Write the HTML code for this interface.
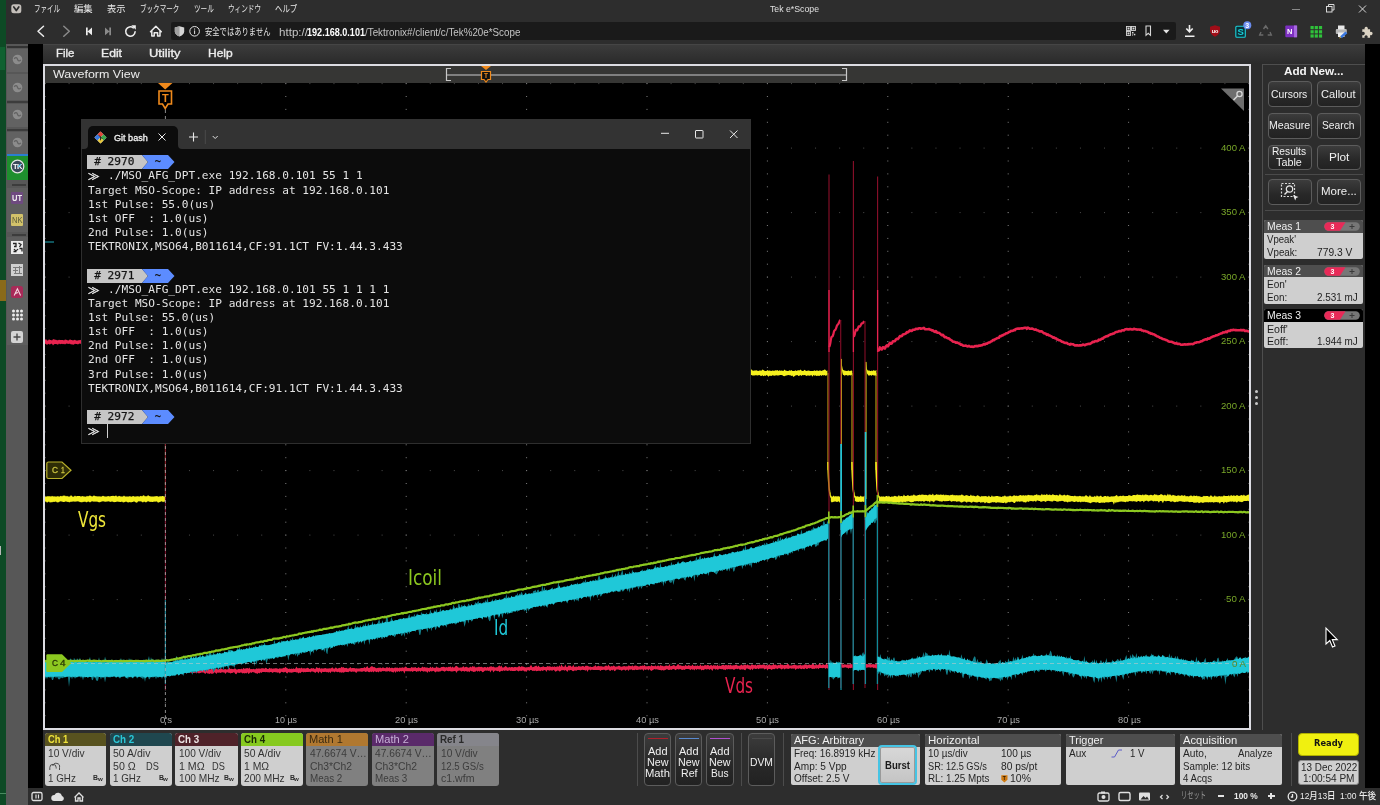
<!DOCTYPE html><html lang="ja"><head><meta charset="utf-8"><title>Tek e*Scope</title><style>
*{box-sizing:border-box;margin:0;padding:0}
html,body{width:1380px;height:805px;overflow:hidden;background:#000}
body{position:relative;font-family:"Liberation Sans","Noto Sans CJK JP",sans-serif;}
div{position:absolute}
svg{position:absolute;overflow:visible}
.btn{border:1px solid #5c5c5c;border-radius:4px;background:linear-gradient(#3c3c3c,#282828 60%,#222);}
</style></head><body><div id="all" style="left:0;top:0;width:1380px;height:805px;will-change:transform"><div style="left:0px;top:0px;width:1380px;height:44px;background:#2d2d2d"></div>
<div style="left:0px;top:0px;width:6px;height:805px;background:#0d4a25"></div>
<div style="left:0px;top:47px;width:5px;height:23px;background:#0f6130"></div>
<div style="left:0px;top:280px;width:6px;height:21px;background:#8a6a1a"></div>
<div style="left:0px;top:546px;width:1px;height:9px;background:#b8b8b8"></div>
<div style="left:0px;top:793px;width:6px;height:1px;background:#4a8a60"></div>
<svg style="left:11px;top:4px" width="11" height="10" viewBox="0 0 11 10"><rect x="0.300" y="0.300" width="10" height="9" rx="2.500" fill="#c4bfba"/><path d="M2.800 3 L5.300 6.600 L7.800 3" fill="none" stroke="#2d2d2d" stroke-width="1.700" stroke-linecap="round" stroke-linejoin="round"/></svg>
<div style="left:33.70px;top:2.16px;height:12px;line-height:12px;font-family:'Noto Sans CJK JP','Liberation Sans',sans-serif;font-size:9.5px;color:#e8e8e8;white-space:pre;transform:scaleX(0.6839);transform-origin:0 0;font-feature-settings:"palt";">ファイル</div>
<div style="left:74.00px;top:2.16px;height:12px;line-height:12px;font-family:'Noto Sans CJK JP','Liberation Sans',sans-serif;font-size:9.5px;color:#e8e8e8;white-space:pre;transform:scaleX(0.9834);transform-origin:0 0;font-feature-settings:"palt";">編集</div>
<div style="left:107.00px;top:2.16px;height:12px;line-height:12px;font-family:'Noto Sans CJK JP','Liberation Sans',sans-serif;font-size:9.5px;color:#e8e8e8;white-space:pre;transform:scaleX(0.9729);transform-origin:0 0;font-feature-settings:"palt";">表示</div>
<div style="left:139.50px;top:2.16px;height:12px;line-height:12px;font-family:'Noto Sans CJK JP','Liberation Sans',sans-serif;font-size:9.5px;color:#e8e8e8;white-space:pre;transform:scaleX(0.6893);transform-origin:0 0;font-feature-settings:"palt";">ブックマーク</div>
<div style="left:193.70px;top:2.16px;height:12px;line-height:12px;font-family:'Noto Sans CJK JP','Liberation Sans',sans-serif;font-size:9.5px;color:#e8e8e8;white-space:pre;transform:scaleX(0.6944);transform-origin:0 0;font-feature-settings:"palt";">ツール</div>
<div style="left:227.50px;top:2.16px;height:12px;line-height:12px;font-family:'Noto Sans CJK JP','Liberation Sans',sans-serif;font-size:9.5px;color:#e8e8e8;white-space:pre;transform:scaleX(0.6945);transform-origin:0 0;font-feature-settings:"palt";">ウィンドウ</div>
<div style="left:274.50px;top:2.16px;height:12px;line-height:12px;font-family:'Noto Sans CJK JP','Liberation Sans',sans-serif;font-size:9.5px;color:#e8e8e8;white-space:pre;transform:scaleX(0.7820);transform-origin:0 0;font-feature-settings:"palt";">ヘルプ</div>
<div style="left:769.50px;top:3.08px;height:12px;line-height:12px;font-family:'Liberation Sans','Noto Sans CJK JP',sans-serif;font-size:9.3px;color:#e0e0e0;white-space:pre;transform:scaleX(0.9386);transform-origin:0 0;">Tek e*Scope</div>
<svg style="left:1285px;top:0" width="95" height="18" viewBox="0 0 95 18"><g stroke="#d8d8d8" stroke-width="1" fill="none"><path d="M7 9.500h8" stroke="#8a8a8a"/><rect x="41.500" y="6.500" width="5.500" height="5.500"/><path d="M43.500 6.500v-2h5.500v5.500h-2"/><path d="M74 5.500l7 7M81 5.500l-7 7"/></g></svg>
<div style="left:171px;top:22px;width:1005px;height:17.8px;background:#1a1a1a;border-radius:2px"></div>
<svg style="left:30px;top:18px" width="140" height="25" viewBox="30 18 140 25">
<g fill="none" stroke="#ececec" stroke-width="1.500" stroke-linecap="round" stroke-linejoin="round">
<path d="M43.500 26.300 L38 31.300 L43.500 36.300"/>
<path d="M63.800 26.300 L69.300 31.300 L63.800 36.300" stroke="#8a8a8a"/>
<path d="M150.500 31.800 L155.900 26.200 L161.300 31.800 M151.800 30.800 V36 H154.200 V32.800 H157.600 V36 H160 V30.800"/>
<path d="M133.300 27.800 A4.700 4.700 0 1 0 135.100 31.800" stroke-width="1.600"/>
</g>
<path d="M131.300 25.300 L135.800 25.300 L135.800 29.800 Z" fill="#ececec"/>
<path d="M86 27.600h1.700v7.600h-1.700zM92 27.600v7.600l-4.500-3.800z" fill="#ececec"/>
<path d="M111 27.600h-1.700v7.600h1.700zM105 27.600v7.600l4.500-3.800z" fill="#8a8a8a"/>
</svg>
<svg style="left:172px;top:22px" width="32" height="20" viewBox="172 22 32 20">
<path d="M179.500 26.300 L184.200 27.600 V31.500 C184.200 34 182 35.600 179.500 36.500 C177 35.600 174.800 34 174.800 31.500 V27.600 Z" fill="#d4d4d4"/>
<path d="M179.500 26.300 V36.500 C177 35.600 174.800 34 174.800 31.500 V27.600 Z" fill="#a0a0a0"/>
<circle cx="194.600" cy="31.300" r="4.800" fill="none" stroke="#e4e4e4" stroke-width="1"/>
<rect x="194.100" y="30.400" width="1" height="3.600" fill="#e4e4e4"/><rect x="194.100" y="28.500" width="1" height="1.100" fill="#e4e4e4"/>
</svg>
<div style="left:205.00px;top:24.86px;height:12px;line-height:12px;font-family:'Noto Sans CJK JP','Liberation Sans',sans-serif;font-size:9.5px;color:#e4e4e4;white-space:pre;transform:scaleX(0.7686);transform-origin:0 0;font-feature-settings:"palt";">安全ではありません</div>
<div style="left:279.10px;top:24.66px;height:14px;line-height:14px;font-family:'Liberation Sans','Noto Sans CJK JP',sans-serif;font-size:10.5px;color:#c4c4c4;white-space:pre;transform:scaleX(1.1041);transform-origin:0 0;">http://</div>
<div style="left:307.40px;top:24.66px;height:14px;line-height:14px;font-family:'Liberation Sans','Noto Sans CJK JP',sans-serif;font-size:10.5px;font-weight:700;color:#ffffff;white-space:pre;transform:scaleX(0.8637);transform-origin:0 0;">192.168.0.101</div>
<div style="left:364.70px;top:24.66px;height:14px;line-height:14px;font-family:'Liberation Sans','Noto Sans CJK JP',sans-serif;font-size:10.5px;color:#c4c4c4;white-space:pre;transform:scaleX(0.9342);transform-origin:0 0;">/Tektronix#/client/c/Tek%20e*Scope</div>
<svg style="left:1120px;top:21px" width="260" height="20" viewBox="0 0 260 20">
<g fill="#d8d8d8">
<rect x="7.500" y="6.500" width="2" height="2"/><rect x="12.500" y="6.500" width="2" height="2"/><rect x="7.500" y="11.500" width="2" height="2"/><rect x="12" y="11" width="1.500" height="1.500"/><rect x="13.800" y="12.800" width="1.500" height="1.500"/><rect x="12" y="13.500" width="1" height="1"/>
</g>
<g fill="none" stroke="#d8d8d8" stroke-width="0.900">
<rect x="6.500" y="5.500" width="4" height="4"/><rect x="11.500" y="5.500" width="4" height="4"/><rect x="6.500" y="10.500" width="4" height="4"/>
<path d="M26 5 h4.500 v9.300 l-2.250 -2 l-2.250 2 z" stroke-width="1.100"/>
</g>
<path d="M43 8.800 l3.300 3.600 l3.300 -3.600 z" fill="#e4e4e4"/>
<path d="M69.500 4 v6.500 M66.300 7.500 l3.200 3.300 l3.200 -3.300 M65 15.300 h9.500" fill="none" stroke="#f0f0f0" stroke-width="1.600"/>
<path d="M95 4.300 l5 1.500 v3.700 c0 3 -2.500 5 -5 6.200 c-2.500 -1.200 -5 -3.200 -5 -6.200 v-3.700 z" fill="#a00d18"/>
<text x="95" y="12" font-size="5.500" fill="#fff" text-anchor="middle" font-family="Liberation Sans" font-weight="bold">uo</text>
<rect x="115.800" y="5.300" width="9.500" height="11" rx="1" fill="#0a3038" stroke="#1ad0d8" stroke-width="1.100"/>
<text x="120.600" y="14.300" font-size="9.500" fill="#1ad0d8" text-anchor="middle" font-family="Liberation Sans" font-weight="bold">S</text>
<circle cx="127.300" cy="4.300" r="4" fill="#6a8cf0"/>
<text x="127.300" y="6.800" font-size="7" fill="#fff" text-anchor="middle" font-family="Liberation Sans" font-weight="bold">3</text>
<g fill="none" stroke="#6a6a6a" stroke-width="1.400"><path d="M143.500 8 l2.200 -3.200 l2.200 3.200 M150 11 l1.300 3 h-3.600 M141 11 l-1.300 3 h3.600"/></g>
<rect x="165.300" y="4.500" width="11.800" height="11.800" rx="1" fill="#7d2fc2"/>
<rect x="174" y="4.500" width="3.100" height="11.800" fill="#a86ae0"/>
<text x="169.800" y="13.300" font-size="7.500" fill="#fff" text-anchor="middle" font-family="Liberation Sans" font-weight="bold">N</text>
<g fill="#2fc23a"><rect x="190.500" y="5" width="3.200" height="3.200"/><rect x="194.700" y="5" width="3.200" height="3.200"/><rect x="198.900" y="5" width="3.200" height="3.200"/><rect x="190.500" y="9.200" width="3.200" height="3.200"/><rect x="194.700" y="9.200" width="3.200" height="3.200"/><rect x="198.900" y="9.200" width="3.200" height="3.200"/><rect x="190.500" y="13.400" width="3.200" height="3.200"/><rect x="194.700" y="13.400" width="3.200" height="3.200"/><rect x="198.900" y="13.400" width="3.200" height="3.200"/></g>
<rect x="215.800" y="8" width="11" height="5" rx="1" fill="#b8b8b8"/><rect x="218" y="4.500" width="6.500" height="4" fill="#e8e8e8"/><rect x="218" y="11.500" width="6.500" height="4.500" fill="#f0f0f0"/>
<path d="M220 15.500 l5.500 -5 l1.800 1.800 l-5.500 5 z" fill="#3a78e0"/><path d="M219 17.500 l1.200 -2 l1 1 z" fill="#e8c040"/>
<path d="M242.300 8.300 h2.400 a1.700 1.700 0 1 1 3 0 h2.400 v2.700 a1.700 1.700 0 1 1 0 3 v2.700 h-2.600 a1.600 1.600 0 1 0 -2.800 0 h-2.400 v-2.700 a1.700 1.700 0 1 0 0 -3 z" fill="#dcd4c4"/>
</svg>
<div style="left:6px;top:44px;width:22px;height:761px;background:#575757"></div>
<div style="left:7px;top:46px;width:21px;height:2px;background:#333"></div>
<div style="left:7px;top:49px;width:21px;height:23px;background:#626262"></div>
<div style="left:7px;top:74px;width:21px;height:26px;background:#626262"></div>
<div style="left:7px;top:104px;width:21px;height:23px;background:#626262"></div>
<div style="left:7px;top:132px;width:21px;height:22px;background:#626262"></div>
<svg style="left:11.500px;top:54.0px" width="11" height="11" viewBox="0 0 11 11"><circle cx="5.500" cy="5.500" r="4.800" fill="#8c8c8c"/><path d="M2.200 4.800 q2.200 -2.500 3.300 0.500 t3.300 0.600" stroke="#626262" stroke-width="1.300" fill="none"/></svg>
<svg style="left:11.500px;top:81.5px" width="11" height="11" viewBox="0 0 11 11"><circle cx="5.500" cy="5.500" r="4.800" fill="#8c8c8c"/><path d="M2.200 4.800 q2.200 -2.500 3.300 0.500 t3.300 0.600" stroke="#626262" stroke-width="1.300" fill="none"/></svg>
<svg style="left:11.500px;top:109.1px" width="11" height="11" viewBox="0 0 11 11"><circle cx="5.500" cy="5.500" r="4.800" fill="#8c8c8c"/><path d="M2.200 4.800 q2.200 -2.500 3.300 0.500 t3.300 0.600" stroke="#626262" stroke-width="1.300" fill="none"/></svg>
<svg style="left:11.500px;top:136.5px" width="11" height="11" viewBox="0 0 11 11"><circle cx="5.500" cy="5.500" r="4.800" fill="#8c8c8c"/><path d="M2.200 4.800 q2.200 -2.500 3.300 0.500 t3.300 0.600" stroke="#626262" stroke-width="1.300" fill="none"/></svg>
<div style="left:7px;top:101px;width:21px;height:2px;background:#3c3c3c"></div>
<div style="left:7px;top:129px;width:21px;height:2px;background:#3c3c3c"></div>
<div style="left:7px;top:154px;width:21px;height:2px;background:#2a7fd0"></div>
<div style="left:7px;top:156px;width:21px;height:24px;background:#1e8f2e"></div>
<svg style="left:10px;top:158.500px" width="15" height="15" viewBox="0 0 15 15"><circle cx="7.500" cy="7.500" r="6.300" fill="#3a4a5a" stroke="#e4e4e4" stroke-width="1.200"/><text x="7.500" y="10.300" font-size="7.500" fill="#fff" text-anchor="middle" font-family="Liberation Sans" font-weight="bold" letter-spacing="-0.500">TK</text><path d="M10.800 5.100 L8.200 8" stroke="#30c0f0" stroke-width="1.100"/></svg>
<div style="left:12px;top:184px;width:14px;height:2px;background:#3c3c3c"></div>
<div style="left:7px;top:188px;width:21px;height:44px;background:#5e5e5e"></div>
<div style="left:10.7px;top:191.6px;width:12.8px;height:12px;background:#6e4a80;border-radius:1px"></div>
<div style="left:12.30px;top:192.55px;height:11px;line-height:11px;font-family:'Liberation Sans','Noto Sans CJK JP',sans-serif;font-size:8.5px;font-weight:700;color:#f0f0f0;white-space:pre;transform:scaleX(0.8815);transform-origin:0 0;">UT</div>
<div style="left:10.7px;top:214.2px;width:12.8px;height:11.6px;background:#d2c26a;border-radius:1px"></div>
<div style="left:11.80px;top:215.15px;height:11px;line-height:11px;font-family:'Liberation Sans','Noto Sans CJK JP',sans-serif;font-size:8.5px;color:#5a5a3a;white-space:pre;transform:scaleX(0.8889);transform-origin:0 0;">NK</div>
<div style="left:12px;top:233.5px;width:14px;height:2px;background:#3c3c3c"></div>
<div style="left:7px;top:237px;width:21px;height:108px;background:#5e5e5e"></div>
<div style="left:10.7px;top:240.8px;width:12.8px;height:13px;background:#ececec"></div>
<svg style="left:10.700px;top:240.800px" width="13" height="13" viewBox="0 0 13 13"><path d="M2 2.500 h3 v3 h-2 M7.500 2 l2.500 1.500 -1.500 2.500 M3 8 q2 3 4 0 M8.500 7.500 h2.500 v3 M2.500 10.500 h3" stroke="#222" stroke-width="1.300" fill="none"/></svg>
<div style="left:10.7px;top:263.9px;width:12.8px;height:12.2px;background:#cfcfcf"></div>
<svg style="left:10.700px;top:263.900px" width="13" height="12" viewBox="0 0 13 12"><path d="M2 3.500 h9 M2 6.500 h5 M3 9.500 h8 M8.500 2 v8 M4.500 4 v5" stroke="#7a7a7a" stroke-width="1" fill="none"/></svg>
<div style="left:10.7px;top:286.2px;width:12.8px;height:12.3px;background:#a82a58;border-radius:2.500px"></div>
<svg style="left:10.700px;top:286.200px" width="13" height="12" viewBox="0 0 13 12"><path d="M3.200 9.500 L6.400 2.800 L9.600 9.500 M4.300 7.500 L7 6.500" stroke="#f4d8e0" stroke-width="1.100" fill="none"/></svg>
<svg style="left:10.700px;top:308.600px" width="13" height="12" viewBox="0 0 13 12"><g fill="#ececec"><circle cx="2.500" cy="2" r="1.500"/><circle cx="6.500" cy="2" r="1.500"/><circle cx="10.500" cy="2" r="1.500"/><circle cx="2.500" cy="6" r="1.500"/><circle cx="6.500" cy="6" r="1.500"/><circle cx="10.500" cy="6" r="1.500"/><circle cx="2.500" cy="10" r="1.500"/><circle cx="6.500" cy="10" r="1.500"/><circle cx="10.500" cy="10" r="1.500"/></g></svg>
<div style="left:11px;top:331px;width:12px;height:12px;background:#d4d4d4;border-radius:2px"></div>
<svg style="left:11px;top:331px" width="12" height="12" viewBox="0 0 12 12"><path d="M6 2.500 v7 M2.500 6 h7" stroke="#4a4a4a" stroke-width="1.400"/></svg>
<div style="left:28px;top:44px;width:15px;height:744px;background:#000"></div>
<div style="left:43px;top:44px;width:1322px;height:744px;background:#2b2b2b"></div>
<div style="left:1365px;top:44px;width:15px;height:744px;background:#000"></div>
<div style="left:43px;top:43.5px;width:1322px;height:20.5px;background:linear-gradient(#4a4a4a 0,#3b3b3b 1.5px,#2a2a2a 100%)"></div>
<div style="left:55.80px;top:46.22px;height:15px;line-height:15px;font-family:'Liberation Sans','Noto Sans CJK JP',sans-serif;font-size:11.2px;color:#ececec;white-space:pre;transform:scaleX(1.0260);transform-origin:0 0;-webkit-text-stroke:0.35px #ececec;">File</div>
<div style="left:101.30px;top:46.22px;height:15px;line-height:15px;font-family:'Liberation Sans','Noto Sans CJK JP',sans-serif;font-size:11.2px;color:#ececec;white-space:pre;transform:scaleX(1.0891);transform-origin:0 0;-webkit-text-stroke:0.35px #ececec;">Edit</div>
<div style="left:149.00px;top:46.22px;height:15px;line-height:15px;font-family:'Liberation Sans','Noto Sans CJK JP',sans-serif;font-size:11.2px;color:#ececec;white-space:pre;transform:scaleX(1.1513);transform-origin:0 0;-webkit-text-stroke:0.35px #ececec;">Utility</div>
<div style="left:207.80px;top:46.22px;height:15px;line-height:15px;font-family:'Liberation Sans','Noto Sans CJK JP',sans-serif;font-size:11.2px;color:#ececec;white-space:pre;transform:scaleX(1.0732);transform-origin:0 0;-webkit-text-stroke:0.35px #ececec;">Help</div>
<div style="left:43px;top:64px;width:1208px;height:666px;background:#dcdce2"></div>
<div style="left:45px;top:66px;width:1204px;height:17.5px;background:#363634"></div>
<div style="left:53.30px;top:66.38px;height:15px;line-height:15px;font-family:'Liberation Sans','Noto Sans CJK JP',sans-serif;font-size:11.6px;color:#ececec;white-space:pre;transform:scaleX(1.0764);transform-origin:0 0;">Waveform View</div>
<div style="left:45px;top:83px;width:1204px;height:645px;background:#000"></div>
<svg style="left:440px;top:64px" width="420" height="22" viewBox="440 64 420 22">
<path d="M451 68.500 H446.500 V80.500 H451" fill="none" stroke="#c8c8c8" stroke-width="1.200"/>
<path d="M842 68.500 H846.500 V80.500 H842" fill="none" stroke="#c8c8c8" stroke-width="1.200"/>
<path d="M447 75 H846" stroke="#9a9a9a" stroke-width="1.600"/>
<path d="M481 66 H491 L486 70 Z" fill="#f08a1c"/>
<path d="M481.500 71.500 H490.500 V79.500 H488 L486 82 L484 79.500 H481.500 Z" fill="#111" stroke="#f08a1c" stroke-width="1.200"/>
<text x="486" y="78.300" font-size="6.500" fill="#f08a1c" text-anchor="middle" font-family="Liberation Sans" font-weight="bold">T</text>
</svg>
<svg style="left:45px;top:83px" width="1204" height="645" viewBox="45 83 1204 645"><defs><clipPath id="cp"><rect x="45" y="83" width="1204" height="645"/></clipPath></defs><g clip-path="url(#cp)">
<line x1="44.5" y1="83.6" x2="1249.5" y2="83.6" stroke="#4c4c4c" stroke-width="1" stroke-dasharray="1,23.080"/><line x1="44.5" y1="148.1" x2="1249.5" y2="148.1" stroke="#4c4c4c" stroke-width="1" stroke-dasharray="1,23.080"/><line x1="44.5" y1="212.6" x2="1249.5" y2="212.6" stroke="#4c4c4c" stroke-width="1" stroke-dasharray="1,23.080"/><line x1="44.5" y1="277.1" x2="1249.5" y2="277.1" stroke="#4c4c4c" stroke-width="1" stroke-dasharray="1,23.080"/><line x1="44.5" y1="341.6" x2="1249.5" y2="341.6" stroke="#4c4c4c" stroke-width="1" stroke-dasharray="1,23.080"/><line x1="44.5" y1="406.1" x2="1249.5" y2="406.1" stroke="#4c4c4c" stroke-width="1" stroke-dasharray="1,23.080"/><line x1="44.5" y1="470.6" x2="1249.5" y2="470.6" stroke="#4c4c4c" stroke-width="1" stroke-dasharray="1,23.080"/><line x1="44.5" y1="535.1" x2="1249.5" y2="535.1" stroke="#4c4c4c" stroke-width="1" stroke-dasharray="1,23.080"/><line x1="44.5" y1="599.6" x2="1249.5" y2="599.6" stroke="#4c4c4c" stroke-width="1" stroke-dasharray="1,23.080"/><line x1="44.5" y1="664.1" x2="1249.5" y2="664.1" stroke="#4c4c4c" stroke-width="1" stroke-dasharray="1,23.080"/><line x1="44.5" y1="728.6" x2="1249.5" y2="728.6" stroke="#4c4c4c" stroke-width="1" stroke-dasharray="1,23.080"/><line x1="45" y1="83.1" x2="45" y2="728.5" stroke="#808080" stroke-width="1" stroke-dasharray="1,11.900"/><line x1="165.4" y1="83.1" x2="165.4" y2="728.5" stroke="#808080" stroke-width="1" stroke-dasharray="1,11.900"/><line x1="285.8" y1="83.1" x2="285.8" y2="728.5" stroke="#808080" stroke-width="1" stroke-dasharray="1,11.900"/><line x1="406.2" y1="83.1" x2="406.2" y2="728.5" stroke="#808080" stroke-width="1" stroke-dasharray="1,11.900"/><line x1="526.6" y1="83.1" x2="526.6" y2="728.5" stroke="#808080" stroke-width="1" stroke-dasharray="1,11.900"/><line x1="647" y1="83.1" x2="647" y2="728.5" stroke="#808080" stroke-width="1" stroke-dasharray="1,11.900"/><line x1="767.4" y1="83.1" x2="767.4" y2="728.5" stroke="#808080" stroke-width="1" stroke-dasharray="1,11.900"/><line x1="887.8" y1="83.1" x2="887.8" y2="728.5" stroke="#808080" stroke-width="1" stroke-dasharray="1,11.900"/><line x1="1008.2" y1="83.1" x2="1008.2" y2="728.5" stroke="#808080" stroke-width="1" stroke-dasharray="1,11.900"/><line x1="1128.6" y1="83.1" x2="1128.6" y2="728.5" stroke="#808080" stroke-width="1" stroke-dasharray="1,11.900"/><line x1="1249" y1="83.1" x2="1249" y2="728.5" stroke="#808080" stroke-width="1" stroke-dasharray="1,11.900"/>
<polygon points="45,496.7 46,496.5 47,496.5 48,496.1 49,496.4 50,496 51,496.7 52,495.8 53,496.4 54,496.3 55,496.4 56,496.5 57,496.6 58,496 59,496.7 60,496.2 61,495.8 62,496.4 63,495.4 64,495.8 65,495.4 66,496.5 67,495.8 68,496.5 69,496.6 70,496.6 71,494.9 72,496.3 73,496.7 74,496.6 75,495.6 76,496.4 77,496 78,496.1 79,496 80,496.1 81,496.7 82,496.1 83,496.3 84,496.6 85,496.6 86,496.7 87,495.8 88,496.6 89,495.7 90,495.6 91,496.1 92,496.6 93,496.3 94,495.3 95,496.2 96,495.9 97,496.6 98,496.3 99,496.6 100,496.2 101,496.7 102,496.2 103,495.7 104,496.2 105,496.6 106,496.4 107,496.6 108,495.9 109,496.3 110,496.6 111,496.1 112,495.9 113,495.8 114,496.1 115,496.2 116,495.3 117,496.4 118,496.6 119,495.8 120,496.2 121,496.5 122,496.4 123,496.5 124,495.6 125,496.4 126,496.5 127,496.5 128,496.6 129,496.6 130,495.9 131,496.7 132,496.4 133,495.9 134,496.2 135,496.7 136,496.2 137,496.5 138,496 139,496.7 140,496.3 141,495.8 142,496.5 143,495.5 144,495.3 145,496.5 146,496.1 147,496.6 148,495.1 149,496.1 150,496.3 151,496.6 152,496.4 153,496.6 154,496.6 155,496.2 156,496.3 157,496 158,496.6 159,496.7 160,496 161,496.5 162,496.1 163,496 164,496.6 165,496.6 165,501.8 164,501.6 163,502.3 162,501.3 161,501.4 160,501.9 159,502.3 158,502.7 157,501.5 156,501.5 155,501.8 154,501.4 153,501.9 152,502 151,501.8 150,502 149,501.6 148,501.3 147,501.7 146,502.5 145,502 144,501.4 143,502.4 142,501.9 141,501.3 140,501.5 139,501.3 138,501.5 137,502.8 136,502.5 135,501.9 134,501.3 133,502 132,501.9 131,502.5 130,502.1 129,502.3 128,502.6 127,501.9 126,501.6 125,501.9 124,502.2 123,502.4 122,501.6 121,501.9 120,501.9 119,501.8 118,501.7 117,501.4 116,502 115,502 114,502.3 113,501.7 112,501.6 111,501.8 110,502.1 109,501.3 108,501.4 107,501.5 106,501.7 105,501.7 104,501.6 103,501.3 102,501.5 101,501.7 100,502.2 99,502.2 98,502.1 97,501.4 96,501.7 95,501.6 94,501.8 93,501.4 92,501.3 91,501.8 90,502.5 89,501.7 88,501.4 87,502.3 86,502.3 85,501.5 84,502 83,501.8 82,502.5 81,501.9 80,502.3 79,501.5 78,501.6 77,501.3 76,501.7 75,501.5 74,501.8 73,501.3 72,502 71,501.4 70,502.2 69,502.2 68,501.7 67,501.9 66,501.3 65,501.7 64,502.1 63,502 62,501.4 61,501.5 60,501.3 59,502.3 58,502.2 57,502.4 56,501.4 55,501.8 54,501.9 53,501.8 52,502.5 51,501.9 50,502.8 49,501.6 48,502.1 47,502.7 46,501.4 45,501.7" fill="#f5f01e"/>
<line x1="165.4" y1="373" x2="165.4" y2="499" stroke="#a88a10" stroke-width="1.0" opacity="0.6"/>
<polygon points="165.4,371 166.4,371 167.4,370.9 168.4,370.3 169.4,371.1 170.4,369.6 171.4,370.6 172.4,369.7 173.4,368.8 174.4,370.7 175.4,370.2 176.4,371.1 177.4,370.3 178.4,370.4 179.4,370.3 180.4,371 181.4,371.1 182.4,371.1 183.4,371.1 184.4,370.5 185.4,370.7 186.4,370.9 187.4,370.4 188.4,370.7 189.4,370.6 190.4,370.3 191.4,370.2 192.4,371 193.4,371.1 194.4,370.2 195.4,369.9 196.4,370.1 197.4,370.8 198.4,370.6 199.4,370.8 200.4,369.3 201.4,370.9 202.4,371.1 203.4,371 204.4,370.3 205.4,370.9 206.4,371 207.4,370.3 208.4,370.9 209.4,371.1 210.4,370 211.4,370.7 212.4,370.8 213.4,369.8 214.4,370 215.4,370.4 216.4,370.5 217.4,370.6 218.4,371 219.4,370.9 220.4,370.9 221.4,371 222.4,371.1 223.4,370 224.4,370.7 225.4,371.1 226.4,370.7 227.4,370.7 228.4,370 229.4,370.7 230.4,371.1 231.4,370.9 232.4,370.3 233.4,371.1 234.4,370.5 235.4,370.8 236.4,370.9 237.4,370.9 238.4,371 239.4,370 240.4,370.9 241.4,370.5 242.4,370.5 243.4,370.6 244.4,370.7 245.4,370 246.4,370.9 247.4,370.7 248.4,371 249.4,371.1 250.4,370.4 251.4,370.8 252.4,369.7 253.4,370.9 254.4,371 255.4,370.4 256.4,370.9 257.4,370.2 258.4,370.3 259.4,370.2 260.4,370.5 261.4,370.3 262.4,370 263.4,370.9 264.4,370.7 265.4,369.7 266.4,371 267.4,370.7 268.4,370.2 269.4,371.1 270.4,370.1 271.4,370.4 272.4,370.4 273.4,370.5 274.4,370.7 275.4,370.9 276.4,371 277.4,370.9 278.4,370.9 279.4,370.9 280.4,371.1 281.4,371 282.4,371 283.4,370.7 284.4,369.8 285.4,370.7 286.4,371.1 287.4,369.9 288.4,370.8 289.4,369.7 290.4,370.1 291.4,370.5 292.4,370.6 293.4,371 294.4,369.9 295.4,370.8 296.4,370.6 297.4,370.7 298.4,369.5 299.4,370.9 300.4,370.6 301.4,370.3 302.4,371.1 303.4,371 304.4,370.3 305.4,371 306.4,370.3 307.4,370.3 308.4,370.4 309.4,370.3 310.4,370.8 311.4,370.7 312.4,371 313.4,370.8 314.4,370.9 315.4,370.2 316.4,370.1 317.4,370.5 318.4,371 319.4,370.9 320.4,370.4 321.4,369.9 322.4,370.6 323.4,371 324.4,370.8 325.4,370.8 326.4,370.4 327.4,371 328.4,370.3 329.4,370.4 330.4,370.5 331.4,370.8 332.4,369.8 333.4,370.2 334.4,370.7 335.4,370.2 336.4,370.8 337.4,370.9 338.4,370.3 339.4,369.3 340.4,371 341.4,370 342.4,370.6 343.4,371 344.4,369.9 345.4,370.8 346.4,370.4 347.4,370.2 348.4,370.3 349.4,370.9 350.4,370.4 351.4,370.7 352.4,370.8 353.4,371.1 354.4,370.7 355.4,370.5 356.4,370.9 357.4,370.4 358.4,370.2 359.4,371.1 360.4,370.5 361.4,370 362.4,371.1 363.4,370.6 364.4,370.4 365.4,370.5 366.4,370.7 367.4,370.1 368.4,370.6 369.4,370.8 370.4,370.9 371.4,370.6 372.4,370.7 373.4,371 374.4,370.7 375.4,371.1 376.4,370.3 377.4,371 378.4,371.1 379.4,370.4 380.4,370.5 381.4,371.1 382.4,369.9 383.4,370.6 384.4,370.3 385.4,369.8 386.4,371.1 387.4,370.3 388.4,370 389.4,370.3 390.4,370.6 391.4,370.3 392.4,370.8 393.4,370.5 394.4,370.6 395.4,370.7 396.4,370.6 397.4,370.8 398.4,370.4 399.4,370.3 400.4,369.8 401.4,369.8 402.4,370.9 403.4,370.9 404.4,371.1 405.4,371 406.4,371.1 407.4,369.8 408.4,370.4 409.4,370 410.4,370.4 411.4,370.2 412.4,370.6 413.4,370.5 414.4,370.4 415.4,370.1 416.4,370.9 417.4,370.1 418.4,369.1 419.4,370.7 420.4,370.3 421.4,370.4 422.4,370.3 423.4,370.9 424.4,370 425.4,370.4 426.4,370.1 427.4,370.5 428.4,370.8 429.4,370.5 430.4,369.8 431.4,370.8 432.4,371.1 433.4,371 434.4,371 435.4,370.3 436.4,371.1 437.4,371.1 438.4,370.2 439.4,369.8 440.4,371 441.4,370.6 442.4,371.1 443.4,370.7 444.4,370.6 445.4,371.1 446.4,370.4 447.4,370.7 448.4,371 449.4,370.9 450.4,371 451.4,370.6 452.4,370.4 453.4,370.9 454.4,370.7 455.4,370.9 456.4,371.1 457.4,370.1 458.4,371.1 459.4,370.2 460.4,370.7 461.4,370.9 462.4,369.6 463.4,371 464.4,371 465.4,371 466.4,370.8 467.4,370.8 468.4,370.4 469.4,370.9 470.4,370.7 471.4,371 472.4,370.3 473.4,370.9 474.4,371 475.4,371 476.4,370.8 477.4,370.7 478.4,369.9 479.4,370.8 480.4,370.9 481.4,370.9 482.4,370.8 483.4,370.6 484.4,370.9 485.4,370.7 486.4,370.8 487.4,371 488.4,370 489.4,370.7 490.4,370.3 491.4,370.4 492.4,370.9 493.4,370 494.4,370.4 495.4,371 496.4,369.3 497.4,370.8 498.4,370.1 499.4,370.2 500.4,370.7 501.4,370.2 502.4,370.8 503.4,370.9 504.4,369.9 505.4,370 506.4,371 507.4,370.9 508.4,370.2 509.4,370.6 510.4,370.8 511.4,370.8 512.4,371 513.4,370.4 514.4,370.6 515.4,371.1 516.4,370.6 517.4,370.7 518.4,370.4 519.4,370.8 520.4,370.9 521.4,370.8 522.4,370.4 523.4,370 524.4,370.7 525.4,371.1 526.4,370.9 527.4,369.9 528.4,370.8 529.4,370.7 530.4,370.5 531.4,369.5 532.4,370.9 533.4,370.5 534.4,370.8 535.4,370.7 536.4,371.1 537.4,370.6 538.4,369.2 539.4,371 540.4,370.7 541.4,370.6 542.4,369.9 543.4,370.3 544.4,370.9 545.4,370.9 546.4,370.5 547.4,370.7 548.4,371.1 549.4,370.5 550.4,369.7 551.4,371 552.4,371.1 553.4,371 554.4,370.2 555.4,371.1 556.4,370.1 557.4,370.4 558.4,371 559.4,371 560.4,370.5 561.4,370.4 562.4,370 563.4,370.5 564.4,370.9 565.4,370.6 566.4,370 567.4,370.4 568.4,370.8 569.4,370.8 570.4,370.8 571.4,370.4 572.4,370.9 573.4,370.3 574.4,370.5 575.4,370.5 576.4,371 577.4,370.6 578.4,370.6 579.4,370.9 580.4,370.5 581.4,371 582.4,370.9 583.4,370.5 584.4,370.7 585.4,370.8 586.4,370.3 587.4,369.5 588.4,369.7 589.4,371.1 590.4,370.9 591.4,370 592.4,371 593.4,370.4 594.4,371 595.4,370.8 596.4,370.5 597.4,369.9 598.4,370.1 599.4,370.6 600.4,370.6 601.4,371 602.4,371 603.4,370.7 604.4,370.9 605.4,370.8 606.4,370.5 607.4,370.8 608.4,370.4 609.4,370.3 610.4,371.1 611.4,370.6 612.4,370.9 613.4,370.9 614.4,370.6 615.4,370 616.4,370.4 617.4,370.8 618.4,369.3 619.4,370.4 620.4,371 621.4,370.6 622.4,369.7 623.4,370.9 624.4,370.8 625.4,370.3 626.4,370.8 627.4,370.6 628.4,370.7 629.4,369.8 630.4,369.9 631.4,370.7 632.4,370.6 633.4,369.7 634.4,370.7 635.4,371 636.4,370.8 637.4,370.6 638.4,370.9 639.4,369.9 640.4,370.8 641.4,370.6 642.4,370.9 643.4,370.7 644.4,370.9 645.4,369.5 646.4,370.2 647.4,370.9 648.4,370.3 649.4,369.7 650.4,371.1 651.4,369.8 652.4,370.5 653.4,370.3 654.4,370.7 655.4,371 656.4,369.7 657.4,370.9 658.4,370 659.4,370.9 660.4,371 661.4,370.9 662.4,371 663.4,370.7 664.4,370.7 665.4,369.9 666.4,371.1 667.4,369.8 668.4,369.7 669.4,370.2 670.4,370.6 671.4,370.6 672.4,370.1 673.4,371.1 674.4,371.1 675.4,370.9 676.4,371 677.4,370.8 678.4,371 679.4,370.3 680.4,370.8 681.4,369.5 682.4,371.1 683.4,370.9 684.4,370.7 685.4,370.6 686.4,370.3 687.4,371 688.4,370.5 689.4,370.9 690.4,371 691.4,370 692.4,370.6 693.4,371 694.4,370.7 695.4,370.1 696.4,369.7 697.4,370.6 698.4,370.7 699.4,370.6 700.4,370.7 701.4,370.1 702.4,370 703.4,370.6 704.4,370.9 705.4,370.6 706.4,370.7 707.4,370.5 708.4,369.6 709.4,370.8 710.4,370.1 711.4,370.6 712.4,370.8 713.4,370.9 714.4,370 715.4,371 716.4,370 717.4,370.6 718.4,370.5 719.4,370.2 720.4,370.8 721.4,370.6 722.4,369.7 723.4,370.6 724.4,371 725.4,370.9 726.4,371 727.4,370.7 728.4,371.1 729.4,370.2 730.4,370.8 731.4,370.8 732.4,370.8 733.4,370.1 734.4,371 735.4,370.9 736.4,371 737.4,370.1 738.4,370 739.4,371 740.4,370.3 741.4,369.9 742.4,370.9 743.4,371 744.4,370.6 745.4,371 746.4,370.7 747.4,370.7 748.4,370.6 749.4,371.1 750.4,370.4 751.4,369.3 752.4,370.4 753.4,370.8 754.4,370.5 755.4,370.6 756.4,370.3 757.4,370.8 758.4,371.1 759.4,370.4 760.4,370.4 761.4,370.8 762.4,369.6 763.4,370.1 764.4,370.8 765.4,371 766.4,371 767.4,369.9 768.4,370.8 769.4,370.5 770.4,370.7 771.4,371 772.4,370.5 773.4,370.7 774.4,370.7 775.4,370.3 776.4,370.5 777.4,370.1 778.4,370.9 779.4,370.3 780.4,370.8 781.4,370.4 782.4,370.7 783.4,371 784.4,369.4 785.4,370.6 786.4,370.7 787.4,371 788.4,370.9 789.4,370.3 790.4,370.8 791.4,369.9 792.4,370.9 793.4,371.1 794.4,371 795.4,370.2 796.4,370.9 797.4,370.5 798.4,370.3 799.4,370.5 800.4,369.6 801.4,370.6 802.4,370.9 803.4,371 804.4,369.8 805.4,370.5 806.4,371 807.4,370.8 808.4,370.6 809.4,370.8 810.4,370.9 811.4,370.9 812.4,371 813.4,371 814.4,370.3 815.4,371.1 816.4,370.5 817.4,370.4 818.4,370.9 819.4,370.6 820.4,370.4 821.4,371 822.4,370.4 823.4,370.3 824.4,369.5 825.4,369.7 826.4,370.9 827.4,370.6 827.4,374.9 826.4,375.6 825.4,375.8 824.4,374.9 823.4,375.5 822.4,375.1 821.4,376 820.4,375 819.4,375.9 818.4,375.7 817.4,375.7 816.4,376 815.4,375.2 814.4,375.7 813.4,374.9 812.4,376.8 811.4,375 810.4,375.4 809.4,375.8 808.4,375.5 807.4,375.6 806.4,376 805.4,375.2 804.4,375 803.4,375.2 802.4,375 801.4,376 800.4,375 799.4,375.7 798.4,375.9 797.4,375 796.4,375.2 795.4,375.6 794.4,376.2 793.4,377 792.4,375.4 791.4,376.1 790.4,375.2 789.4,375.3 788.4,375 787.4,375.2 786.4,375.4 785.4,375.7 784.4,376.3 783.4,375.9 782.4,375.2 781.4,375 780.4,375 779.4,375.3 778.4,375.4 777.4,375.5 776.4,375.2 775.4,375.4 774.4,375.8 773.4,375.4 772.4,375.2 771.4,376.1 770.4,375.7 769.4,375.8 768.4,376.8 767.4,375.4 766.4,375.1 765.4,375.9 764.4,375.5 763.4,376.2 762.4,375.3 761.4,376.1 760.4,375.8 759.4,375 758.4,375.2 757.4,375.4 756.4,375.2 755.4,375.2 754.4,375.6 753.4,375.5 752.4,375.5 751.4,375 750.4,374.9 749.4,375.5 748.4,376.8 747.4,375.6 746.4,375 745.4,375.1 744.4,375.5 743.4,375.3 742.4,375.4 741.4,375.4 740.4,375.2 739.4,375.3 738.4,375.1 737.4,375.6 736.4,374.9 735.4,375.3 734.4,375.6 733.4,375.8 732.4,375.8 731.4,376.2 730.4,375.1 729.4,375.4 728.4,376.5 727.4,375 726.4,375.7 725.4,375.1 724.4,375.2 723.4,375.4 722.4,375.9 721.4,375 720.4,375.1 719.4,375 718.4,375.6 717.4,376 716.4,376.8 715.4,376.8 714.4,375.4 713.4,375.9 712.4,376 711.4,375.9 710.4,375.1 709.4,375.5 708.4,376.1 707.4,375.4 706.4,375.6 705.4,375.5 704.4,375.9 703.4,375.2 702.4,375 701.4,375.6 700.4,375 699.4,375.9 698.4,375.2 697.4,376.1 696.4,375.2 695.4,375.3 694.4,375.3 693.4,375.1 692.4,375.1 691.4,375.5 690.4,375.1 689.4,375.4 688.4,375.4 687.4,375.2 686.4,376.6 685.4,375.9 684.4,375.8 683.4,375.7 682.4,375.5 681.4,375.1 680.4,375.4 679.4,376 678.4,375 677.4,375.8 676.4,375.1 675.4,375.8 674.4,375.5 673.4,375.1 672.4,375.4 671.4,375.7 670.4,374.9 669.4,375.8 668.4,376.3 667.4,375 666.4,375 665.4,375.6 664.4,375 663.4,376.1 662.4,376.4 661.4,375 660.4,375.7 659.4,374.9 658.4,376 657.4,376 656.4,375.9 655.4,375.5 654.4,376.2 653.4,375.4 652.4,376.9 651.4,376.7 650.4,375.4 649.4,375.3 648.4,375.7 647.4,375 646.4,375.6 645.4,375.8 644.4,375.6 643.4,375.7 642.4,376.7 641.4,376.4 640.4,376 639.4,375.4 638.4,375.1 637.4,376.4 636.4,375.3 635.4,375.2 634.4,375.1 633.4,376.1 632.4,375.3 631.4,375.3 630.4,375.4 629.4,375.3 628.4,375.3 627.4,375.6 626.4,375.9 625.4,375.1 624.4,375.1 623.4,375.8 622.4,375.7 621.4,375.1 620.4,376.1 619.4,375.1 618.4,375.1 617.4,375.5 616.4,375.4 615.4,375.9 614.4,376.3 613.4,375.2 612.4,375 611.4,376 610.4,375.8 609.4,376.2 608.4,375.2 607.4,375.8 606.4,375.8 605.4,375.4 604.4,374.9 603.4,375.8 602.4,375.4 601.4,375.2 600.4,375.2 599.4,375.5 598.4,375.1 597.4,375 596.4,375.8 595.4,375.8 594.4,375.6 593.4,375.3 592.4,375.8 591.4,375.4 590.4,376.8 589.4,375.5 588.4,376 587.4,375.1 586.4,374.9 585.4,376.2 584.4,375.9 583.4,375.9 582.4,375.1 581.4,375.1 580.4,376 579.4,375.1 578.4,375.4 577.4,376.7 576.4,375 575.4,375.3 574.4,375.3 573.4,375.7 572.4,376 571.4,375.4 570.4,374.9 569.4,375.5 568.4,375 567.4,375.5 566.4,375.1 565.4,376.1 564.4,376 563.4,374.9 562.4,375.3 561.4,375 560.4,375 559.4,375 558.4,375 557.4,375.6 556.4,376.1 555.4,375.3 554.4,375.8 553.4,375.5 552.4,376 551.4,375.9 550.4,375.7 549.4,375.9 548.4,375 547.4,376 546.4,375.6 545.4,375.2 544.4,375.9 543.4,375.3 542.4,375.3 541.4,375.3 540.4,375.3 539.4,375.1 538.4,375.8 537.4,375.5 536.4,375.4 535.4,375 534.4,374.9 533.4,375.9 532.4,375.4 531.4,376.9 530.4,375 529.4,375.1 528.4,375.3 527.4,375.4 526.4,375 525.4,375.5 524.4,375.2 523.4,375.5 522.4,375.4 521.4,375.2 520.4,375.1 519.4,375.8 518.4,375.2 517.4,376.3 516.4,375.7 515.4,375.2 514.4,375.7 513.4,375 512.4,375.6 511.4,375.2 510.4,375.4 509.4,376.6 508.4,375.1 507.4,375.6 506.4,375.5 505.4,375.1 504.4,375.4 503.4,375.9 502.4,375.5 501.4,375.2 500.4,375.5 499.4,375.2 498.4,375.1 497.4,375 496.4,376 495.4,375.4 494.4,375.9 493.4,375.7 492.4,375.7 491.4,375.7 490.4,375.3 489.4,375.1 488.4,375.1 487.4,375.4 486.4,375.2 485.4,375.8 484.4,375.4 483.4,376 482.4,375.1 481.4,375.8 480.4,375.7 479.4,375.9 478.4,375.5 477.4,375.9 476.4,374.9 475.4,376.1 474.4,375.3 473.4,375.1 472.4,375.2 471.4,375.5 470.4,375 469.4,375 468.4,375.6 467.4,375.5 466.4,374.9 465.4,375.5 464.4,376.1 463.4,375.2 462.4,375.3 461.4,375 460.4,375.9 459.4,375.5 458.4,375 457.4,375 456.4,375.9 455.4,375.7 454.4,375.7 453.4,375.5 452.4,375.2 451.4,375.5 450.4,375.3 449.4,375.1 448.4,375.3 447.4,375.5 446.4,375 445.4,376.2 444.4,375 443.4,374.9 442.4,374.9 441.4,375.5 440.4,375.2 439.4,375.1 438.4,375.1 437.4,376.4 436.4,376 435.4,375.7 434.4,376.2 433.4,375.1 432.4,375.3 431.4,375.3 430.4,374.9 429.4,375.2 428.4,375.6 427.4,374.9 426.4,375.3 425.4,375.5 424.4,376 423.4,375.5 422.4,375.2 421.4,375.6 420.4,375.2 419.4,375 418.4,375 417.4,375.5 416.4,376.5 415.4,375 414.4,374.9 413.4,375.6 412.4,374.9 411.4,375.6 410.4,375.3 409.4,375.3 408.4,375.1 407.4,375 406.4,375.8 405.4,376.6 404.4,375.6 403.4,374.9 402.4,375.1 401.4,376.1 400.4,375.4 399.4,375.8 398.4,375.4 397.4,375.6 396.4,374.9 395.4,376.3 394.4,375.4 393.4,376.5 392.4,375.4 391.4,375.7 390.4,375.4 389.4,375 388.4,375.4 387.4,375.2 386.4,375.4 385.4,374.9 384.4,375.8 383.4,375.7 382.4,375.4 381.4,375.1 380.4,375 379.4,374.9 378.4,375.1 377.4,375.3 376.4,375.2 375.4,375.6 374.4,375 373.4,375.5 372.4,374.9 371.4,375.7 370.4,375.2 369.4,375.2 368.4,375.4 367.4,375.3 366.4,375 365.4,375.3 364.4,375 363.4,375.1 362.4,375.4 361.4,376.7 360.4,375.1 359.4,375.9 358.4,376.5 357.4,376.3 356.4,375.4 355.4,375.1 354.4,375.5 353.4,375.3 352.4,375.5 351.4,375.1 350.4,375 349.4,375.4 348.4,374.9 347.4,376.4 346.4,375.7 345.4,375 344.4,375.1 343.4,375 342.4,375.1 341.4,375.1 340.4,375.7 339.4,376.6 338.4,375.9 337.4,376 336.4,375 335.4,375.6 334.4,375.4 333.4,375.7 332.4,375.5 331.4,375.7 330.4,375.7 329.4,376.2 328.4,375.2 327.4,375.3 326.4,375.4 325.4,376.5 324.4,375.4 323.4,376 322.4,375.7 321.4,375.2 320.4,375.5 319.4,375.5 318.4,375.4 317.4,375.5 316.4,375.6 315.4,375.2 314.4,375.5 313.4,375.7 312.4,375.7 311.4,376.6 310.4,375 309.4,375.9 308.4,375.1 307.4,375.5 306.4,375.1 305.4,375.5 304.4,375.1 303.4,376.3 302.4,376.1 301.4,374.9 300.4,375.5 299.4,375.1 298.4,375.3 297.4,375.6 296.4,375 295.4,375 294.4,376.1 293.4,375.3 292.4,374.9 291.4,375.1 290.4,375.1 289.4,375.9 288.4,375.4 287.4,375.6 286.4,376 285.4,375.6 284.4,376.3 283.4,375.6 282.4,376.1 281.4,375.9 280.4,375.1 279.4,375.1 278.4,375.4 277.4,375.4 276.4,375.2 275.4,376.5 274.4,375.1 273.4,376.2 272.4,375.1 271.4,374.9 270.4,374.9 269.4,375.2 268.4,375.2 267.4,375.4 266.4,375.6 265.4,376.1 264.4,375.2 263.4,376.3 262.4,375.2 261.4,375.2 260.4,375.2 259.4,375.5 258.4,375.2 257.4,375.2 256.4,375.6 255.4,375.5 254.4,375 253.4,375 252.4,375.1 251.4,375.1 250.4,375.6 249.4,375.3 248.4,375 247.4,374.9 246.4,375.6 245.4,375 244.4,375.6 243.4,375.2 242.4,374.9 241.4,376 240.4,375.5 239.4,375.5 238.4,375.2 237.4,375.5 236.4,375.1 235.4,375.6 234.4,375.6 233.4,375.3 232.4,376.5 231.4,375.6 230.4,375 229.4,375.4 228.4,375.2 227.4,374.9 226.4,375.4 225.4,375.5 224.4,375.4 223.4,375.6 222.4,376.3 221.4,376.1 220.4,376.2 219.4,375.1 218.4,375.5 217.4,375.5 216.4,376.5 215.4,375.3 214.4,375.7 213.4,375.5 212.4,375 211.4,375.7 210.4,375.2 209.4,375.3 208.4,374.9 207.4,374.9 206.4,375.2 205.4,375.3 204.4,374.9 203.4,375.1 202.4,375.4 201.4,375.4 200.4,375.2 199.4,375.2 198.4,375.7 197.4,375.6 196.4,375.2 195.4,375.8 194.4,375 193.4,375.8 192.4,375.7 191.4,375.3 190.4,375.7 189.4,375.9 188.4,375.7 187.4,375 186.4,375.4 185.4,375.2 184.4,375.6 183.4,374.9 182.4,375 181.4,375.4 180.4,375.5 179.4,376.4 178.4,375.3 177.4,375.2 176.4,374.9 175.4,375.4 174.4,375.1 173.4,375.4 172.4,375 171.4,375.9 170.4,374.9 169.4,375.6 168.4,375.8 167.4,376 166.4,375 165.4,375" fill="#f5f01e"/>
<line x1="828" y1="373" x2="828" y2="470" stroke="#a88a10" stroke-width="1.3"/>
<path d="M828,462 L828.2,471 L828.5,477.7 L828.8,482.7 L829,486.5 L829.2,489.3 L829.5,491.4 L829.8,493 L830,494.2 L830.2,495.2 L830.5,495.9 L830.8,496.5 L831,496.9 L831.2,497.3 L831.5,497.6 L831.8,497.8 L832,498 L832.2,498.1 L832.5,498.3 L832.8,498.4 L833,498.4 L833.2,498.5 L833.5,498.6 L833.8,498.6 L834,498.7 L834.2,498.7 L834.5,498.8 L834.8,498.8 L835,498.8 L835.2,498.8 L835.5,498.9 L835.8,498.9 L836,498.9 L836.2,498.9 L836.5,498.9 L836.8,498.9 L837,498.9 L837.2,498.9 L837.5,498.9 L837.8,499" fill="none" stroke="#f5f01e" stroke-width="1.6" stroke-linejoin="round"/>
<line x1="852" y1="373" x2="852" y2="470" stroke="#a88a10" stroke-width="1.3"/>
<path d="M852,462 L852.2,471 L852.5,477.7 L852.8,482.7 L853,486.5 L853.2,489.3 L853.5,491.4 L853.8,493 L854,494.2 L854.2,495.2 L854.5,495.9 L854.8,496.5 L855,496.9 L855.2,497.3 L855.5,497.6 L855.8,497.8 L856,498 L856.2,498.1 L856.5,498.3 L856.8,498.4 L857,498.4 L857.2,498.5 L857.5,498.6 L857.8,498.6 L858,498.7 L858.2,498.7 L858.5,498.8 L858.8,498.8 L859,498.8 L859.2,498.8 L859.5,498.9 L859.8,498.9 L860,498.9 L860.2,498.9 L860.5,498.9 L860.8,498.9 L861,498.9 L861.2,498.9 L861.5,498.9 L861.8,499" fill="none" stroke="#f5f01e" stroke-width="1.6" stroke-linejoin="round"/>
<line x1="876" y1="373" x2="876" y2="470" stroke="#a88a10" stroke-width="1.3"/>
<path d="M876,462 L876.2,471 L876.5,477.7 L876.8,482.7 L877,486.5 L877.2,489.3 L877.5,491.4 L877.8,493 L878,494.2 L878.2,495.2 L878.5,495.9 L878.8,496.5 L879,496.9 L879.2,497.3 L879.5,497.6 L879.8,497.8 L880,498 L880.2,498.1 L880.5,498.3 L880.8,498.4 L881,498.4 L881.2,498.5 L881.5,498.6 L881.8,498.6 L882,498.7 L882.2,498.7 L882.5,498.8 L882.8,498.8 L883,498.8 L883.2,498.8 L883.5,498.9 L883.8,498.9 L884,498.9 L884.2,498.9 L884.5,498.9 L884.8,498.9 L885,498.9 L885.2,498.9 L885.5,498.9 L885.8,499" fill="none" stroke="#f5f01e" stroke-width="1.6" stroke-linejoin="round"/>
<polygon points="830.8,496.8 831.8,496.7 832.8,496.4 833.8,495.4 834.8,496.8 835.8,496 836.8,496.5 837.8,496.3 838.8,496.3 839.8,496.7 840.8,496.3 840.8,501.7 839.8,502.7 838.8,501.2 837.8,501.7 836.8,502.1 835.8,501.5 834.8,501.5 833.8,501.8 832.8,502.1 831.8,502.4 830.8,501.2" fill="#f5f01e"/>
<polygon points="854.8,496.5 855.8,496.3 856.8,496.5 857.8,496.2 858.8,496.7 859.8,496.7 860.8,495.4 861.8,496.7 862.8,496.6 863.8,496.5 864.8,495.6 865.8,496.5 865.8,501.4 864.8,501.5 863.8,502 862.8,501.6 861.8,501.7 860.8,502.1 859.8,501.4 858.8,502.1 857.8,501.7 856.8,502 855.8,501.3 854.8,501.2" fill="#f5f01e"/>
<line x1="841.3" y1="359" x2="841.3" y2="499" stroke="#d8c818" stroke-width="1.3"/>
<polygon points="841.3,357 841.8,364.4 842.3,367 842.8,369.5 843.3,370 843.8,370.2 844.3,370.5 844.8,370.6 845.3,371 845.8,370.6 846.3,371.1 846.8,370.9 847.3,370.7 847.8,371.1 848.3,370 848.8,371 849.3,370.7 849.8,371.2 850.3,370.5 850.8,371 851.3,370.6 851.8,370.6 852.3,371.1 852.3,376.3 851.8,375 851.3,374.8 850.8,374.9 850.3,375.8 849.8,375.2 849.3,375 848.8,375.8 848.3,374.9 847.8,376.2 847.3,374.9 846.8,375.3 846.3,374.9 845.8,375.2 845.3,375.2 844.8,375 844.3,376.2 843.8,374.9 843.3,374.9 842.8,374.4 842.3,372.3 841.8,369.1 841.3,361.6" fill="#f5f01e"/>
<line x1="865.9" y1="362" x2="865.9" y2="499" stroke="#d8c818" stroke-width="1.3"/>
<polygon points="865.9,359.6 866.4,366.1 866.9,368.8 867.4,370.1 867.9,370.6 868.4,370.7 868.9,370.2 869.4,370.5 869.9,371 870.4,371.1 870.9,370.9 871.4,370.8 871.9,370.6 872.4,371.2 872.9,370.4 873.4,370.5 873.9,370.1 874.4,370.6 874.9,370.9 875.4,370.7 875.9,370.2 876.4,370 876.4,375.7 875.9,376.2 875.4,375.1 874.9,375.4 874.4,375.4 873.9,375.5 873.4,375.2 872.9,375.2 872.4,374.8 871.9,375.5 871.4,375.8 870.9,375.6 870.4,375.1 869.9,375.2 869.4,375.8 868.9,375.1 868.4,376.1 867.9,374.5 867.4,374.3 866.9,373 866.4,370.3 865.9,364.7" fill="#f5f01e"/>
<polygon points="878.9,496.6 879.9,496.4 880.9,496.7 881.9,496.2 882.9,496.7 883.9,496.2 884.9,496.9 885.9,496 886.9,496 887.9,496.9 888.9,495.8 889.9,496.8 890.9,496.9 891.9,496.2 892.9,496.7 893.9,496.2 894.9,495.8 895.9,496.3 896.9,496.5 897.9,496.5 898.9,495 899.9,496.6 900.9,496.1 901.9,496 902.9,496.5 903.9,494.6 904.9,495.9 905.9,495.9 906.9,495.7 907.9,494.9 908.9,495.7 909.9,496.1 910.9,495.6 911.9,495.4 912.9,495.6 913.9,494.3 914.9,495.4 915.9,495.4 916.9,495.7 917.9,495.1 918.9,494.9 919.9,494.4 920.9,495.2 921.9,494.3 922.9,494.8 923.9,494.8 924.9,495 925.9,494.7 926.9,494.9 927.9,495.4 928.9,494.4 929.9,494.4 930.9,494.7 931.9,494.9 932.9,493.6 933.9,495.4 934.9,494.9 935.9,494.8 936.9,494 937.9,495 938.9,494.4 939.9,495.1 940.9,494.3 941.9,495 942.9,494.8 943.9,494.6 944.9,495.4 945.9,494.6 946.9,495.2 947.9,494.9 948.9,495.3 949.9,495.5 950.9,494.7 951.9,495.1 952.9,494.4 953.9,495.4 954.9,495 955.9,495.4 956.9,495 957.9,495.4 958.9,495.2 959.9,495.2 960.9,495.2 961.9,494.3 962.9,495.3 963.9,495.6 964.9,496 965.9,495.1 966.9,495.2 967.9,495.4 968.9,496.1 969.9,496.1 970.9,494.6 971.9,495.9 972.9,495.6 973.9,495.7 974.9,496.1 975.9,496.6 976.9,495.5 977.9,495.3 978.9,496.1 979.9,496.6 980.9,496.7 981.9,495.7 982.9,496.5 983.9,496.1 984.9,496.3 985.9,496.1 986.9,496.4 987.9,496.7 988.9,495.5 989.9,496.7 990.9,496.9 991.9,495.2 992.9,496.7 993.9,496.3 994.9,496.4 995.9,496 996.9,496.1 997.9,496 998.9,496.5 999.9,496.4 1000.9,496.8 1001.9,496.9 1002.9,496.1 1003.9,496.4 1004.9,495.2 1005.9,496.4 1006.9,496.4 1007.9,496.5 1008.9,496.4 1009.9,495.6 1010.9,496.1 1011.9,496.4 1012.9,496 1013.9,495.3 1014.9,495.4 1015.9,496.1 1016.9,495.5 1017.9,496.2 1018.9,495.4 1019.9,495.3 1020.9,494.9 1021.9,495.8 1022.9,495.2 1023.9,495.2 1024.9,495.7 1025.9,495 1026.9,495.8 1027.9,494.8 1028.9,495.1 1029.9,495.2 1030.9,495.3 1031.9,495.3 1032.9,495.4 1033.9,495.4 1034.9,494.8 1035.9,495.1 1036.9,494.1 1037.9,495.4 1038.9,494.7 1039.9,495.4 1040.9,495.2 1041.9,493.8 1042.9,495.2 1043.9,494.4 1044.9,494.8 1045.9,495.1 1046.9,493.7 1047.9,495.2 1048.9,494.7 1049.9,494.6 1050.9,495.2 1051.9,494.9 1052.9,494 1053.9,494.9 1054.9,495 1055.9,495.3 1056.9,494.7 1057.9,495.6 1058.9,495.4 1059.9,493.8 1060.9,495.2 1061.9,495.3 1062.9,495.4 1063.9,494.7 1064.9,494.7 1065.9,495.7 1066.9,495.1 1067.9,494.8 1068.9,495.6 1069.9,495.4 1070.9,495.9 1071.9,496.1 1072.9,496.1 1073.9,496.2 1074.9,495.4 1075.9,496.2 1076.9,496.3 1077.9,496.2 1078.9,496.2 1079.9,495.8 1080.9,496.2 1081.9,496.6 1082.9,496.2 1083.9,496.6 1084.9,496.2 1085.9,495.1 1086.9,495.7 1087.9,496.4 1088.9,496.8 1089.9,495.1 1090.9,496.6 1091.9,496.8 1092.9,496.7 1093.9,496.7 1094.9,495.8 1095.9,497 1096.9,495.3 1097.9,496.3 1098.9,496.4 1099.9,496.2 1100.9,495.5 1101.9,496.7 1102.9,496.9 1103.9,496.2 1104.9,496 1105.9,496.1 1106.9,496.7 1107.9,495.8 1108.9,496.8 1109.9,496.8 1110.9,496.6 1111.9,496.3 1112.9,496.5 1113.9,496.2 1114.9,496.3 1115.9,495.5 1116.9,495.1 1117.9,496.5 1118.9,496.2 1119.9,496.1 1120.9,495.7 1121.9,496.3 1122.9,495.6 1123.9,495.8 1124.9,496.2 1125.9,496.1 1126.9,495.9 1127.9,496 1128.9,494.9 1129.9,495.6 1130.9,495.8 1131.9,495.9 1132.9,495.1 1133.9,494.9 1134.9,495 1135.9,495.2 1136.9,494.5 1137.9,494.6 1138.9,495.1 1139.9,494.7 1140.9,495.1 1141.9,495.2 1142.9,494.3 1143.9,495.5 1144.9,494.5 1145.9,494.5 1146.9,494.7 1147.9,494.9 1148.9,495.4 1149.9,494.9 1150.9,494.8 1151.9,495.1 1152.9,495.4 1153.9,494.7 1154.9,494 1155.9,494.9 1156.9,494.5 1157.9,495.4 1158.9,494.9 1159.9,495.1 1160.9,494 1161.9,494.4 1162.9,495.1 1163.9,495.5 1164.9,494.5 1165.9,495.4 1166.9,495.5 1167.9,493.5 1168.9,495.6 1169.9,494 1170.9,495.2 1171.9,495.7 1172.9,494.8 1173.9,495.2 1174.9,495.6 1175.9,495.7 1176.9,495.9 1177.9,495.3 1178.9,495.5 1179.9,495.7 1180.9,495.8 1181.9,495.1 1182.9,495.7 1183.9,495.8 1184.9,495.1 1185.9,496.4 1186.9,495.9 1187.9,496.2 1188.9,496.4 1189.9,495.7 1190.9,495.6 1191.9,495.8 1192.9,496.5 1193.9,495.3 1194.9,495.9 1195.9,496 1196.9,495.5 1197.9,496.6 1198.9,495.9 1199.9,496.4 1200.9,496.8 1201.9,496.9 1202.9,496.6 1203.9,495.8 1204.9,496.2 1205.9,495.9 1206.9,496.1 1207.9,495.9 1208.9,496.7 1209.9,496.5 1210.9,495.1 1211.9,496.3 1212.9,496.8 1213.9,496.6 1214.9,495.2 1215.9,496.8 1216.9,496.3 1217.9,496.8 1218.9,496 1219.9,496.2 1220.9,496.5 1221.9,496.3 1222.9,496.4 1223.9,495.3 1224.9,496 1225.9,496 1226.9,496.1 1227.9,496.1 1228.9,495.3 1229.9,496.4 1230.9,494.9 1231.9,495.6 1232.9,496.1 1233.9,495.1 1234.9,495.9 1235.9,495.7 1236.9,495 1237.9,495.5 1238.9,496 1239.9,495.7 1240.9,495.3 1241.9,494.9 1242.9,495.8 1243.9,494.4 1244.9,495.7 1245.9,495.7 1246.9,495.2 1247.9,494.8 1248.9,494.5 1249.9,494.1 1249.9,502.3 1248.9,501.2 1247.9,500.8 1246.9,500.9 1245.9,500.9 1244.9,501 1243.9,500.9 1242.9,501.7 1241.9,502.2 1240.9,501.7 1239.9,501.9 1238.9,501.2 1237.9,501.6 1236.9,502.7 1235.9,501.8 1234.9,501.4 1233.9,502.3 1232.9,501.3 1231.9,501.8 1230.9,501.5 1229.9,501.6 1228.9,502.1 1227.9,501.7 1226.9,502.7 1225.9,502.2 1224.9,501.7 1223.9,503.7 1222.9,502 1221.9,502 1220.9,502 1219.9,503.8 1218.9,502.3 1217.9,502.5 1216.9,502.1 1215.9,502.2 1214.9,502.1 1213.9,502.8 1212.9,502.3 1211.9,502 1210.9,502.5 1209.9,502 1208.9,502.6 1207.9,502.2 1206.9,502.3 1205.9,502.3 1204.9,502.2 1203.9,502.6 1202.9,502.9 1201.9,502.6 1200.9,502.3 1199.9,502.7 1198.9,503.2 1197.9,502.2 1196.9,502.4 1195.9,502.7 1194.9,502.5 1193.9,502.9 1192.9,502 1191.9,501.9 1190.9,501.9 1189.9,502.2 1188.9,501.9 1187.9,501.6 1186.9,501.7 1185.9,501.6 1184.9,502.1 1183.9,501.7 1182.9,501.7 1181.9,501.4 1180.9,501.3 1179.9,501.3 1178.9,501.2 1177.9,502 1176.9,501.6 1175.9,502 1174.9,502.2 1173.9,502 1172.9,501.2 1171.9,501.6 1170.9,501.9 1169.9,501.2 1168.9,500.9 1167.9,501.1 1166.9,501.1 1165.9,501.4 1164.9,500.7 1163.9,501 1162.9,503.3 1161.9,501.2 1160.9,500.9 1159.9,501.1 1158.9,502.7 1157.9,501.3 1156.9,501.1 1155.9,501.6 1154.9,500.7 1153.9,501.6 1152.9,501.3 1151.9,500.6 1150.9,500.7 1149.9,500.7 1148.9,501.5 1147.9,501.6 1146.9,500.6 1145.9,500.9 1144.9,500.8 1143.9,502.4 1142.9,500.9 1141.9,501 1140.9,501.5 1139.9,501.8 1138.9,500.9 1137.9,501 1136.9,502.1 1135.9,501.4 1134.9,501.4 1133.9,501.1 1132.9,501.6 1131.9,501.3 1130.9,501.2 1129.9,501.1 1128.9,501.3 1127.9,501.9 1126.9,501.2 1125.9,502.2 1124.9,502 1123.9,501.8 1122.9,501.8 1121.9,501.5 1120.9,501.6 1119.9,501.8 1118.9,501.8 1117.9,502.5 1116.9,501.8 1115.9,503.2 1114.9,501.8 1113.9,504.7 1112.9,502.2 1111.9,501.8 1110.9,502 1109.9,502 1108.9,502.5 1107.9,502.2 1106.9,502.6 1105.9,502.1 1104.9,502.9 1103.9,502.6 1102.9,502.7 1101.9,502.5 1100.9,502.8 1099.9,503.1 1098.9,502.9 1097.9,502.1 1096.9,502.6 1095.9,502.4 1094.9,502.3 1093.9,502.1 1092.9,502.3 1091.9,502.2 1090.9,503.2 1089.9,502.9 1088.9,502.4 1087.9,502.4 1086.9,502.1 1085.9,502.3 1084.9,501.8 1083.9,501.8 1082.9,501.9 1081.9,501.6 1080.9,502.4 1079.9,501.7 1078.9,501.8 1077.9,502.3 1076.9,501.6 1075.9,501.4 1074.9,502.1 1073.9,502.1 1072.9,501.4 1071.9,501.2 1070.9,501.5 1069.9,502 1068.9,501.5 1067.9,502.5 1066.9,502.1 1065.9,501.6 1064.9,502.1 1063.9,501.6 1062.9,500.9 1061.9,500.8 1060.9,501.3 1059.9,500.9 1058.9,501.6 1057.9,501.4 1056.9,501.8 1055.9,501.1 1054.9,501 1053.9,500.5 1052.9,501.6 1051.9,501.6 1050.9,501.2 1049.9,501.3 1048.9,500.8 1047.9,501 1046.9,500.7 1045.9,502.1 1044.9,501.4 1043.9,501.1 1042.9,501.3 1041.9,501.4 1040.9,501.9 1039.9,501 1038.9,501 1037.9,500.6 1036.9,500.6 1035.9,502.1 1034.9,500.7 1033.9,501.2 1032.9,501.4 1031.9,501.1 1030.9,501.3 1029.9,500.8 1028.9,501.9 1027.9,501.6 1026.9,501.6 1025.9,502.7 1024.9,502.1 1023.9,502.6 1022.9,501.6 1021.9,501.4 1020.9,501.2 1019.9,501.9 1018.9,501.3 1017.9,501.7 1016.9,501.6 1015.9,501.6 1014.9,502.9 1013.9,503 1012.9,502 1011.9,501.7 1010.9,501.8 1009.9,502.5 1008.9,501.8 1007.9,502.4 1006.9,502.5 1005.9,503.8 1004.9,502.2 1003.9,502.9 1002.9,503 1001.9,502.8 1000.9,502.7 999.9,502.6 998.9,502.6 997.9,502.2 996.9,502.5 995.9,503.1 994.9,502.1 993.9,502.5 992.9,502 991.9,502.6 990.9,502.6 989.9,503.3 988.9,503.1 987.9,503.3 986.9,502.2 985.9,502.5 984.9,503.4 983.9,502 982.9,502.6 981.9,502.1 980.9,503 979.9,502 978.9,501.8 977.9,502.2 976.9,502.6 975.9,502.3 974.9,502.2 973.9,501.8 972.9,501.8 971.9,502.7 970.9,502.6 969.9,501.8 968.9,501.9 967.9,501.6 966.9,502.8 965.9,502 964.9,501.4 963.9,501.4 962.9,502.1 961.9,502.6 960.9,502.4 959.9,501.4 958.9,501.6 957.9,501.3 956.9,502.1 955.9,501.2 954.9,501.2 953.9,501.2 952.9,501.1 951.9,501.7 950.9,501.5 949.9,500.6 948.9,500.9 947.9,501.1 946.9,501.3 945.9,501.1 944.9,501.4 943.9,500.7 942.9,501.2 941.9,501.7 940.9,501.2 939.9,501.4 938.9,500.9 937.9,500.7 936.9,500.6 935.9,500.5 934.9,500.8 933.9,502.4 932.9,501.3 931.9,501.6 930.9,500.5 929.9,502.7 928.9,501.1 927.9,501.5 926.9,500.9 925.9,500.7 924.9,501.2 923.9,501.9 922.9,500.9 921.9,501.2 920.9,501.6 919.9,501 918.9,501.4 917.9,501.3 916.9,501.1 915.9,501.6 914.9,501.1 913.9,501.8 912.9,502 911.9,502.3 910.9,502.2 909.9,502 908.9,501.3 907.9,501.4 906.9,501.6 905.9,501.8 904.9,502.3 903.9,501.6 902.9,502.8 901.9,502.1 900.9,501.7 899.9,502 898.9,503.3 897.9,501.9 896.9,501.9 895.9,503.6 894.9,502.4 893.9,503.5 892.9,502.9 891.9,502.4 890.9,502.4 889.9,503.6 888.9,502.2 887.9,502.8 886.9,502.2 885.9,502.7 884.9,503.4 883.9,502.8 882.9,502.9 881.9,502.3 880.9,502.5 879.9,503.2 878.9,503" fill="#f5f01e"/>
<polygon points="45,340 46,339.1 47,340.5 48,340.5 49,339.3 50,340 51,339.9 52,340.4 53,339.3 54,339.2 55,339.7 56,339.8 57,340.2 58,340.2 59,339.8 60,340 61,340.1 62,339.9 63,340 64,340.4 65,339.5 66,339.8 67,340.1 68,340.5 69,340.2 70,339.2 71,340 72,340.1 73,340.5 74,340.1 75,339.8 76,340.5 77,340.5 78,340.5 79,340 80,340.2 81,339.7 82,340.2 83,340.4 84,340.5 85,340.1 86,339.8 87,339.8 88,340.2 89,339.9 90,340.4 91,339.6 92,340.5 93,339 94,339.6 95,340.4 96,339.7 97,340.4 98,339.9 99,339 100,340.2 101,339.4 102,340.1 103,340.2 104,339.2 105,339.8 106,338.9 107,340.5 108,340.3 109,340.2 110,339 111,340.2 112,339.3 113,339.2 114,339.7 115,340.1 116,338.9 117,340.2 118,340.4 119,339.7 120,340.1 121,340.1 122,340 123,340.1 124,339.2 125,339.1 126,340.3 127,340.1 128,340.3 129,339.4 130,339.6 131,340.2 132,340.1 133,340.4 134,339.7 135,340.2 136,340.2 137,340.1 138,339.7 139,340.3 140,339.8 141,339.8 142,340.2 143,340.5 144,339.6 145,340.4 146,340 147,340 148,340.4 149,339.9 150,339.9 151,340 152,340.1 153,339.7 154,340.3 155,340.3 156,340.4 157,340 158,340.2 159,340.4 160,339.4 161,339.5 162,340.3 163,339.4 164,340.5 165,340.2 165,343.5 164,343.8 163,344.5 162,344.5 161,344.2 160,343.6 159,344 158,344.3 157,343.9 156,344.2 155,344 154,344.1 153,344 152,344 151,345.7 150,344.1 149,343.7 148,343.9 147,344.1 146,344.3 145,343.9 144,344.6 143,343.9 142,344.2 141,344.1 140,343.6 139,343.9 138,345 137,343.9 136,344.3 135,344 134,343.9 133,344.2 132,343.8 131,343.9 130,344 129,344.6 128,344 127,343.6 126,343.7 125,343.9 124,344.5 123,344.5 122,344.5 121,344.2 120,344.4 119,343.7 118,344.8 117,343.9 116,344 115,343.7 114,345.3 113,344.5 112,344.1 111,344.1 110,344.1 109,343.9 108,345 107,343.8 106,343.7 105,344.6 104,344.3 103,344.3 102,343.7 101,343.8 100,343.5 99,344.5 98,343.8 97,343.8 96,343.5 95,343.7 94,344.3 93,343.6 92,343.6 91,344.4 90,344.1 89,343.6 88,343.8 87,343.9 86,343.8 85,344.3 84,344.2 83,344.3 82,344 81,344.1 80,343.6 79,343.7 78,344.4 77,343.9 76,343.9 75,343.7 74,344.6 73,344.7 72,344.3 71,344.6 70,343.8 69,343.8 68,344.1 67,343.6 66,343.8 65,344.4 64,343.8 63,344.2 62,343.7 61,344 60,344.2 59,343.5 58,344.7 57,344.2 56,344.1 55,344.1 54,344.2 53,345.6 52,343.7 51,343.8 50,344.4 49,344.3 48,343.7 47,345.2 46,343.7 45,344.1" fill="#e8234f"/>
<line x1="165.4" y1="342" x2="165.4" y2="690" stroke="#8a1230" stroke-width="1" opacity="0.9"/>
<polygon points="165.4,669.1 166.4,669.1 167.4,669.7 168.4,669.4 169.4,668.7 170.4,667.9 171.4,668.9 172.4,669.8 173.4,668.9 174.4,669.6 175.4,668.2 176.4,669.2 177.4,669.2 178.4,669.8 179.4,669.5 180.4,669 181.4,668.9 182.4,669.6 183.4,669.4 184.4,669.1 185.4,669.4 186.4,669 187.4,668.1 188.4,669.3 189.4,668 190.4,668.8 191.4,669.3 192.4,668.7 193.4,668.6 194.4,669.6 195.4,669.2 196.4,668.6 197.4,668.7 198.4,669 199.4,669.6 200.4,669.4 201.4,669.2 202.4,668.1 203.4,668.3 204.4,669.2 205.4,669.3 206.4,668.8 207.4,668.2 208.4,668.5 209.4,669.2 210.4,669.4 211.4,668.6 212.4,669.2 213.4,668.2 214.4,669.3 215.4,669.1 216.4,668.4 217.4,669.2 218.4,669.6 219.4,669.1 220.4,668.2 221.4,668.5 222.4,669.2 223.4,669.4 224.4,669.3 225.4,669.1 226.4,669.4 227.4,669.4 228.4,668.6 229.4,667.6 230.4,669.1 231.4,668.7 232.4,668.9 233.4,669.3 234.4,668.4 235.4,668.5 236.4,669.4 237.4,669.4 238.4,668.9 239.4,669 240.4,669.3 241.4,668.5 242.4,669.4 243.4,667.7 244.4,668.8 245.4,668.4 246.4,668.2 247.4,668.1 248.4,668.7 249.4,667.6 250.4,669.3 251.4,669.1 252.4,669.2 253.4,668.8 254.4,669.3 255.4,669.2 256.4,668.2 257.4,668.7 258.4,668.4 259.4,668.6 260.4,668.7 261.4,668.3 262.4,668.3 263.4,668.3 264.4,668.8 265.4,667.7 266.4,668.1 267.4,669.1 268.4,669 269.4,667.8 270.4,668.6 271.4,668.2 272.4,668.8 273.4,668.6 274.4,668.4 275.4,668.3 276.4,668.3 277.4,668.5 278.4,669.1 279.4,668.2 280.4,668.6 281.4,668.5 282.4,668.4 283.4,667.7 284.4,668.1 285.4,666.8 286.4,667.8 287.4,668.2 288.4,669 289.4,668.5 290.4,669 291.4,668.5 292.4,668.9 293.4,668.2 294.4,669 295.4,668.5 296.4,666.6 297.4,668.3 298.4,668.3 299.4,668.1 300.4,668.6 301.4,667.5 302.4,668.4 303.4,668.3 304.4,668.2 305.4,668.6 306.4,668.3 307.4,667.8 308.4,667.9 309.4,668.9 310.4,668.8 311.4,667.9 312.4,668.4 313.4,668 314.4,668.7 315.4,668.9 316.4,667.1 317.4,667.7 318.4,668.2 319.4,667.6 320.4,668.7 321.4,668.2 322.4,668.5 323.4,668.5 324.4,668.3 325.4,668 326.4,668.5 327.4,668.6 328.4,668.5 329.4,668.3 330.4,668.5 331.4,668.1 332.4,667.2 333.4,668.6 334.4,668.8 335.4,667.4 336.4,667.8 337.4,668.7 338.4,668.3 339.4,667.8 340.4,668.2 341.4,666.7 342.4,667.6 343.4,667 344.4,668.1 345.4,668 346.4,667.8 347.4,668.5 348.4,668.4 349.4,668.1 350.4,667.1 351.4,668.3 352.4,667.9 353.4,668.1 354.4,668 355.4,668.5 356.4,668.2 357.4,668.5 358.4,668.5 359.4,668.4 360.4,668.2 361.4,668.1 362.4,667.9 363.4,667.9 364.4,667 365.4,668 366.4,667.1 367.4,666.1 368.4,667.9 369.4,667.9 370.4,667 371.4,666.2 372.4,666.2 373.4,667.2 374.4,667.1 375.4,667.7 376.4,668.3 377.4,668.1 378.4,667.7 379.4,667.7 380.4,667.4 381.4,668.2 382.4,667.5 383.4,667.4 384.4,668.1 385.4,668.3 386.4,667.2 387.4,667.3 388.4,668.1 389.4,667 390.4,668.3 391.4,667.7 392.4,667.8 393.4,668.3 394.4,667.7 395.4,667.5 396.4,667.7 397.4,667.4 398.4,668.3 399.4,667.5 400.4,667.8 401.4,667.8 402.4,667.2 403.4,667.8 404.4,667.4 405.4,666.4 406.4,667.1 407.4,668 408.4,668.1 409.4,667.9 410.4,668.2 411.4,666.9 412.4,667.4 413.4,667.5 414.4,667.6 415.4,667 416.4,667.9 417.4,668 418.4,667.1 419.4,667.8 420.4,667.9 421.4,667.7 422.4,666.4 423.4,667.4 424.4,667 425.4,667.6 426.4,667.4 427.4,667.5 428.4,668 429.4,668.1 430.4,666.6 431.4,668 432.4,666.7 433.4,667.8 434.4,667.7 435.4,668 436.4,666.2 437.4,667.6 438.4,667.5 439.4,667.9 440.4,667.8 441.4,667.1 442.4,667 443.4,666.8 444.4,667 445.4,667.5 446.4,667.1 447.4,667.5 448.4,666.8 449.4,666.9 450.4,666.3 451.4,667.7 452.4,666.6 453.4,667.6 454.4,667.6 455.4,666.2 456.4,665.8 457.4,666.4 458.4,667.6 459.4,667.8 460.4,667.6 461.4,667.6 462.4,667.3 463.4,666 464.4,667.6 465.4,667.1 466.4,666.7 467.4,667.3 468.4,667.7 469.4,667.6 470.4,666.5 471.4,667.4 472.4,666 473.4,666.8 474.4,666.2 475.4,667.5 476.4,667.2 477.4,667.3 478.4,666.7 479.4,666.8 480.4,667 481.4,666.7 482.4,667.2 483.4,667.6 484.4,667 485.4,667.1 486.4,667.7 487.4,666.8 488.4,667.6 489.4,666.8 490.4,666.4 491.4,666.2 492.4,666.9 493.4,666.4 494.4,667.3 495.4,667.5 496.4,667.2 497.4,667.2 498.4,666.3 499.4,665.3 500.4,666.8 501.4,665.5 502.4,667.5 503.4,667.5 504.4,666.9 505.4,665.9 506.4,666.5 507.4,667.4 508.4,667.4 509.4,667 510.4,667.4 511.4,666.9 512.4,667.1 513.4,667.4 514.4,666.9 515.4,666.9 516.4,667.3 517.4,667.3 518.4,666.4 519.4,666 520.4,667.3 521.4,666.2 522.4,666.4 523.4,666.7 524.4,666.9 525.4,667.4 526.4,667.2 527.4,667.2 528.4,666.9 529.4,667.3 530.4,665.5 531.4,665.3 532.4,667.3 533.4,666.9 534.4,666.4 535.4,666.1 536.4,665.4 537.4,667 538.4,665.4 539.4,666.8 540.4,667.2 541.4,666.9 542.4,666.7 543.4,666.2 544.4,666.9 545.4,667.1 546.4,667.1 547.4,666 548.4,666.5 549.4,666.3 550.4,666.6 551.4,666.9 552.4,666.6 553.4,666.9 554.4,666.3 555.4,666.9 556.4,666.8 557.4,666.3 558.4,667.1 559.4,665.3 560.4,667.1 561.4,664.3 562.4,666.2 563.4,666.7 564.4,666.7 565.4,664.6 566.4,667 567.4,666.9 568.4,665.4 569.4,665.8 570.4,665.4 571.4,666.8 572.4,666.4 573.4,664.8 574.4,666.9 575.4,666.7 576.4,666.4 577.4,666.9 578.4,666 579.4,666.2 580.4,666.4 581.4,666.5 582.4,666.1 583.4,666 584.4,666.9 585.4,665.7 586.4,665.7 587.4,665.7 588.4,666.3 589.4,666.8 590.4,666.5 591.4,666.9 592.4,666.9 593.4,666.6 594.4,666.3 595.4,664.9 596.4,666.7 597.4,666.3 598.4,665.7 599.4,666.2 600.4,666.2 601.4,666.2 602.4,666.6 603.4,666.8 604.4,666.5 605.4,665.8 606.4,665.6 607.4,666.5 608.4,664.6 609.4,666.1 610.4,666.7 611.4,666 612.4,666.5 613.4,665.5 614.4,665.9 615.4,666.7 616.4,666.4 617.4,666.6 618.4,665.8 619.4,665.8 620.4,666.4 621.4,666.7 622.4,666.5 623.4,666.2 624.4,665.9 625.4,666.6 626.4,666.3 627.4,666.4 628.4,665.4 629.4,665.7 630.4,665.9 631.4,666.2 632.4,665.2 633.4,666.6 634.4,665.8 635.4,665.4 636.4,665.7 637.4,666 638.4,666.4 639.4,666.5 640.4,665.7 641.4,666.1 642.4,665.6 643.4,666.1 644.4,664.8 645.4,666.3 646.4,666.3 647.4,666.3 648.4,665.9 649.4,666.1 650.4,666.5 651.4,665 652.4,665.9 653.4,666 654.4,666.3 655.4,665.2 656.4,666.4 657.4,665.7 658.4,665.6 659.4,666.4 660.4,664.9 661.4,665.7 662.4,665.7 663.4,666.2 664.4,666.2 665.4,665.8 666.4,665.5 667.4,665.7 668.4,665.9 669.4,664 670.4,666.3 671.4,666.1 672.4,665.7 673.4,665 674.4,665.2 675.4,666.3 676.4,666 677.4,664.6 678.4,664 679.4,665.5 680.4,665.3 681.4,665.7 682.4,665.9 683.4,665.8 684.4,666.2 685.4,664.8 686.4,665.7 687.4,665.9 688.4,665.1 689.4,665.4 690.4,665.8 691.4,665.9 692.4,664.6 693.4,665.7 694.4,666.1 695.4,665.4 696.4,665.9 697.4,665.2 698.4,666 699.4,665.9 700.4,664.3 701.4,666.1 702.4,665.5 703.4,666 704.4,665.2 705.4,664.9 706.4,665.5 707.4,665 708.4,665.1 709.4,666.1 710.4,665.2 711.4,665 712.4,665.9 713.4,665 714.4,665.4 715.4,665.2 716.4,665.9 717.4,664.4 718.4,665.9 719.4,665.4 720.4,665.9 721.4,665.6 722.4,665.1 723.4,664.7 724.4,665.4 725.4,664.9 726.4,665 727.4,665.5 728.4,664.8 729.4,665.6 730.4,664.6 731.4,665.5 732.4,665.5 733.4,665.2 734.4,665.2 735.4,665 736.4,664.6 737.4,665.6 738.4,665.8 739.4,665.8 740.4,665.5 741.4,664.5 742.4,665.4 743.4,665.2 744.4,664.7 745.4,664.5 746.4,665.5 747.4,664.2 748.4,665.2 749.4,665.2 750.4,665.8 751.4,664.4 752.4,664.5 753.4,665.1 754.4,665.2 755.4,664.5 756.4,665.7 757.4,664.8 758.4,665.1 759.4,664.4 760.4,664.7 761.4,665.1 762.4,664.8 763.4,664.6 764.4,664.5 765.4,665.4 766.4,664.7 767.4,665.5 768.4,665 769.4,664.3 770.4,665.3 771.4,665.2 772.4,665.2 773.4,663.8 774.4,664.9 775.4,664.6 776.4,665.2 777.4,665.5 778.4,664.8 779.4,665.2 780.4,664.1 781.4,664.7 782.4,664.7 783.4,665.3 784.4,664.9 785.4,665.1 786.4,665 787.4,663.9 788.4,663.9 789.4,665.5 790.4,665.4 791.4,665.4 792.4,665.3 793.4,665.1 794.4,664.5 795.4,665 796.4,665.3 797.4,665.4 798.4,665.3 799.4,665.3 800.4,664.5 801.4,665.4 802.4,665.2 803.4,665.3 804.4,664.5 805.4,664.6 806.4,664.4 807.4,665.2 808.4,664.7 809.4,664.4 810.4,665.1 811.4,664.9 812.4,663.7 813.4,663.8 814.4,665.3 815.4,665.2 816.4,664.3 817.4,665.2 818.4,664.7 819.4,663.3 820.4,664.3 821.4,665.2 822.4,664.5 823.4,664.3 824.4,665.1 825.4,664.9 826.4,663.1 827.4,664.4 828.4,665.2 828.4,668.2 827.4,668.6 826.4,667.9 825.4,669.1 824.4,667.8 823.4,668.1 822.4,668.3 821.4,668 820.4,668.1 819.4,667.9 818.4,669.2 817.4,668 816.4,668.8 815.4,668.3 814.4,669 813.4,668.8 812.4,668.9 811.4,668.6 810.4,668.1 809.4,668.6 808.4,668.1 807.4,668.9 806.4,668.9 805.4,668 804.4,669.2 803.4,668.9 802.4,668.5 801.4,669.2 800.4,668.7 799.4,668.2 798.4,669 797.4,668.5 796.4,669.1 795.4,670.1 794.4,668.3 793.4,668.8 792.4,668.5 791.4,668.7 790.4,668.3 789.4,668.4 788.4,668.9 787.4,668.7 786.4,668.6 785.4,668.8 784.4,669.4 783.4,668.2 782.4,669.1 781.4,669.6 780.4,668.6 779.4,668.2 778.4,668.2 777.4,669.3 776.4,668.4 775.4,668.6 774.4,669.2 773.4,669 772.4,669.2 771.4,670 770.4,669 769.4,668.9 768.4,668.9 767.4,670.4 766.4,668.5 765.4,668.9 764.4,669.6 763.4,668.3 762.4,668.6 761.4,668.6 760.4,668.6 759.4,668.5 758.4,669.2 757.4,668.3 756.4,669.1 755.4,668.9 754.4,668.4 753.4,668.7 752.4,670.3 751.4,668.4 750.4,670.3 749.4,669.3 748.4,669 747.4,668.6 746.4,668.4 745.4,670.3 744.4,670 743.4,669.2 742.4,669.6 741.4,669.3 740.4,669.7 739.4,669.5 738.4,668.6 737.4,669.2 736.4,668.7 735.4,668.9 734.4,669.7 733.4,669.8 732.4,669.1 731.4,669.3 730.4,669.2 729.4,669.3 728.4,668.9 727.4,669.6 726.4,668.9 725.4,670.2 724.4,669.4 723.4,669.7 722.4,669 721.4,669.2 720.4,669.1 719.4,668.8 718.4,669.5 717.4,669.8 716.4,669 715.4,669.7 714.4,668.8 713.4,668.8 712.4,671 711.4,669.6 710.4,669 709.4,670.1 708.4,668.9 707.4,669.2 706.4,669.4 705.4,668.9 704.4,669.6 703.4,670.2 702.4,669.8 701.4,670.4 700.4,668.9 699.4,669.4 698.4,669.2 697.4,669.1 696.4,669.9 695.4,668.8 694.4,670.4 693.4,669.2 692.4,669.7 691.4,669 690.4,670.3 689.4,669.3 688.4,669.1 687.4,669.1 686.4,669.1 685.4,669.2 684.4,670 683.4,669.5 682.4,670.1 681.4,669.7 680.4,669 679.4,669.2 678.4,669.4 677.4,669 676.4,669.6 675.4,670.2 674.4,669.3 673.4,668.9 672.4,669.3 671.4,670.1 670.4,669.4 669.4,670.1 668.4,670 667.4,669.2 666.4,669.2 665.4,670 664.4,670.2 663.4,670.5 662.4,669.9 661.4,670.6 660.4,669.9 659.4,669.9 658.4,669.7 657.4,669.6 656.4,669.2 655.4,669.6 654.4,669.1 653.4,669.7 652.4,670.2 651.4,671 650.4,670.2 649.4,669.1 648.4,670.6 647.4,669.2 646.4,669.5 645.4,669.9 644.4,669.3 643.4,671.1 642.4,669.3 641.4,669.6 640.4,669.7 639.4,669.4 638.4,669.8 637.4,670.1 636.4,669.9 635.4,669.4 634.4,670.3 633.4,669.9 632.4,670.3 631.4,669.3 630.4,669.7 629.4,669.4 628.4,670.9 627.4,669.6 626.4,670.1 625.4,670.8 624.4,669.7 623.4,669.8 622.4,670.3 621.4,670.7 620.4,669.8 619.4,669.9 618.4,669.4 617.4,669.4 616.4,669.4 615.4,670.7 614.4,671.2 613.4,669.6 612.4,670.6 611.4,669.8 610.4,670.9 609.4,670.5 608.4,669.5 607.4,669.9 606.4,670.3 605.4,670.5 604.4,669.8 603.4,669.8 602.4,670.1 601.4,670 600.4,671 599.4,669.9 598.4,670 597.4,670.1 596.4,670 595.4,669.9 594.4,670.1 593.4,670.1 592.4,669.7 591.4,669.8 590.4,670.4 589.4,669.6 588.4,670.1 587.4,672 586.4,669.7 585.4,670.7 584.4,670 583.4,669.9 582.4,669.8 581.4,670 580.4,670.6 579.4,670 578.4,670.1 577.4,670 576.4,670.7 575.4,670.4 574.4,670.6 573.4,671.2 572.4,670.9 571.4,669.9 570.4,670 569.4,670.5 568.4,669.9 567.4,672.1 566.4,670.7 565.4,670 564.4,670.7 563.4,670.1 562.4,670.2 561.4,670.2 560.4,671.3 559.4,671.5 558.4,670.6 557.4,670.4 556.4,671.2 555.4,671.8 554.4,670.4 553.4,669.8 552.4,670.7 551.4,670.5 550.4,670.3 549.4,670.8 548.4,670.2 547.4,670.1 546.4,671.9 545.4,670.3 544.4,669.9 543.4,670.6 542.4,670.9 541.4,670.3 540.4,671.3 539.4,670.7 538.4,670.8 537.4,670.9 536.4,671.2 535.4,670.4 534.4,670.9 533.4,670.8 532.4,670.9 531.4,670 530.4,670 529.4,670.9 528.4,670.2 527.4,670.3 526.4,672.1 525.4,671.2 524.4,671.4 523.4,670.6 522.4,670.6 521.4,670.9 520.4,670.7 519.4,670.7 518.4,671.6 517.4,670.8 516.4,670.3 515.4,671 514.4,670.9 513.4,671.1 512.4,671.1 511.4,670.8 510.4,670.9 509.4,670.2 508.4,670.7 507.4,670.9 506.4,670.5 505.4,670.6 504.4,671 503.4,670.2 502.4,671.2 501.4,670.7 500.4,671.5 499.4,671.9 498.4,670.7 497.4,671.3 496.4,670.7 495.4,670.6 494.4,670.9 493.4,672.5 492.4,670.3 491.4,670.4 490.4,672.5 489.4,670.5 488.4,671 487.4,670.5 486.4,670.7 485.4,670.5 484.4,670.9 483.4,671.9 482.4,672.2 481.4,671.1 480.4,670.8 479.4,671.7 478.4,670.7 477.4,671.7 476.4,670.6 475.4,671.8 474.4,671.7 473.4,671.9 472.4,671.3 471.4,671.2 470.4,670.4 469.4,672.3 468.4,671.2 467.4,671.7 466.4,671.2 465.4,671 464.4,671.7 463.4,671 462.4,670.9 461.4,671.7 460.4,670.7 459.4,670.6 458.4,670.7 457.4,671.2 456.4,672.9 455.4,671.1 454.4,671 453.4,671.3 452.4,671.5 451.4,671.4 450.4,671.2 449.4,671 448.4,671.2 447.4,671 446.4,670.6 445.4,671.3 444.4,671.7 443.4,670.9 442.4,670.8 441.4,670.8 440.4,671.6 439.4,671.6 438.4,671.8 437.4,671.6 436.4,671.5 435.4,672.4 434.4,671.4 433.4,670.8 432.4,671.2 431.4,671.4 430.4,671.1 429.4,672.2 428.4,671 427.4,673 426.4,671.5 425.4,671.5 424.4,671.3 423.4,671.7 422.4,670.9 421.4,670.8 420.4,672.1 419.4,670.8 418.4,671.4 417.4,671.3 416.4,672.1 415.4,671 414.4,671.1 413.4,671.3 412.4,672.1 411.4,670.9 410.4,671.5 409.4,671.2 408.4,671.2 407.4,671.3 406.4,671.3 405.4,670.9 404.4,673.7 403.4,671.2 402.4,671 401.4,671.4 400.4,671 399.4,672.1 398.4,670.9 397.4,671.9 396.4,671.2 395.4,673.1 394.4,671.1 393.4,672.8 392.4,671.9 391.4,671.8 390.4,671.2 389.4,671.7 388.4,671.1 387.4,671.4 386.4,671.4 385.4,671.6 384.4,671.1 383.4,671.2 382.4,671 381.4,671.7 380.4,671.7 379.4,671.3 378.4,672.4 377.4,671.6 376.4,672.3 375.4,671.4 374.4,671.2 373.4,672.4 372.4,671.3 371.4,672.2 370.4,671.4 369.4,672.3 368.4,672 367.4,671.3 366.4,671.7 365.4,672 364.4,671.3 363.4,671.2 362.4,671.8 361.4,671.8 360.4,671.6 359.4,671.4 358.4,671.4 357.4,671.4 356.4,673.1 355.4,672.2 354.4,671.4 353.4,671.8 352.4,671.4 351.4,672 350.4,671.4 349.4,671.3 348.4,672.3 347.4,672.1 346.4,671.9 345.4,671.8 344.4,672.3 343.4,672.8 342.4,672.2 341.4,672.8 340.4,672.3 339.4,672.5 338.4,671.7 337.4,672.3 336.4,671.7 335.4,671.4 334.4,672.4 333.4,671.5 332.4,671.8 331.4,671.4 330.4,673.2 329.4,671.7 328.4,672.8 327.4,672.1 326.4,672.3 325.4,671.8 324.4,672.1 323.4,672 322.4,671.7 321.4,673.4 320.4,671.9 319.4,671.6 318.4,673.5 317.4,671.8 316.4,671.8 315.4,673.1 314.4,672.3 313.4,671.8 312.4,671.6 311.4,671.5 310.4,672.4 309.4,671.8 308.4,672.1 307.4,671.9 306.4,671.9 305.4,672.2 304.4,671.9 303.4,672.4 302.4,671.7 301.4,672 300.4,673.2 299.4,672.5 298.4,673.5 297.4,672.2 296.4,672.4 295.4,672 294.4,672 293.4,672.2 292.4,672.6 291.4,672.8 290.4,672.4 289.4,672.4 288.4,672 287.4,673.4 286.4,673.1 285.4,671.8 284.4,672.2 283.4,672.5 282.4,672.1 281.4,671.8 280.4,673 279.4,673.4 278.4,672.2 277.4,672.8 276.4,672.2 275.4,672.3 274.4,671.9 273.4,672.2 272.4,673 271.4,672 270.4,672.1 269.4,672.6 268.4,672.2 267.4,672.3 266.4,672.1 265.4,672.3 264.4,672 263.4,672 262.4,671.9 261.4,673.1 260.4,672.2 259.4,673.5 258.4,672.8 257.4,673.9 256.4,673.2 255.4,673.3 254.4,672.4 253.4,672.3 252.4,672 251.4,673 250.4,672.2 249.4,673.3 248.4,674 247.4,672.3 246.4,673.4 245.4,672.9 244.4,673.4 243.4,672.9 242.4,673.5 241.4,672.4 240.4,672.6 239.4,673.1 238.4,672.7 237.4,672.4 236.4,674.2 235.4,673.9 234.4,672.5 233.4,672.2 232.4,672.9 231.4,673.1 230.4,673.4 229.4,672.8 228.4,672.7 227.4,672.3 226.4,672.5 225.4,673.9 224.4,672.5 223.4,672.5 222.4,672.2 221.4,672.5 220.4,673 219.4,672.4 218.4,672.8 217.4,672.5 216.4,673.9 215.4,672.7 214.4,672.3 213.4,673.4 212.4,673.7 211.4,673.8 210.4,673.2 209.4,674.1 208.4,673.4 207.4,673.6 206.4,672.6 205.4,674.1 204.4,673.2 203.4,672.4 202.4,672.5 201.4,672.5 200.4,672.9 199.4,673.2 198.4,673.3 197.4,672.4 196.4,673.4 195.4,672.5 194.4,672.9 193.4,673 192.4,673 191.4,673.3 190.4,672.5 189.4,672.6 188.4,672.5 187.4,672.8 186.4,673.6 185.4,672.7 184.4,672.8 183.4,672.8 182.4,674.4 181.4,673.9 180.4,673.2 179.4,672.6 178.4,672.9 177.4,672.7 176.4,672.6 175.4,673.5 174.4,672.8 173.4,672.9 172.4,673.5 171.4,673.6 170.4,673 169.4,672.7 168.4,672.9 167.4,673.7 166.4,672.7 165.4,673.2" fill="#e8234f"/>
<line x1="829" y1="174.5" x2="829" y2="690" stroke="#8c0f2a" stroke-width="1.1"/>
<line x1="829" y1="290" x2="829" y2="352" stroke="#e8234f" stroke-width="1.3"/>
<line x1="853.4" y1="161" x2="853.4" y2="690" stroke="#8c0f2a" stroke-width="1.1"/>
<line x1="853.4" y1="290" x2="853.4" y2="352" stroke="#e8234f" stroke-width="1.3"/>
<line x1="877.6" y1="176.5" x2="877.6" y2="690" stroke="#8c0f2a" stroke-width="1.1"/>
<line x1="877.6" y1="290" x2="877.6" y2="352" stroke="#e8234f" stroke-width="1.3"/>
<path d="M829.3,347 L829.8,345.5 L830.3,343.3 L830.8,340.1 L831.3,337.5 L831.8,336.6 L832.3,336.6 L832.8,336 L833.3,334.4 L833.8,332.2 L834.3,330.7 L834.8,330.2 L835.3,329.8 L835.8,329 L836.3,327.6 L836.8,326.1 L837.3,325.1 L837.8,324.5 L838.3,324 L838.8,323.1 L839.3,321.9 L839.8,320.8 L840.3,319.9" fill="none" stroke="#e8234f" stroke-width="2.2" stroke-linejoin="round"/>
<line x1="840.7" y1="320" x2="840.7" y2="688" stroke="#7a0c24" stroke-width="1.2"/>
<path d="M853.7,336 L854.2,336.1 L854.7,334.7 L855.2,332 L855.7,330 L856.2,329.7 L856.7,330.3 L857.2,330.4 L857.7,329.2 L858.2,327.5 L858.7,326.4 L859.2,326.3 L859.7,326.6 L860.2,326.2 L860.7,325.2 L861.2,324.1 L861.7,323.4 L862.2,323.3 L862.7,323.2 L863.2,322.7 L863.7,321.9 L864.2,321.1" fill="none" stroke="#e8234f" stroke-width="2.2" stroke-linejoin="round"/>
<line x1="865" y1="321" x2="865" y2="688" stroke="#7a0c24" stroke-width="1.2"/>
<path d="M877.9,351.1 L878.9,350.1 L879.9,347.4 L880.9,349 L881.9,349.5 L882.9,347.2 L883.9,347.5 L884.9,348.5 L885.9,346.4 L886.9,345.3 L887.9,346.3 L888.9,344.5 L889.9,342.8 L890.9,343.7 L891.9,343.3 L892.9,341.2 L893.9,341.2 L894.9,341.2 L895.9,339.5 L896.9,338.7 L897.9,339.1 L898.9,337.7 L899.9,336.1 L900.9,336.3 L901.9,336 L902.9,334.4 L903.9,334.2 L904.9,334 L905.9,333.4 L906.9,332 L907.9,332.4 L908.9,331.5 L909.9,330.3 L910.9,330.9 L911.9,330.9 L912.9,329.7 L913.9,329.8 L914.9,329.7 L915.9,328.7 L916.9,328.9 L917.9,328.9 L918.9,328.2 L919.9,328.2 L920.9,328.8 L921.9,328.5 L922.9,328.3 L923.9,327.9 L924.9,329.1 L925.9,329.2 L926.9,329.2 L927.9,329.2 L928.9,329 L929.9,329.5 L930.9,329.8 L931.9,330.5 L932.9,330.3 L933.9,331.4 L934.9,331.9 L935.9,331.1 L936.9,332.4 L937.9,332.7 L938.9,332.8 L939.9,333.5 L940.9,334.4 L941.9,335.2 L942.9,334.8 L943.9,336.3 L944.9,337.2 L945.9,337.1 L946.9,337.8 L947.9,338.3 L948.9,338.3 L949.9,339.4 L950.9,340 L951.9,340.6 L952.9,341.6 L953.9,341.7 L954.9,342 L955.9,342.7 L956.9,342.4 L957.9,342.9 L958.9,343.5 L959.9,343.8 L960.9,344.7 L961.9,344.6 L962.9,345.5 L963.9,345.8 L964.9,345.8 L965.9,345.6 L966.9,346.2 L967.9,346.4 L968.9,345.9 L969.9,346.5 L970.9,346.7 L971.9,346.5 L972.9,346.9 L973.9,346.8 L974.9,346.1 L975.9,346.3 L976.9,345.9 L977.9,346.2 L978.9,345.5 L979.9,345.8 L980.9,345.4 L981.9,345.3 L982.9,344.7 L983.9,344 L984.9,344.5 L985.9,343.6 L986.9,343.7 L987.9,342.9 L988.9,342.5 L989.9,342.4 L990.9,341.5 L991.9,341.3 L992.9,340 L993.9,340.2 L994.9,339.3 L995.9,338.8 L996.9,338.3 L997.9,337.9 L998.9,337.7 L999.9,336.1 L1000.9,336.2 L1001.9,335.4 L1002.9,335.4 L1003.9,334.4 L1004.9,334.2 L1005.9,333.4 L1006.9,333.3 L1007.9,332.9 L1008.9,332 L1009.9,331.7 L1010.9,330.9 L1011.9,331 L1012.9,330.8 L1013.9,330 L1014.9,330.2 L1015.9,328.9 L1016.9,328.7 L1017.9,328.6 L1018.9,328.6 L1019.9,328.6 L1020.9,328.4 L1021.9,328.3 L1022.9,328.4 L1023.9,328 L1024.9,327.7 L1025.9,327.7 L1026.9,328.8 L1027.9,327.5 L1028.9,328.2 L1029.9,328.8 L1030.9,328.7 L1031.9,328.5 L1032.9,328.9 L1033.9,329.4 L1034.9,329.8 L1035.9,329.4 L1036.9,330.2 L1037.9,330.4 L1038.9,331 L1039.9,331.5 L1040.9,331.4 L1041.9,331.4 L1042.9,332.4 L1043.9,333.3 L1044.9,333.4 L1045.9,333.8 L1046.9,334.9 L1047.9,334.4 L1048.9,335.4 L1049.9,335.5 L1050.9,336.2 L1051.9,336.7 L1052.9,337.7 L1053.9,337.4 L1054.9,338.1 L1055.9,338.2 L1056.9,339.4 L1057.9,339.6 L1058.9,340.3 L1059.9,340.3 L1060.9,341 L1061.9,341.8 L1062.9,341.9 L1063.9,342.5 L1064.9,342.9 L1065.9,343 L1066.9,342.9 L1067.9,344 L1068.9,344 L1069.9,344.6 L1070.9,343.9 L1071.9,344.2 L1072.9,344.2 L1073.9,344.8 L1074.9,345.5 L1075.9,345.4 L1076.9,345.3 L1077.9,345.4 L1078.9,345.6 L1079.9,345.3 L1080.9,345.4 L1081.9,345.3 L1082.9,344.5 L1083.9,344.9 L1084.9,345.3 L1085.9,344.5 L1086.9,344.4 L1087.9,344 L1088.9,343.8 L1089.9,344 L1090.9,343.3 L1091.9,342.7 L1092.9,341.7 L1093.9,342.1 L1094.9,341.3 L1095.9,341 L1096.9,341.3 L1097.9,340.9 L1098.9,339.6 L1099.9,340 L1100.9,339.4 L1101.9,338.6 L1102.9,338.6 L1103.9,337.4 L1104.9,337 L1105.9,336.5 L1106.9,336.1 L1107.9,336.2 L1108.9,335.1 L1109.9,334.7 L1110.9,334.3 L1111.9,334.2 L1112.9,333.6 L1113.9,333.5 L1114.9,332.6 L1115.9,332 L1116.9,331.9 L1117.9,331.7 L1118.9,331.1 L1119.9,331.1 L1120.9,331.3 L1121.9,330.3 L1122.9,330.2 L1123.9,330.4 L1124.9,329.6 L1125.9,329.3 L1126.9,329.1 L1127.9,329.4 L1128.9,329.4 L1129.9,329.1 L1130.9,329.1 L1131.9,329.5 L1132.9,329.4 L1133.9,328.7 L1134.9,329.2 L1135.9,329.3 L1136.9,329.6 L1137.9,329.5 L1138.9,329.5 L1139.9,329.8 L1140.9,329.6 L1141.9,330.4 L1142.9,330.5 L1143.9,331.1 L1144.9,330.9 L1145.9,331.4 L1146.9,331.6 L1147.9,332 L1148.9,332.9 L1149.9,332.9 L1150.9,333.6 L1151.9,333.5 L1152.9,334.3 L1153.9,334.2 L1154.9,335 L1155.9,335.5 L1156.9,336.3 L1157.9,336.6 L1158.9,336.9 L1159.9,337.7 L1160.9,337.9 L1161.9,338.5 L1162.9,339 L1163.9,339.2 L1164.9,339.5 L1165.9,340.1 L1166.9,340.3 L1167.9,341 L1168.9,341.5 L1169.9,341.8 L1170.9,341.8 L1171.9,341.9 L1172.9,342.5 L1173.9,342.8 L1174.9,343.4 L1175.9,343.2 L1176.9,343.5 L1177.9,344 L1178.9,343.8 L1179.9,344 L1180.9,344.7 L1181.9,344.7 L1182.9,344.6 L1183.9,344.5 L1184.9,344.2 L1185.9,344.6 L1186.9,344.4 L1187.9,344.4 L1188.9,344.1 L1189.9,344.2 L1190.9,344 L1191.9,344 L1192.9,344.1 L1193.9,343.6 L1194.9,342.8 L1195.9,342.7 L1196.9,342.3 L1197.9,342.2 L1198.9,342.3 L1199.9,341.9 L1200.9,341.3 L1201.9,341.2 L1202.9,340.5 L1203.9,340 L1204.9,339.6 L1205.9,339.3 L1206.9,339.6 L1207.9,338.4 L1208.9,338.7 L1209.9,338.3 L1210.9,337.4 L1211.9,337.1 L1212.9,336.5 L1213.9,336.2 L1214.9,336 L1215.9,335.4 L1216.9,335.3 L1217.9,334.9 L1218.9,334.3 L1219.9,333.9 L1220.9,333.4 L1221.9,333.2 L1222.9,332.4 L1223.9,332.5 L1224.9,332.2 L1225.9,331.5 L1226.9,332.2 L1227.9,331 L1228.9,330.8 L1229.9,330.9 L1230.9,330.1 L1231.9,330.2 L1232.9,329.9 L1233.9,329.9 L1234.9,330.1 L1235.9,330.1 L1236.9,330.3 L1237.9,330.2 L1238.9,330.3 L1239.9,330.2 L1240.9,329.9 L1241.9,330.4 L1242.9,330.1 L1243.9,330.1 L1244.9,330.9 L1245.9,330.9 L1246.9,330.9 L1247.9,331.3 L1248.9,331.5 L1249.9,331.1" fill="none" stroke="#e8234f" stroke-width="2.6" stroke-linejoin="round"/>
<polygon points="45,662.1 46,659 47,662.1 48,662.1 49,662.1 50,662.1 51,659.9 52,661.9 53,662.1 54,662.1 55,660.8 56,661.6 57,662.1 58,661.1 59,662.1 60,662.1 61,662.1 62,662.1 63,662.1 64,660.3 65,661.7 66,662.1 67,662.1 68,662.1 69,662.1 70,659 71,658.4 72,662.1 73,662.1 74,657.8 75,659.8 76,662 77,658.3 78,659.6 79,660.2 80,657.4 81,661.7 82,661 83,661.2 84,661.2 85,661.4 86,662.1 87,662.1 88,661.7 89,659.5 90,657 91,662.1 92,659.2 93,662.1 94,662.1 95,662.1 96,662.1 97,660.9 98,661.4 99,657.3 100,662.1 101,662.1 102,659.4 103,661.3 104,662.1 105,656.5 106,659.9 107,660.7 108,662.1 109,659.3 110,662.1 111,659.6 112,659.9 113,660.6 114,661 115,662.1 116,659.2 117,661.8 118,662.1 119,662.1 120,660.3 121,658.1 122,662.1 123,658.9 124,660.3 125,661.4 126,662.1 127,661.7 128,662.1 129,658.1 130,660.8 131,658.4 132,662.1 133,662.1 134,660.1 135,662.1 136,659.7 137,662.1 138,661.7 139,662.1 140,660.1 141,662.1 142,661.3 143,662.1 144,658.8 145,662.1 146,662.1 147,662.1 148,659.4 149,656 150,662.1 151,657.3 152,660 153,658.6 154,662.1 155,662.1 156,659.1 157,660.4 158,659.8 159,660.1 160,661.3 161,661.6 162,657.5 163,662.1 164,658.1 165,662.1 165,678.9 164,676.5 163,676.5 162,679.1 161,676.5 160,676.5 159,676.9 158,678.1 157,676.5 156,679.2 155,676.5 154,676.5 153,678 152,676.5 151,676.5 150,678.6 149,679.6 148,676.5 147,676.5 146,676.5 145,682.1 144,677 143,679.6 142,677.8 141,678.1 140,676.5 139,676.5 138,677.5 137,678.5 136,676.5 135,676.5 134,676.5 133,678.6 132,677.8 131,676.5 130,676.5 129,676.5 128,678.9 127,678.1 126,678.2 125,676.5 124,676.5 123,676.5 122,676.5 121,677.2 120,678.4 119,677.7 118,676.5 117,676.5 116,676.5 115,676.5 114,676.5 113,676.5 112,676.5 111,676.5 110,678.1 109,676.5 108,676.5 107,676.5 106,677.5 105,682.5 104,676.5 103,676.5 102,676.5 101,679.5 100,677 99,676.5 98,680.4 97,681 96,679.9 95,676.5 94,676.5 93,679.8 92,680.2 91,676.6 90,676.5 89,676.5 88,678.1 87,677.1 86,676.5 85,678 84,676.5 83,680.2 82,676.5 81,678 80,676.5 79,676.5 78,676.5 77,676.5 76,677.3 75,678.7 74,676.5 73,676.5 72,679.2 71,676.6 70,678.2 69,686.9 68,676.5 67,676.8 66,676.5 65,677.2 64,677.3 63,678 62,678.3 61,677.6 60,679 59,679.6 58,678.8 57,676.5 56,678.5 55,676.5 54,677.2 53,680 52,680 51,676.5 50,678.3 49,676.5 48,676.5 47,679.2 46,676.5 45,679.4" fill="#12808c"/><polygon points="45,662.1 46,662.3 47,662 48,661.5 49,661.8 50,661.4 51,661.9 52,661.7 53,662.3 54,661.7 55,662.1 56,660 57,662.2 58,661.9 59,661.5 60,661.8 61,662.4 62,662.2 63,662 64,661.7 65,661.8 66,662.2 67,662 68,661.7 69,661.8 70,659.9 71,661.7 72,661.8 73,662.2 74,662.3 75,661.6 76,661.9 77,662.3 78,662.4 79,660.9 80,661.9 81,662.1 82,661.1 83,662.1 84,660.7 85,662.1 86,662.1 87,662.3 88,661.5 89,662 90,662.2 91,661.7 92,662 93,662.3 94,662.2 95,662.2 96,662.1 97,662 98,662.4 99,661.6 100,661.4 101,661.3 102,662.2 103,662.4 104,662.3 105,662.4 106,662.4 107,662.3 108,661.7 109,661.6 110,661.8 111,661.5 112,660.8 113,661.5 114,661.6 115,662.3 116,661.8 117,662.1 118,661.5 119,662.3 120,660.6 121,662 122,661.9 123,662 124,661.7 125,661.7 126,661.1 127,661.9 128,660.7 129,660.4 130,661.1 131,662.3 132,661.9 133,661.8 134,661.5 135,661.3 136,662.3 137,660.9 138,662.2 139,660.5 140,661.7 141,662.1 142,662.2 143,661.1 144,662.2 145,661.4 146,662.4 147,661.8 148,662 149,661.9 150,661.4 151,661.6 152,662.3 153,661.9 154,661.9 155,662.2 156,661.7 157,662.2 158,661.9 159,661.6 160,662.3 161,662.1 162,661.7 163,662.1 164,662 165,661.8 165,677.4 164,676.6 163,676.4 162,677.2 161,676.7 160,677.3 159,676.6 158,677.3 157,676.4 156,676.3 155,676.6 154,677.1 153,676.4 152,676.9 151,677.2 150,676.7 149,677.3 148,676.7 147,676.7 146,678.1 145,677.4 144,677.3 143,676.6 142,676.4 141,676.6 140,676.9 139,676.5 138,677 137,676.9 136,676.3 135,676.4 134,676.6 133,677.5 132,677.4 131,676.4 130,677.6 129,676.7 128,676.8 127,677.3 126,677.7 125,676.3 124,676.3 123,676.4 122,676.7 121,676.8 120,677 119,676.7 118,676.5 117,676.9 116,677.7 115,676.5 114,676.3 113,676.6 112,677.1 111,676.4 110,677 109,676.8 108,677.4 107,676.3 106,677 105,676.6 104,677.2 103,677.4 102,677.2 101,676.7 100,677.1 99,677 98,676.4 97,676.4 96,676.7 95,678.1 94,676.6 93,676.6 92,676.9 91,676.9 90,677 89,676.8 88,677.6 87,677 86,677.1 85,676.9 84,676.4 83,677.5 82,676.2 81,676.4 80,676.3 79,676.5 78,676.6 77,677.6 76,677.1 75,676.2 74,677.5 73,676.4 72,676.8 71,676.9 70,676.4 69,676.4 68,676.4 67,676.8 66,676.8 65,677.5 64,676.5 63,676.3 62,676.4 61,676.6 60,676.6 59,676.3 58,676.4 57,676.6 56,676.4 55,676.6 54,676.7 53,677.1 52,676.4 51,677.1 50,676.3 49,677.5 48,676.5 47,677.5 46,676.6 45,676.8" fill="#1fc8d8"/>
<line x1="165.4" y1="600" x2="165.4" y2="684" stroke="#128a98" stroke-width="1.2" opacity="0.9"/>
<polygon points="165.4,663 166.4,662.8 167.4,661.7 168.4,662.5 169.4,662.1 170.4,662.2 171.4,662.1 172.4,661.7 173.4,661.8 174.4,661.6 175.4,658.6 176.4,655.8 177.4,658.7 178.4,661 179.4,659.4 180.4,658.3 181.4,660.5 182.4,657.9 183.4,660.1 184.4,658.5 185.4,654.8 186.4,659.7 187.4,657.8 188.4,659.3 189.4,659.2 190.4,657.2 191.4,654.8 192.4,658.7 193.4,658.5 194.4,658.3 195.4,656.3 196.4,655.6 197.4,657.8 198.4,657.4 199.4,656.1 200.4,654 201.4,657.2 202.4,657 203.4,656.8 204.4,656.6 205.4,656.5 206.4,654.1 207.4,654.4 208.4,655.5 209.4,650.7 210.4,651.1 211.4,654.4 212.4,655 213.4,652 214.4,654.9 215.4,654.7 216.4,654.6 217.4,652.6 218.4,654.2 219.4,654 220.4,653.9 221.4,653.7 222.4,653.5 223.4,653.3 224.4,653.2 225.4,652.2 226.4,652.8 227.4,652.6 228.4,649.8 229.4,649.9 230.4,649.8 231.4,650.8 232.4,650.4 233.4,651.6 234.4,651.4 235.4,651.2 236.4,651 237.4,647.4 238.4,650.7 239.4,646.7 240.4,649.4 241.4,649 242.4,649.9 243.4,649.8 244.4,649.6 245.4,649.4 246.4,648.3 247.4,649 248.4,648.9 249.4,645.7 250.4,648.5 251.4,648.3 252.4,648.1 253.4,647.9 254.4,647.4 255.4,645.5 256.4,646.8 257.4,647.2 258.4,647 259.4,646.8 260.4,645.6 261.4,644.6 262.4,644.4 263.4,646.1 264.4,642.4 265.4,644.9 266.4,645.4 267.4,645.4 268.4,645.2 269.4,645 270.4,644.7 271.4,644.4 272.4,644.4 273.4,644.2 274.4,639.8 275.4,643.9 276.4,643.7 277.4,643.5 278.4,643.3 279.4,641 280.4,642.9 281.4,640.4 282.4,641.3 283.4,642.3 284.4,640.7 285.4,642 286.4,641.8 287.4,640.8 288.4,641.4 289.4,641.2 290.4,638.8 291.4,640.9 292.4,637.2 293.4,640.5 294.4,640.3 295.4,640.1 296.4,639.9 297.4,639.7 298.4,639.5 299.4,638 300.4,637.3 301.4,639 302.4,638.8 303.4,638.6 304.4,638.4 305.4,638.2 306.4,638 307.4,637.8 308.4,637.6 309.4,637.4 310.4,637.2 311.4,637 312.4,636.9 313.4,635.7 314.4,636.5 315.4,635 316.4,636.1 317.4,635.9 318.4,635.7 319.4,635.5 320.4,635.3 321.4,635.1 322.4,634.9 323.4,634.7 324.4,634.1 325.4,633.9 326.4,634.2 327.4,634 328.4,633.8 329.4,633.6 330.4,633.4 331.4,633.2 332.4,633 333.4,632.8 334.4,632 335.4,632.4 336.4,632.2 337.4,632 338.4,631.4 339.4,629.7 340.4,631.5 341.4,630.7 342.4,631.1 343.4,630.7 344.4,630.7 345.4,630.4 346.4,630.3 347.4,628.2 348.4,625.6 349.4,629.7 350.4,629.5 351.4,626.9 352.4,629.1 353.4,628.9 354.4,628.6 355.4,623.8 356.4,628.3 357.4,626 358.4,627.2 359.4,627.7 360.4,625.3 361.4,627.4 362.4,627.2 363.4,624.3 364.4,626.8 365.4,623.1 366.4,626.4 367.4,625.4 368.4,623 369.4,625.8 370.4,625.4 371.4,625.4 372.4,621 373.4,625 374.4,623.5 375.4,624.6 376.4,624.4 377.4,624.2 378.4,620.7 379.4,619.7 380.4,623.6 381.4,623.4 382.4,620.2 383.4,623 384.4,622.8 385.4,622.6 386.4,616 387.4,616.6 388.4,622.1 389.4,621.9 390.4,621.3 391.4,617.1 392.4,620 393.4,621.1 394.4,620.9 395.4,619.8 396.4,620.5 397.4,620.3 398.4,620.1 399.4,618.5 400.4,619.6 401.4,618.5 402.4,619.3 403.4,618.4 404.4,618.1 405.4,618.1 406.4,618.5 407.4,618.3 408.4,615.9 409.4,613.9 410.4,617.7 411.4,616 412.4,617.3 413.4,617.1 414.4,613.8 415.4,616.7 416.4,614.7 417.4,613.4 418.4,616.1 419.4,614.8 420.4,615.7 421.4,611.8 422.4,615.3 423.4,615.1 424.4,614.9 425.4,614.4 426.4,612.6 427.4,614.3 428.4,614.2 429.4,614 430.4,609.3 431.4,612.9 432.4,613.4 433.4,613.2 434.4,609.9 435.4,612.8 436.4,608.7 437.4,612.4 438.4,612.2 439.4,612 440.4,607.9 441.4,611.6 442.4,611.4 443.4,611.2 444.4,611 445.4,610.6 446.4,610.6 447.4,610.4 448.4,610.2 449.4,610 450.4,608.3 451.4,609.6 452.4,609.4 453.4,604.4 454.4,607.1 455.4,608.4 456.4,607.6 457.4,608.4 458.4,603.7 459.4,604.1 460.4,607.8 461.4,604.7 462.4,605.7 463.4,607.2 464.4,603.9 465.4,606.8 466.4,606.6 467.4,606.4 468.4,603.5 469.4,604.8 470.4,605.8 471.4,605.6 472.4,605.4 473.4,605.2 474.4,605 475.4,601.7 476.4,604.6 477.4,602.2 478.4,600.9 479.4,604 480.4,602.4 481.4,603.6 482.4,603.4 483.4,601.8 484.4,603 485.4,600 486.4,602.6 487.4,597.7 488.4,602.2 489.4,602 490.4,601.8 491.4,601.6 492.4,599.1 493.4,601.2 494.4,601 495.4,598.8 496.4,599.6 497.4,600.4 498.4,600.2 499.4,598.6 500.4,599.8 501.4,599.6 502.4,599.4 503.4,599.2 504.4,597.5 505.4,598 506.4,593.7 507.4,598.4 508.4,596.3 509.4,597.6 510.4,597.8 511.4,597.6 512.4,597.4 513.4,597.2 514.4,597 515.4,595 516.4,596.6 517.4,592.7 518.4,596.2 519.4,593.4 520.4,594.6 521.4,591.8 522.4,593.5 523.4,595.2 524.4,594.8 525.4,592.5 526.4,593.5 527.4,594 528.4,594 529.4,593 530.4,593.8 531.4,593.6 532.4,593.4 533.4,590.9 534.4,590.9 535.4,589.7 536.4,592.6 537.4,590 538.4,589.5 539.4,592 540.4,591.8 541.4,591 542.4,583.8 543.4,591.2 544.4,586.5 545.4,590.8 546.4,589.2 547.4,590.4 548.4,590.2 549.4,590 550.4,589.8 551.4,589.5 552.4,587.2 553.4,589.2 554.4,588.9 555.4,588.8 556.4,588.6 557.4,588.4 558.4,581.5 559.4,587.7 560.4,587.8 561.4,587.6 562.4,587.4 563.4,587.2 564.4,587 565.4,586.8 566.4,586.6 567.4,585.6 568.4,586.2 569.4,585.8 570.4,585.8 571.4,585 572.4,585.4 573.4,585.2 574.4,583.8 575.4,584.8 576.4,584.6 577.4,582.4 578.4,584.2 579.4,584 580.4,583.8 581.4,583.6 582.4,583.3 583.4,580.9 584.4,583 585.4,579.1 586.4,582.6 587.4,581.8 588.4,582.2 589.4,581.9 590.4,581.8 591.4,581.6 592.4,580.2 593.4,581.2 594.4,581 595.4,578.7 596.4,580.6 597.4,580.4 598.4,576.5 599.4,575.5 600.4,579.2 601.4,579.6 602.4,579.4 603.4,578.3 604.4,579 605.4,575 606.4,578.6 607.4,578.4 608.4,577.1 609.4,578 610.4,577.8 611.4,577.6 612.4,573.6 613.4,577.2 614.4,577 615.4,573.4 616.4,576.6 617.4,574.7 618.4,570.6 619.4,576 620.4,575 621.4,572.6 622.4,569.6 623.4,575.2 624.4,575 625.4,574.7 626.4,574.6 627.4,573.5 628.4,574.2 629.4,571.5 630.4,573.8 631.4,573.6 632.4,569.4 633.4,573.2 634.4,573 635.4,572.8 636.4,572.6 637.4,572.4 638.4,572.2 639.4,572 640.4,571.8 641.4,571.6 642.4,569.3 643.4,571.2 644.4,571 645.4,570.8 646.4,570.6 647.4,567.9 648.4,569.5 649.4,569.1 650.4,569.8 651.4,569.6 652.4,569.4 653.4,569.2 654.4,567.4 655.4,565.1 656.4,567.8 657.4,566.9 658.4,566.9 659.4,567.9 660.4,562.5 661.4,567.6 662.4,567.4 663.4,567.2 664.4,567 665.4,565.7 666.4,566.6 667.4,566.4 668.4,566.2 669.4,566 670.4,565.8 671.4,561.7 672.4,565.1 673.4,564.3 674.4,565 675.4,564.8 676.4,564.6 677.4,562.2 678.4,561.2 679.4,563.9 680.4,563.7 681.4,562.4 682.4,561.4 683.4,560.9 684.4,562.9 685.4,562.7 686.4,562.2 687.4,562.3 688.4,562.1 689.4,561.3 690.4,560.8 691.4,561.5 692.4,561.3 693.4,561.1 694.4,560.9 695.4,560 696.4,556.4 697.4,559.7 698.4,560.1 699.4,557 700.4,555.5 701.4,559.5 702.4,559.3 703.4,559.1 704.4,556.9 705.4,558.7 706.4,558.5 707.4,558.3 708.4,558.1 709.4,557.9 710.4,557.7 711.4,557.3 712.4,557.3 713.4,555.9 714.4,552.4 715.4,556.7 716.4,556.5 717.4,555.9 718.4,556.1 719.4,555.9 720.4,555.7 721.4,555.5 722.4,555.3 723.4,555.1 724.4,554.8 725.4,554.6 726.4,554.4 727.4,554.2 728.4,554 729.4,553.7 730.4,553.5 731.4,552.1 732.4,553.1 733.4,552.9 734.4,552.7 735.4,552.4 736.4,552.2 737.4,550.7 738.4,551.7 739.4,551.5 740.4,551.3 741.4,550.7 742.4,550.8 743.4,547.9 744.4,550.4 745.4,544.4 746.4,549.9 747.4,549.3 748.4,549.4 749.4,548.9 750.4,546.9 751.4,548.7 752.4,548 753.4,548.2 754.4,547.9 755.4,547.7 756.4,546.5 757.4,547.2 758.4,546.5 759.4,545 760.4,545.8 761.4,546.1 762.4,545.9 763.4,545.6 764.4,542.8 765.4,545.1 766.4,542.4 767.4,543.6 768.4,544.2 769.4,544 770.4,543.7 771.4,543.4 772.4,543.1 773.4,540.4 774.4,542.6 775.4,542.3 776.4,542 777.4,539.7 778.4,537.3 779.4,541.1 780.4,536.4 781.4,540.5 782.4,538.2 783.4,539.9 784.4,539.6 785.4,539.3 786.4,536.1 787.4,538.6 788.4,537.3 789.4,538 790.4,537.7 791.4,537.4 792.4,537.1 793.4,535.5 794.4,536.4 795.4,536.1 796.4,535.7 797.4,535.4 798.4,533.5 799.4,534.7 800.4,534.4 801.4,529.2 802.4,533.7 803.4,533.3 804.4,533 805.4,532.6 806.4,531.3 807.4,531.9 808.4,531.6 809.4,531.2 810.4,530.8 811.4,529.2 812.4,529.4 813.4,526.6 814.4,529.4 815.4,529 816.4,528.6 817.4,527.4 818.4,527.8 819.4,527.5 820.4,526.8 821.4,526.7 822.4,526.3 823.4,520.9 824.4,521.6 825.4,525.1 826.4,524.7 827.4,520.5 828.4,523.9 828.4,538.3 827.4,538.7 826.4,540.7 825.4,539.5 824.4,540.6 823.4,540.8 822.4,540.7 821.4,541.1 820.4,541.5 819.4,541.8 818.4,545.5 817.4,545.3 816.4,546.5 815.4,547 814.4,543.7 813.4,544.1 812.4,545.1 811.4,544.9 810.4,545.2 809.4,545.6 808.4,545.9 807.4,546.3 806.4,546.7 805.4,547 804.4,550.9 803.4,547.7 802.4,549.9 801.4,548.5 800.4,548.7 799.4,549.1 798.4,551.7 797.4,549.7 796.4,550.1 795.4,550.4 794.4,550.7 793.4,551.1 792.4,553.4 791.4,551.7 790.4,553.7 789.4,552.8 788.4,555.3 787.4,555.3 786.4,553.3 785.4,554.7 784.4,553.9 783.4,555.2 782.4,554.5 781.4,554.8 780.4,555.1 779.4,558.1 778.4,555.7 777.4,557.3 776.4,559.3 775.4,559.9 774.4,556.8 773.4,557.1 772.4,557.4 771.4,557.7 770.4,558 769.4,558.2 768.4,558.5 767.4,560.1 766.4,559.1 765.4,559.3 764.4,560.8 763.4,559.9 762.4,560.1 761.4,560.4 760.4,560.7 759.4,560.9 758.4,563 757.4,561.4 756.4,561.8 755.4,561.9 754.4,562.2 753.4,562.4 752.4,562.8 751.4,568.1 750.4,564.6 749.4,565.7 748.4,563.7 747.4,565.5 746.4,564.5 745.4,566.8 744.4,564.9 743.4,564.8 742.4,569.3 741.4,565.3 740.4,565.5 739.4,565.8 738.4,566 737.4,566.2 736.4,566.4 735.4,567.6 734.4,570.9 733.4,571.8 732.4,567.3 731.4,569 730.4,567.7 729.4,571.4 728.4,568.2 727.4,571 726.4,570.4 725.4,568.8 724.4,569 723.4,569.2 722.4,571.4 721.4,569.7 720.4,569.9 719.4,570.1 718.4,571.6 717.4,573.3 716.4,574.5 715.4,573.7 714.4,571.1 713.4,571.3 712.4,571.6 711.4,571.7 710.4,572.2 709.4,572.1 708.4,575.9 707.4,572.5 706.4,572.7 705.4,574.5 704.4,573.1 703.4,573.3 702.4,573.5 701.4,573.7 700.4,573.9 699.4,574.1 698.4,575.7 697.4,577.6 696.4,574.7 695.4,574.9 694.4,581.8 693.4,575.3 692.4,575.5 691.4,575.7 690.4,577 689.4,576.1 688.4,578.3 687.4,576.5 686.4,576.7 685.4,580.7 684.4,579.7 683.4,578.1 682.4,578.3 681.4,578.5 680.4,577.8 679.4,578 678.4,578.2 677.4,578.9 676.4,578.6 675.4,578.8 674.4,580.6 673.4,585.1 672.4,580.3 671.4,582.8 670.4,582.7 669.4,582 668.4,580.2 667.4,580.9 666.4,580.6 665.4,583.9 664.4,581.2 663.4,586.6 662.4,581.4 661.4,582.8 660.4,581.8 659.4,582 658.4,582.2 657.4,582.9 656.4,582.6 655.4,582.8 654.4,584.7 653.4,584.5 652.4,583.4 651.4,583.6 650.4,583.8 649.4,584 648.4,584.2 647.4,584.4 646.4,584.9 645.4,586.3 644.4,585.8 643.4,586.1 642.4,586.7 641.4,588.9 640.4,586.2 639.4,587.3 638.4,589.7 637.4,586.4 636.4,586.6 635.4,587.8 634.4,587 633.4,587.2 632.4,590.5 631.4,587.6 630.4,588.8 629.4,592.7 628.4,588.2 627.4,591.4 626.4,588.6 625.4,588.8 624.4,589.9 623.4,591.2 622.4,591.6 621.4,589.6 620.4,592 619.4,590 618.4,592.3 617.4,590.3 616.4,590.5 615.4,591.7 614.4,591 613.4,592.6 612.4,591.3 611.4,591.5 610.4,591.7 609.4,592.5 608.4,592.1 607.4,592.8 606.4,593.2 605.4,592.7 604.4,592.9 603.4,593.7 602.4,593.3 601.4,595.9 600.4,596.4 599.4,593.9 598.4,594.4 597.4,598.3 596.4,594.5 595.4,595.2 594.4,594.9 593.4,597.8 592.4,595.3 591.4,595.5 590.4,601.5 589.4,595.9 588.4,597.6 587.4,596.3 586.4,598.1 585.4,596.7 584.4,596.9 583.4,597.1 582.4,597.3 581.4,597.5 580.4,597.7 579.4,597.9 578.4,601.4 577.4,600 576.4,600.6 575.4,598.7 574.4,602 573.4,599.1 572.4,599.3 571.4,600.4 570.4,599.7 569.4,599.9 568.4,600.1 567.4,603.6 566.4,602.1 565.4,600.7 564.4,600.9 563.4,601.1 562.4,601.3 561.4,603.1 560.4,601.7 559.4,601.8 558.4,602 557.4,602.2 556.4,602.4 555.4,602.6 554.4,603.9 553.4,604.1 552.4,603.2 551.4,603.4 550.4,603.6 549.4,603.8 548.4,604 547.4,607.9 546.4,605.7 545.4,605.5 544.4,606.8 543.4,606.1 542.4,605.3 541.4,605.4 540.4,605.6 539.4,605.8 538.4,607.1 537.4,606.2 536.4,606.4 535.4,606.6 534.4,606.8 533.4,607 532.4,608.8 531.4,607.6 530.4,608.1 529.4,607.8 528.4,611.5 527.4,608.2 526.4,613.2 525.4,608.6 524.4,611.5 523.4,609.3 522.4,609.2 521.4,609.4 520.4,609.6 519.4,609.8 518.4,610 517.4,611.9 516.4,610.4 515.4,611.9 514.4,610.8 513.4,611.4 512.4,612.8 511.4,612.9 510.4,613.1 509.4,611.7 508.4,613.4 507.4,614.6 506.4,612.3 505.4,614.3 504.4,612.7 503.4,613.7 502.4,618.5 501.4,614.1 500.4,613.5 499.4,617.4 498.4,617.2 497.4,614.1 496.4,614.3 495.4,614.5 494.4,620.4 493.4,615.2 492.4,615.1 491.4,615.3 490.4,620.6 489.4,621.3 488.4,618.9 487.4,616.1 486.4,616.3 485.4,617.7 484.4,616.7 483.4,616.9 482.4,617.1 481.4,617.3 480.4,617.9 479.4,617.7 478.4,617.9 477.4,618.1 476.4,618.5 475.4,618.5 474.4,618.7 473.4,618.9 472.4,621.1 471.4,621.4 470.4,619.4 469.4,619.6 468.4,623.4 467.4,620 466.4,620.2 465.4,623.7 464.4,626.9 463.4,620.8 462.4,621 461.4,621.9 460.4,621.4 459.4,621.6 458.4,621.8 457.4,622 456.4,624 455.4,624.6 454.4,622.6 453.4,622.8 452.4,623 451.4,623.2 450.4,623.4 449.4,623.6 448.4,624.6 447.4,624 446.4,627.8 445.4,624.4 444.4,624.8 443.4,626.5 442.4,625.4 441.4,625.2 440.4,625.4 439.4,627.9 438.4,627.1 437.4,625.9 436.4,628.2 435.4,630.2 434.4,626.5 433.4,626.7 432.4,627.3 431.4,631.3 430.4,627.3 429.4,628.7 428.4,627.7 427.4,632.4 426.4,628.9 425.4,628.3 424.4,629.1 423.4,628.7 422.4,628.9 421.4,629.1 420.4,634.8 419.4,635 418.4,629.8 417.4,630 416.4,630.1 415.4,631.8 414.4,630.5 413.4,630.6 412.4,630.8 411.4,631 410.4,631.3 409.4,634.1 408.4,631.6 407.4,634.8 406.4,632 405.4,632.2 404.4,636.9 403.4,632.6 402.4,635.2 401.4,636.1 400.4,633.2 399.4,633.4 398.4,633.6 397.4,633.8 396.4,634 395.4,636.2 394.4,637.2 393.4,634.8 392.4,634.8 391.4,634.9 390.4,635.1 389.4,635.3 388.4,635.7 387.4,637.2 386.4,637.3 385.4,636.3 384.4,636.3 383.4,636.5 382.4,639 381.4,638.5 380.4,637.1 379.4,637.3 378.4,637.5 377.4,639.7 376.4,637.9 375.4,638.1 374.4,638.9 373.4,638.4 372.4,640.3 371.4,638.8 370.4,639 369.4,645 368.4,639.4 367.4,639.6 366.4,640.4 365.4,640 364.4,645 363.4,640.4 362.4,640.6 361.4,643.4 360.4,641 359.4,641.2 358.4,644.2 357.4,641.5 356.4,641.7 355.4,643.5 354.4,645.2 353.4,642.3 352.4,644 351.4,643.3 350.4,642.9 349.4,643.1 348.4,643.3 347.4,647.1 346.4,644.1 345.4,643.9 344.4,646 343.4,644.2 342.4,645.7 341.4,644.6 340.4,644.8 339.4,645 338.4,645.2 337.4,645.4 336.4,646.2 335.4,645.8 334.4,646 333.4,646.2 332.4,647.7 331.4,646.9 330.4,649.2 329.4,646.9 328.4,647.1 327.4,654.2 326.4,653.1 325.4,647.7 324.4,652.3 323.4,649.2 322.4,648.3 321.4,650.8 320.4,648.6 319.4,648.8 318.4,649 317.4,649.2 316.4,651.4 315.4,649.6 314.4,649.8 313.4,653.4 312.4,650.2 311.4,650.4 310.4,655.9 309.4,650.8 308.4,650.9 307.4,651.1 306.4,651.3 305.4,653.1 304.4,651.7 303.4,651.9 302.4,652.3 301.4,654.3 300.4,652.4 299.4,654.9 298.4,654.7 297.4,657 296.4,653.2 295.4,656.1 294.4,653.6 293.4,655 292.4,653.9 291.4,654.1 290.4,654.3 289.4,654.9 288.4,660.7 287.4,655.4 286.4,655.1 285.4,656.8 284.4,655.4 283.4,655.6 282.4,657.3 281.4,656 280.4,657.2 279.4,656.4 278.4,657.8 277.4,658.3 276.4,657.6 275.4,657.1 274.4,658.6 273.4,657.5 272.4,658.3 271.4,658.9 270.4,658 269.4,659.7 268.4,658.4 267.4,660.4 266.4,664 265.4,659.5 264.4,659.1 263.4,660.7 262.4,659.5 261.4,659.7 260.4,659.9 259.4,660 258.4,660.2 257.4,660.8 256.4,664.8 255.4,660.8 254.4,666.4 253.4,661.1 252.4,661.3 251.4,661.5 250.4,661.7 249.4,661.9 248.4,662 247.4,662.2 246.4,663.7 245.4,664.6 244.4,662.8 243.4,662.9 242.4,663.1 241.4,665.3 240.4,663.5 239.4,663.6 238.4,663.8 237.4,664 236.4,664.2 235.4,664.4 234.4,668.1 233.4,666.1 232.4,666.2 231.4,665.1 230.4,665.2 229.4,665.4 228.4,670.1 227.4,666.5 226.4,665.9 225.4,666.4 224.4,666.3 223.4,670.1 222.4,667.1 221.4,667.6 220.4,669.6 219.4,667.2 218.4,670.2 217.4,668.1 216.4,667.7 215.4,669.3 214.4,670.8 213.4,672.6 212.4,668.4 211.4,668.5 210.4,668.9 209.4,668.9 208.4,669.1 207.4,671.5 206.4,669.4 205.4,672.3 204.4,669.7 203.4,669.9 202.4,670.1 201.4,670.2 200.4,670.8 199.4,670.6 198.4,670.7 197.4,671.4 196.4,673.3 195.4,671.2 194.4,672.8 193.4,671.6 192.4,675 191.4,671.9 190.4,672.1 189.4,673.1 188.4,672.4 187.4,672.5 186.4,672.7 185.4,672.9 184.4,673 183.4,676.1 182.4,673.3 181.4,674.5 180.4,673.7 179.4,673.8 178.4,674 177.4,674.1 176.4,674.3 175.4,676.1 174.4,674.6 173.4,674.8 172.4,675.1 171.4,675.1 170.4,675.2 169.4,677.1 168.4,675.5 167.4,675.7 166.4,677.7 165.4,678.8" fill="#12808c"/><polygon points="165.4,662.9 166.4,662.6 167.4,662.5 168.4,662.3 169.4,662.4 170.4,661.9 171.4,662.2 172.4,662.2 173.4,661.2 174.4,661.2 175.4,661 176.4,661.2 177.4,660.6 178.4,660.4 179.4,660.4 180.4,659.9 181.4,659.2 182.4,659.7 183.4,659.7 184.4,660 185.4,659.5 186.4,659.5 187.4,659.7 188.4,658.6 189.4,659.1 190.4,658.2 191.4,656.9 192.4,658.8 193.4,656.8 194.4,658.3 195.4,657.6 196.4,658.2 197.4,658.1 198.4,657 199.4,656.9 200.4,657.4 201.4,657.3 202.4,655.2 203.4,656.3 204.4,656.9 205.4,656.8 206.4,656.4 207.4,655.6 208.4,656.2 209.4,655.3 210.4,655.1 211.4,655.4 212.4,655.3 213.4,654.7 214.4,654.2 215.4,654.6 216.4,654.5 217.4,653 218.4,653.8 219.4,652.8 220.4,653.2 221.4,653.8 222.4,653.2 223.4,653.4 224.4,651.4 225.4,652.3 226.4,652 227.4,652.8 228.4,651.8 229.4,651.2 230.4,652.3 231.4,650.3 232.4,650.8 233.4,651.8 234.4,651.4 235.4,651.3 236.4,650.5 237.4,650 238.4,649.5 239.4,649.3 240.4,650.4 241.4,649.1 242.4,650.1 243.4,648.9 244.4,649.4 245.4,649.3 246.4,648.3 247.4,648.5 248.4,648.8 249.4,648.3 250.4,648.3 251.4,647.5 252.4,648 253.4,647.1 254.4,647.4 255.4,646.9 256.4,647 257.4,647 258.4,647 259.4,645.1 260.4,646.1 261.4,646 262.4,646.2 263.4,645 264.4,645 265.4,645.2 266.4,645.2 267.4,645.3 268.4,645.3 269.4,645 270.4,644.7 271.4,644.7 272.4,644 273.4,644.3 274.4,644 275.4,643.4 276.4,643.4 277.4,643.1 278.4,642.1 279.4,642.5 280.4,642.9 281.4,642.2 282.4,641.8 283.4,640.9 284.4,641.7 285.4,641.3 286.4,640.9 287.4,640.1 288.4,641.2 289.4,641.5 290.4,641 291.4,640.1 292.4,640.4 293.4,639.8 294.4,640.1 295.4,639.2 296.4,639.4 297.4,639.6 298.4,639.7 299.4,638.8 300.4,639.3 301.4,638.5 302.4,637.8 303.4,636.4 304.4,638.4 305.4,638.1 306.4,638 307.4,637.3 308.4,637.6 309.4,636.1 310.4,637.5 311.4,636.7 312.4,636.5 313.4,635.3 314.4,636.7 315.4,636.1 316.4,635.4 317.4,635.3 318.4,635.2 319.4,635 320.4,634.9 321.4,635 322.4,634.4 323.4,634.6 324.4,634.8 325.4,634.2 326.4,633.8 327.4,633.7 328.4,633.8 329.4,633 330.4,633.6 331.4,633.2 332.4,633.2 333.4,633 334.4,632.8 335.4,632.5 336.4,630.8 337.4,631.4 338.4,631.6 339.4,631.7 340.4,631.1 341.4,630.7 342.4,630.6 343.4,630.8 344.4,630 345.4,629.4 346.4,629.6 347.4,629.9 348.4,629.2 349.4,628.9 350.4,628.8 351.4,628.9 352.4,628.8 353.4,629.2 354.4,628.6 355.4,627.9 356.4,627.6 357.4,627.6 358.4,627.5 359.4,627.8 360.4,627.1 361.4,627.4 362.4,626.5 363.4,626.4 364.4,626.3 365.4,625.7 366.4,626 367.4,626.4 368.4,625.4 369.4,625.5 370.4,624.8 371.4,625 372.4,624.1 373.4,624.9 374.4,624.3 375.4,624.5 376.4,624.2 377.4,623.4 378.4,623.8 379.4,624 380.4,623.3 381.4,623.7 382.4,622.6 383.4,623.1 384.4,622.6 385.4,621.8 386.4,622.6 387.4,621.7 388.4,622.2 389.4,621.7 390.4,621.6 391.4,621.1 392.4,620.5 393.4,621.3 394.4,620.5 395.4,620.6 396.4,619.9 397.4,620.3 398.4,619.3 399.4,619.8 400.4,618.6 401.4,619.6 402.4,619.1 403.4,617.8 404.4,619.2 405.4,619 406.4,618.3 407.4,618.4 408.4,618 409.4,617.5 410.4,618 411.4,617.2 412.4,616.5 413.4,616.5 414.4,617.2 415.4,616.5 416.4,615.7 417.4,615.3 418.4,614.8 419.4,615 420.4,614.9 421.4,615.7 422.4,613.8 423.4,613.7 424.4,614.2 425.4,614 426.4,614.7 427.4,614.2 428.4,614.4 429.4,613.5 430.4,613.9 431.4,612.6 432.4,613.4 433.4,613.3 434.4,612.3 435.4,611.4 436.4,612.4 437.4,612.4 438.4,612 439.4,611.8 440.4,611.8 441.4,611.4 442.4,610.3 443.4,609.9 444.4,610.7 445.4,610.9 446.4,609.9 447.4,610.3 448.4,610.4 449.4,609.7 450.4,609.5 451.4,609.8 452.4,609.7 453.4,607.9 454.4,609 455.4,608.7 456.4,607.6 457.4,608.3 458.4,608.3 459.4,606.7 460.4,607.8 461.4,607.2 462.4,606.9 463.4,606.1 464.4,606.3 465.4,605.8 466.4,606.9 467.4,606.6 468.4,606.3 469.4,606 470.4,605.9 471.4,604 472.4,605.3 473.4,605.4 474.4,604.6 475.4,605.1 476.4,603 477.4,604.4 478.4,604.2 479.4,602.9 480.4,603.5 481.4,603.8 482.4,603.3 483.4,603.3 484.4,602.7 485.4,602.6 486.4,602.3 487.4,602.6 488.4,602.4 489.4,602 490.4,602.1 491.4,601.4 492.4,601.1 493.4,601.4 494.4,600.5 495.4,600.7 496.4,600.8 497.4,600 498.4,600 499.4,600 500.4,600 501.4,599.8 502.4,599.6 503.4,598.8 504.4,598.1 505.4,598.4 506.4,598.8 507.4,597.9 508.4,598.2 509.4,598.1 510.4,598 511.4,595.8 512.4,596.9 513.4,596.7 514.4,597 515.4,596.6 516.4,595.1 517.4,596.4 518.4,595.6 519.4,595.3 520.4,595.6 521.4,594.6 522.4,595.5 523.4,595.1 524.4,594.8 525.4,593 526.4,594.6 527.4,594.6 528.4,593.4 529.4,594 530.4,594.1 531.4,593.3 532.4,593.7 533.4,593.2 534.4,592.9 535.4,593 536.4,592.5 537.4,592.5 538.4,592.4 539.4,591.9 540.4,591.3 541.4,591.4 542.4,591.6 543.4,590.6 544.4,590.9 545.4,590.1 546.4,590.7 547.4,590.7 548.4,590.1 549.4,589.7 550.4,589.6 551.4,588.3 552.4,589.5 553.4,589.4 554.4,588.5 555.4,588.8 556.4,588 557.4,587.8 558.4,587.7 559.4,585.6 560.4,588.1 561.4,587.7 562.4,587.6 563.4,586.7 564.4,586.4 565.4,586.9 566.4,586.9 567.4,586.2 568.4,586.4 569.4,585.9 570.4,585.4 571.4,584 572.4,584.9 573.4,584.4 574.4,585 575.4,583.8 576.4,584.6 577.4,584.2 578.4,584.4 579.4,583.7 580.4,584.1 581.4,583.5 582.4,582.6 583.4,583.3 584.4,582.3 585.4,582.9 586.4,582.5 587.4,581.8 588.4,581.9 589.4,581.7 590.4,580.4 591.4,581.4 592.4,581.2 593.4,580.2 594.4,581 595.4,581 596.4,580.6 597.4,580.7 598.4,580.4 599.4,579.8 600.4,579.8 601.4,579.6 602.4,579.2 603.4,579 604.4,578.5 605.4,578.1 606.4,577.5 607.4,578.3 608.4,578.4 609.4,577.8 610.4,577.2 611.4,577.3 612.4,577.6 613.4,577.4 614.4,576.3 615.4,576.8 616.4,576.7 617.4,576 618.4,576.1 619.4,575.1 620.4,575.8 621.4,575.3 622.4,575.3 623.4,574.8 624.4,575.3 625.4,573 626.4,574.5 627.4,573.9 628.4,574.4 629.4,574.1 630.4,573.2 631.4,573.9 632.4,572.9 633.4,571.7 634.4,572.7 635.4,572.3 636.4,572.5 637.4,572.5 638.4,572.2 639.4,572.2 640.4,571.2 641.4,570.6 642.4,571.5 643.4,570.9 644.4,570.6 645.4,571 646.4,570.3 647.4,570.3 648.4,569.8 649.4,569.1 650.4,569.7 651.4,569.3 652.4,569.4 653.4,569 654.4,568.1 655.4,567.4 656.4,568.6 657.4,567.2 658.4,567.9 659.4,567.9 660.4,567.6 661.4,567.1 662.4,567.3 663.4,567 664.4,567 665.4,566.1 666.4,566.8 667.4,566.6 668.4,565.5 669.4,565.3 670.4,565.7 671.4,565.3 672.4,565.3 673.4,564.8 674.4,565.1 675.4,564 676.4,564.2 677.4,563.5 678.4,563.3 679.4,563.6 680.4,563.6 681.4,562.6 682.4,561.8 683.4,562.4 684.4,562.1 685.4,562.7 686.4,562.6 687.4,561.9 688.4,562.1 689.4,561.6 690.4,560.3 691.4,561.8 692.4,561.5 693.4,560.9 694.4,560.5 695.4,560.9 696.4,560.7 697.4,560.1 698.4,559.2 699.4,559.9 700.4,559.2 701.4,559.3 702.4,558 703.4,559.3 704.4,557.8 705.4,558.4 706.4,558 707.4,557.7 708.4,557.2 709.4,558.1 710.4,557.4 711.4,557 712.4,557.4 713.4,556.8 714.4,556.3 715.4,556 716.4,556.7 717.4,556.3 718.4,555.9 719.4,554.1 720.4,554.6 721.4,555 722.4,555.5 723.4,554.5 724.4,554.8 725.4,553.8 726.4,554.6 727.4,554.4 728.4,553.5 729.4,553.2 730.4,553.4 731.4,553.5 732.4,551.7 733.4,552 734.4,552.7 735.4,552.2 736.4,552.3 737.4,551.8 738.4,551.9 739.4,551.6 740.4,551.4 741.4,550.9 742.4,551 743.4,549.6 744.4,550.4 745.4,549.8 746.4,550 747.4,549.4 748.4,549.4 749.4,549.1 750.4,548.3 751.4,547.1 752.4,548.4 753.4,548.5 754.4,548.2 755.4,547 756.4,547.3 757.4,546.6 758.4,546.4 759.4,546.9 760.4,546.2 761.4,545.7 762.4,544.7 763.4,544.9 764.4,545.5 765.4,545.3 766.4,545 767.4,544.6 768.4,544.2 769.4,543.7 770.4,543.4 771.4,543.1 772.4,543.1 773.4,542.7 774.4,542.7 775.4,540.9 776.4,541.6 777.4,542 778.4,541.6 779.4,541 780.4,540.9 781.4,540.2 782.4,538.9 783.4,539.8 784.4,539.1 785.4,538.1 786.4,538.8 787.4,538.9 788.4,538 789.4,537.5 790.4,537.7 791.4,536.8 792.4,536.3 793.4,536.3 794.4,536 795.4,535.4 796.4,535.9 797.4,533.6 798.4,534 799.4,534.6 800.4,534.5 801.4,533.7 802.4,533.9 803.4,533.6 804.4,532.7 805.4,532.9 806.4,531.4 807.4,531.6 808.4,530.8 809.4,530.6 810.4,531 811.4,530.7 812.4,530.3 813.4,530 814.4,528.3 815.4,528.6 816.4,528.4 817.4,528.4 818.4,526.2 819.4,527.6 820.4,526.3 821.4,525.2 822.4,525.4 823.4,525.8 824.4,525.2 825.4,524.1 826.4,524.1 827.4,524.4 828.4,523.7 828.4,538.6 827.4,538.8 826.4,540.6 825.4,540.4 824.4,540 823.4,540.3 822.4,541.2 821.4,541.2 820.4,541.7 819.4,542.6 818.4,542.6 817.4,542.5 816.4,544.4 815.4,544 814.4,544.2 813.4,544.6 812.4,545 811.4,547 810.4,545.6 809.4,545.4 808.4,546.9 807.4,546.2 806.4,546.9 805.4,547.6 804.4,548.3 803.4,548.2 802.4,547.9 801.4,548.2 800.4,548.6 799.4,548.9 798.4,549.5 797.4,549.6 796.4,550.6 795.4,550.4 794.4,551.2 793.4,550.8 792.4,551.1 791.4,552 790.4,552.3 789.4,552.6 788.4,552.9 787.4,554 786.4,553.7 785.4,553.6 784.4,553.6 783.4,555.3 782.4,554.9 781.4,555.3 780.4,555.2 779.4,555.3 778.4,555.6 777.4,555.8 776.4,556.2 775.4,557.5 774.4,557.2 773.4,558.3 772.4,557.8 771.4,557.6 770.4,558 769.4,558.4 768.4,559.6 767.4,559.2 766.4,559.3 765.4,559.7 764.4,560.6 763.4,559.7 762.4,559.9 761.4,561 760.4,560.5 759.4,561.7 758.4,561.8 757.4,561.8 756.4,563.6 755.4,562.5 754.4,563.2 753.4,562.5 752.4,562.7 751.4,562.7 750.4,563.1 749.4,563.3 748.4,563.5 747.4,564.1 746.4,564.1 745.4,564.6 744.4,564.3 743.4,565.9 742.4,565 741.4,565.2 740.4,565.5 739.4,565.5 738.4,565.9 737.4,566.5 736.4,566.3 735.4,566.9 734.4,567 733.4,567 732.4,567.2 731.4,567.4 730.4,567.6 729.4,568.8 728.4,568.3 727.4,569.4 726.4,568.7 725.4,568.7 724.4,569.9 723.4,569.7 722.4,569.2 721.4,570.5 720.4,570.7 719.4,570 718.4,571.1 717.4,570.7 716.4,570.8 715.4,571.7 714.4,573 713.4,571.7 712.4,572.1 711.4,571.5 710.4,571.6 709.4,571.9 708.4,573.1 707.4,572.6 706.4,574.3 705.4,573.7 704.4,573.8 703.4,573.1 702.4,574.5 701.4,574.1 700.4,573.6 699.4,575.2 698.4,574.7 697.4,574.8 696.4,574.7 695.4,574.6 694.4,574.9 693.4,575.2 692.4,576.5 691.4,578.2 690.4,576.5 689.4,576.4 688.4,577.3 687.4,576.3 686.4,577.5 685.4,577.6 684.4,577 683.4,577.4 682.4,577.2 681.4,577.6 680.4,578.5 679.4,579.3 678.4,579.6 677.4,578.5 676.4,578.5 675.4,578.8 674.4,579 673.4,579.3 672.4,579.9 671.4,579.9 670.4,580.4 669.4,580.2 668.4,580.1 667.4,580.3 666.4,581.2 665.4,580.8 664.4,581.3 663.4,582.3 662.4,581.1 661.4,581.3 660.4,582.1 659.4,582.8 658.4,582.4 657.4,583.2 656.4,583.2 655.4,582.9 654.4,583.4 653.4,584.1 652.4,584.2 651.4,583.7 650.4,583.7 649.4,586 648.4,584.4 647.4,584.2 646.4,584.5 645.4,585.2 644.4,585.7 643.4,586.1 642.4,585.4 641.4,585.9 640.4,585.8 639.4,586.1 638.4,586 637.4,586.3 636.4,586.3 635.4,587 634.4,587.6 633.4,587.6 632.4,587.7 631.4,587.6 630.4,587.7 629.4,588.2 628.4,588.6 627.4,589.3 626.4,588.6 625.4,588.7 624.4,588.9 623.4,590.1 622.4,589.6 621.4,589.5 620.4,589.6 619.4,592 618.4,591.3 617.4,591.5 616.4,590.6 615.4,590.6 614.4,591.5 613.4,591.7 612.4,591.2 611.4,591.3 610.4,592.2 609.4,592.8 608.4,592.5 607.4,593.6 606.4,593.2 605.4,593 604.4,593.4 603.4,593 602.4,594.3 601.4,594.4 600.4,593.8 599.4,593.9 598.4,595.1 597.4,594.1 596.4,595.2 595.4,594.7 594.4,595.4 593.4,595.8 592.4,595 591.4,596.4 590.4,596.4 589.4,596.5 588.4,595.9 587.4,596.1 586.4,597.3 585.4,596.8 584.4,596.7 583.4,597.3 582.4,598.1 581.4,598.9 580.4,597.5 579.4,597.8 578.4,598.9 577.4,598.2 576.4,598.6 575.4,599.3 574.4,599.2 573.4,599.5 572.4,599.5 571.4,600 570.4,599.7 569.4,599.7 568.4,600.4 567.4,601.4 566.4,601 565.4,600.5 564.4,601.6 563.4,601 562.4,601.6 561.4,602 560.4,601.4 559.4,601.9 558.4,601.9 557.4,602.1 556.4,602.2 555.4,602.5 554.4,603.1 553.4,604.9 552.4,603.5 551.4,603.5 550.4,604.4 549.4,603.8 548.4,604.4 547.4,604.4 546.4,606.9 545.4,604.4 544.4,604.9 543.4,605.2 542.4,605.3 541.4,606.6 540.4,606.5 539.4,605.5 538.4,606 537.4,606.8 536.4,606.5 535.4,607.3 534.4,606.8 533.4,607.1 532.4,607 531.4,608.3 530.4,608.2 529.4,609.4 528.4,608.5 527.4,608 526.4,608.5 525.4,610.3 524.4,609.1 523.4,609.3 522.4,609.4 521.4,609.9 520.4,609.7 519.4,610.4 518.4,610.7 517.4,609.9 516.4,610.3 515.4,611.2 514.4,611.4 513.4,610.9 512.4,611.3 511.4,611.5 510.4,612.6 509.4,613.5 508.4,611.9 507.4,612.6 506.4,612.2 505.4,613.5 504.4,612.6 503.4,613.3 502.4,612.9 501.4,613.5 500.4,613.5 499.4,616.3 498.4,614.2 497.4,614.5 496.4,614.6 495.4,614.4 494.4,616 493.4,614.8 492.4,615.2 491.4,615.8 490.4,615.8 489.4,617.4 488.4,616.8 487.4,616 486.4,618.1 485.4,617 484.4,617.4 483.4,616.7 482.4,619.4 481.4,618 480.4,617.8 479.4,617.5 478.4,617.8 477.4,618.9 476.4,618.3 475.4,618.8 474.4,618.9 473.4,618.9 472.4,619.7 471.4,619.2 470.4,620 469.4,619.7 468.4,620 467.4,619.9 466.4,620 465.4,620.2 464.4,621.4 463.4,621.4 462.4,621.5 461.4,621.2 460.4,622.3 459.4,621.3 458.4,622.9 457.4,622.5 456.4,623.3 455.4,622.5 454.4,623.4 453.4,623.1 452.4,623.7 451.4,623.1 450.4,623.8 449.4,623.6 448.4,624.1 447.4,624.6 446.4,624 445.4,625.8 444.4,625 443.4,625.2 442.4,625.2 441.4,624.9 440.4,625.6 439.4,627.6 438.4,627.2 437.4,625.9 436.4,626.3 435.4,627 434.4,626.5 433.4,627.2 432.4,627.9 431.4,627.3 430.4,628 429.4,628.7 428.4,627.4 427.4,627.9 426.4,628.2 425.4,628.7 424.4,628.7 423.4,629.1 422.4,629.9 421.4,629.2 420.4,629 419.4,629.4 418.4,629.4 417.4,629.6 416.4,629.9 415.4,630.5 414.4,630.9 413.4,631 412.4,631.1 411.4,631.5 410.4,632.1 409.4,631.6 408.4,631.8 407.4,631.8 406.4,633.3 405.4,632.6 404.4,632.3 403.4,633.4 402.4,633 401.4,633.1 400.4,633.2 399.4,634.3 398.4,633.6 397.4,634.5 396.4,633.9 395.4,634.8 394.4,634.1 393.4,635.9 392.4,635.6 391.4,634.7 390.4,635.8 389.4,635.1 388.4,635.3 387.4,636.1 386.4,637.3 385.4,636.4 384.4,638.1 383.4,637.1 382.4,636.7 381.4,637 380.4,637 379.4,638.1 378.4,637.6 377.4,637.5 376.4,637.6 375.4,639.1 374.4,639.4 373.4,638.4 372.4,639.6 371.4,639.3 370.4,639.1 369.4,639.9 368.4,639.4 367.4,639.4 366.4,639.6 365.4,640.8 364.4,640.6 363.4,640.6 362.4,641.4 361.4,642 360.4,641 359.4,642.5 358.4,641.3 357.4,641.3 356.4,642.6 355.4,642 354.4,642 353.4,644.4 352.4,642.6 351.4,644 350.4,642.7 349.4,643.7 348.4,643.3 347.4,643.5 346.4,643.9 345.4,644.6 344.4,644.3 343.4,645.1 342.4,644.5 341.4,645.3 340.4,644.6 339.4,645.4 338.4,645 337.4,645.4 336.4,645.4 335.4,646 334.4,647.1 333.4,646.1 332.4,647.8 331.4,648 330.4,646.5 329.4,647 328.4,648.4 327.4,647.4 326.4,648 325.4,648 324.4,648.2 323.4,649.6 322.4,650.5 321.4,648.3 320.4,649.2 319.4,649.1 318.4,649.3 317.4,649.8 316.4,649.4 315.4,649.6 314.4,649.6 313.4,650.1 312.4,651.2 311.4,652 310.4,650.3 309.4,651.6 308.4,650.8 307.4,652.1 306.4,652.3 305.4,651.3 304.4,653.1 303.4,652.5 302.4,651.9 301.4,652.8 300.4,652.5 299.4,653.1 298.4,653.6 297.4,652.8 296.4,653.8 295.4,653.1 294.4,653.7 293.4,653.9 292.4,653.7 291.4,654.3 290.4,654.2 289.4,655.5 288.4,654.7 287.4,655 286.4,654.9 285.4,655.6 284.4,656.6 283.4,656.6 282.4,656.3 281.4,657.2 280.4,656.7 279.4,656.6 278.4,656.7 277.4,656.7 276.4,657 275.4,657.2 274.4,658.4 273.4,658.9 272.4,657.7 271.4,657.9 270.4,658.6 269.4,658.3 268.4,658.4 267.4,658.4 266.4,658.5 265.4,659.1 264.4,660.8 263.4,659.1 262.4,659.4 261.4,661.3 260.4,659.7 259.4,659.9 258.4,660.6 257.4,660.3 256.4,660.6 255.4,660.9 254.4,661.4 253.4,661.8 252.4,661.2 251.4,663.2 250.4,662.5 249.4,662.1 248.4,661.9 247.4,662 246.4,662.4 245.4,662.6 244.4,662.9 243.4,663.6 242.4,664 241.4,663.1 240.4,663.2 239.4,663.4 238.4,663.7 237.4,663.9 236.4,664.3 235.4,664.4 234.4,664.9 233.4,664.8 232.4,664.8 231.4,665.4 230.4,665.3 229.4,665.3 228.4,665.4 227.4,666.3 226.4,665.8 225.4,666.5 224.4,666.2 223.4,666.7 222.4,666.5 221.4,667.6 220.4,667.3 219.4,667.4 218.4,668.6 217.4,667.3 216.4,667.5 215.4,668.6 214.4,668 213.4,669.3 212.4,668.6 211.4,669.4 210.4,668.6 209.4,669.2 208.4,669.4 207.4,669.8 206.4,669.7 205.4,670.1 204.4,670.5 203.4,669.8 202.4,671.4 201.4,670.2 200.4,670.5 199.4,670.6 198.4,671.2 197.4,671.1 196.4,672.1 195.4,671.1 194.4,671.6 193.4,671.5 192.4,671.6 191.4,671.8 190.4,672.1 189.4,672.8 188.4,672.7 187.4,673 186.4,673.5 185.4,672.7 184.4,673 183.4,673.6 182.4,674.5 181.4,673.7 180.4,673.9 179.4,675 178.4,675.4 177.4,674 176.4,674.5 175.4,675.1 174.4,675.7 173.4,675.5 172.4,675.8 171.4,675.5 170.4,676.2 169.4,675.8 168.4,676 167.4,676.1 166.4,676.2 165.4,675.9" fill="#1fc8d8"/>
<line x1="828.8" y1="520" x2="828.8" y2="688" stroke="#128a98" stroke-width="1.3"/>
<polygon points="828.8,661 829.8,662.9 830.8,659.7 831.8,662.4 832.8,662.3 833.8,663.2 834.8,663.2 835.8,662.6 836.8,662.8 837.8,663.2 838.8,661.3 839.8,663.2 840.8,663.2 840.8,678.7 839.8,677.2 838.8,676.8 837.8,678.8 836.8,676.8 835.8,676.8 834.8,676.8 833.8,679.4 832.8,679.1 831.8,676.8 830.8,676.8 829.8,676.8 828.8,676.8" fill="#12808c"/><polygon points="828.8,662.7 829.8,663.4 830.8,662.7 831.8,662.9 832.8,663.3 833.8,662.5 834.8,663.2 835.8,663 836.8,661.4 837.8,662.7 838.8,663.1 839.8,662.3 840.8,662.6 840.8,676.7 839.8,677.3 838.8,678.2 837.8,676.8 836.8,677 835.8,676.7 834.8,677.8 833.8,677.6 832.8,676.7 831.8,677.4 830.8,677.1 829.8,677 828.8,677.4" fill="#1fc8d8"/>
<line x1="841" y1="444" x2="841" y2="690" stroke="#128a98" stroke-width="1.3"/>
<line x1="841.2" y1="444" x2="841.2" y2="530" stroke="#1fc8d8" stroke-width="1.5"/>
<polygon points="841,521.3 842,522.7 843,518.7 844,520.4 845,519.5 846,518.7 847,516.6 848,517.4 849,516.8 850,514.1 851,515.8 852,512.7 853,511.1 853,527.4 852,527.9 851,534.4 850,528.9 849,529.4 848,531 847,535.5 846,532.2 845,532.5 844,533 843,534 842,535.3 841,536.9" fill="#12808c"/><polygon points="841,524.5 842,522.4 843,521.1 844,519.9 845,519.5 846,517.9 847,518 848,517.5 849,516.1 850,515.8 851,514.2 852,514.3 853,514.3 853,528.2 852,529 851,529.2 850,528.8 849,530 848,529.8 847,531 846,531.2 845,532.5 844,533.7 843,534.1 842,535.5 841,537.5" fill="#1fc8d8"/>
<line x1="853.2" y1="515" x2="853.2" y2="684" stroke="#128a98" stroke-width="1.3"/>
<polygon points="853.2,654.4 854.2,656.2 855.2,654.9 856.2,656.2 857.2,656.2 858.2,656.2 859.2,656.2 860.2,654.3 861.2,656.2 862.2,653.7 863.2,652.1 864.2,654.8 865.2,652.9 865.2,671.4 864.2,669.8 863.2,669.8 862.2,669.8 861.2,669.8 860.2,670.9 859.2,669.8 858.2,669.8 857.2,670.7 856.2,669.8 855.2,669.8 854.2,669.8 853.2,671.5" fill="#12808c"/><polygon points="853.2,656.4 854.2,656 855.2,656.2 856.2,656.2 857.2,656.5 858.2,656.1 859.2,655.8 860.2,655.2 861.2,655.8 862.2,656.5 863.2,656.2 864.2,654.5 865.2,655 865.2,670 864.2,669.9 863.2,669.7 862.2,669.7 861.2,670.1 860.2,669.7 859.2,669.8 858.2,671.4 857.2,669.8 856.2,670 855.2,670.1 854.2,670.2 853.2,671" fill="#1fc8d8"/>
<line x1="865.4" y1="432" x2="865.4" y2="684" stroke="#128a98" stroke-width="1.3"/>
<line x1="865.6" y1="432" x2="865.6" y2="520" stroke="#1fc8d8" stroke-width="1.5"/>
<polygon points="865.4,516.3 866.4,510.4 867.4,512.3 868.4,513.3 869.4,512 870.4,510.9 871.4,508 872.4,508.8 873.4,507.8 874.4,506.3 875.4,504.9 876.4,505.1 877.4,504.1 877.4,523 876.4,519.6 875.4,522.9 874.4,523.2 873.4,520.4 872.4,522.2 871.4,522.4 870.4,523.5 869.4,524.6 868.4,526.3 867.4,527.3 866.4,529 865.4,534.2" fill="#12808c"/><polygon points="865.4,518.2 866.4,516.5 867.4,513.2 868.4,513.3 869.4,511.1 870.4,510.4 871.4,509.4 872.4,508.7 873.4,507.2 874.4,505.3 875.4,505.2 876.4,505.2 877.4,501.9 877.4,517 876.4,518.1 875.4,518.7 874.4,519.3 873.4,522 872.4,523.1 871.4,522.4 870.4,525 869.4,525.2 868.4,526.6 867.4,527.7 866.4,529.5 865.4,531" fill="#1fc8d8"/>
<line x1="877.4" y1="500" x2="877.4" y2="684" stroke="#128a98" stroke-width="1.3"/>
<polygon points="877.4,656.8 878.4,657.3 879.4,657.3 880.4,653.9 881.4,658.6 882.4,659 883.4,659.3 884.4,658.2 885.4,660 886.4,660.2 887.4,655.7 888.4,658.5 889.4,656.7 890.4,661 891.4,658.5 892.4,661.3 893.4,657.8 894.4,657.5 895.4,661.5 896.4,661.2 897.4,661.5 898.4,661.5 899.4,661.4 900.4,661.2 901.4,660.9 902.4,659.6 903.4,661 904.4,660.9 905.4,660.8 906.4,660.6 907.4,660.4 908.4,660.2 909.4,660 910.4,659.7 911.4,658.8 912.4,657.6 913.4,658.4 914.4,658.9 915.4,658.7 916.4,658.5 917.4,655.4 918.4,657.8 919.4,657.8 920.4,657.6 921.4,657.3 922.4,657.1 923.4,652 924.4,656.5 925.4,652 926.4,653.3 927.4,653.5 928.4,656.1 929.4,655.9 930.4,655.8 931.4,655.7 932.4,655.6 933.4,655.5 934.4,655.4 935.4,655.3 936.4,655.3 937.4,655.3 938.4,653.7 939.4,655.3 940.4,655.3 941.4,653.3 942.4,655.4 943.4,655.5 944.4,655.3 945.4,655.6 946.4,655.8 947.4,655.9 948.4,656 949.4,649.6 950.4,655.5 951.4,656.5 952.4,655.9 953.4,656.9 954.4,657.1 955.4,657.4 956.4,657.1 957.4,657.8 958.4,658.1 959.4,658.3 960.4,658.6 961.4,654.3 962.4,658 963.4,659.4 964.4,657.3 965.4,659.9 966.4,660.2 967.4,660.4 968.4,660.7 969.4,659.3 970.4,661.2 971.4,661.4 972.4,661.2 973.4,658.3 974.4,656.3 975.4,657 976.4,662.6 977.4,658.8 978.4,662 979.4,663.1 980.4,661.2 981.4,661.3 982.4,663.6 983.4,663.7 984.4,663.8 985.4,663.9 986.4,659.2 987.4,661.1 988.4,664.1 989.4,664.2 990.4,664.2 991.4,664.2 992.4,664.2 993.4,664.2 994.4,664.1 995.4,663.8 996.4,662.9 997.4,664 998.4,662.1 999.4,660.9 1000.4,659.4 1001.4,663.5 1002.4,662 1003.4,663.2 1004.4,663 1005.4,660.8 1006.4,661.9 1007.4,662.5 1008.4,658.3 1009.4,661.3 1010.4,661.8 1011.4,661.6 1012.4,661.4 1013.4,656.6 1014.4,660.6 1015.4,657.4 1016.4,660.4 1017.4,656.8 1018.4,656.9 1019.4,659.7 1020.4,659.5 1021.4,658.7 1022.4,654.4 1023.4,658.7 1024.4,657.8 1025.4,658.3 1026.4,657.6 1027.4,657.9 1028.4,656.1 1029.4,657.5 1030.4,657.3 1031.4,656.2 1032.4,656.9 1033.4,653.2 1034.4,655.2 1035.4,656.5 1036.4,656.4 1037.4,655.9 1038.4,656.1 1039.4,656.1 1040.4,656 1041.4,655.9 1042.4,655.9 1043.4,655.8 1044.4,655.8 1045.4,655.8 1046.4,653.2 1047.4,655.8 1048.4,655.3 1049.4,653.8 1050.4,650.5 1051.4,652.2 1052.4,656.1 1053.4,656.2 1054.4,656.3 1055.4,656 1056.4,656.6 1057.4,654.5 1058.4,656.6 1059.4,655.3 1060.4,657.2 1061.4,657.4 1062.4,657.6 1063.4,656.2 1064.4,658 1065.4,658.2 1066.4,656.2 1067.4,658.6 1068.4,657.3 1069.4,659 1070.4,655.3 1071.4,659.4 1072.4,659.7 1073.4,659.9 1074.4,660.1 1075.4,660.3 1076.4,660.3 1077.4,660.5 1078.4,661 1079.4,660.3 1080.4,661.4 1081.4,661.5 1082.4,661.7 1083.4,661.9 1084.4,655.7 1085.4,662.2 1086.4,660.2 1087.4,662.5 1088.4,662.7 1089.4,662.8 1090.4,662.9 1091.4,663 1092.4,660 1093.4,663.2 1094.4,658.8 1095.4,663.3 1096.4,659.7 1097.4,663.4 1098.4,663.4 1099.4,663.4 1100.4,660.4 1101.4,660.5 1102.4,663.3 1103.4,661.3 1104.4,663.2 1105.4,662 1106.4,658 1107.4,662.8 1108.4,662.9 1109.4,661.9 1110.4,662.7 1111.4,662.6 1112.4,659.4 1113.4,662.3 1114.4,662.1 1115.4,662 1116.4,660.6 1117.4,658.9 1118.4,659.5 1119.4,661.3 1120.4,658.1 1121.4,660.9 1122.4,660.7 1123.4,660.3 1124.4,660.3 1125.4,657.3 1126.4,654.9 1127.4,659.7 1128.4,659.5 1129.4,659.3 1130.4,654.5 1131.4,658.3 1132.4,653.9 1133.4,655.6 1134.4,656.4 1135.4,657.3 1136.4,653 1137.4,657.9 1138.4,657.6 1139.4,656.8 1140.4,656.7 1141.4,655.6 1142.4,657.2 1143.4,655.7 1144.4,656.2 1145.4,655.5 1146.4,654.6 1147.4,656.8 1148.4,656.7 1149.4,656.7 1150.4,656.6 1151.4,653.2 1152.4,656.6 1153.4,654.5 1154.4,656.4 1155.4,656.6 1156.4,656.6 1157.4,656.7 1158.4,654.6 1159.4,656.8 1160.4,656.8 1161.4,656.9 1162.4,657 1163.4,657.1 1164.4,656 1165.4,657.1 1166.4,657.4 1167.4,657.6 1168.4,657.7 1169.4,653.2 1170.4,658 1171.4,655.3 1172.4,658.3 1173.4,658.5 1174.4,658.6 1175.4,655.8 1176.4,659 1177.4,655.8 1178.4,658.3 1179.4,659.5 1180.4,659.7 1181.4,658.2 1182.4,660 1183.4,658.4 1184.4,660.4 1185.4,659.6 1186.4,660 1187.4,660.9 1188.4,661.1 1189.4,661.2 1190.4,661.4 1191.4,659.5 1192.4,660.9 1193.4,661.8 1194.4,661.9 1195.4,661.7 1196.4,656.5 1197.4,661.3 1198.4,662.3 1199.4,662.4 1200.4,662.5 1201.4,662.5 1202.4,662.6 1203.4,662.6 1204.4,660.1 1205.4,657.8 1206.4,662.7 1207.4,662.7 1208.4,662.7 1209.4,662.7 1210.4,662.6 1211.4,662.6 1212.4,662.6 1213.4,662.3 1214.4,660.3 1215.4,661.1 1216.4,662.3 1217.4,658.2 1218.4,657.6 1219.4,661.3 1220.4,661.9 1221.4,661.8 1222.4,660.3 1223.4,661.6 1224.4,661.4 1225.4,661.3 1226.4,661.1 1227.4,658.1 1228.4,660.8 1229.4,660.7 1230.4,660.5 1231.4,660 1232.4,660.2 1233.4,660.1 1234.4,659.1 1235.4,657.5 1236.4,656.3 1237.4,656.9 1238.4,659.3 1239.4,659.1 1240.4,659 1241.4,658.8 1242.4,658.7 1243.4,658.5 1244.4,658 1245.4,656.8 1246.4,658.2 1247.4,658 1248.4,656.4 1249.4,657.3 1249.4,671.4 1248.4,671.5 1247.4,673.7 1246.4,671.8 1245.4,671.9 1244.4,672 1243.4,672.1 1242.4,673.1 1241.4,672.4 1240.4,672.6 1239.4,672.7 1238.4,672.9 1237.4,677.1 1236.4,673.2 1235.4,674.5 1234.4,677.5 1233.4,675.5 1232.4,673.8 1231.4,675.8 1230.4,674.1 1229.4,674.3 1228.4,674.4 1227.4,677 1226.4,676.9 1225.4,684.8 1224.4,676.7 1223.4,675.7 1222.4,675.3 1221.4,678.9 1220.4,675.5 1219.4,675.6 1218.4,675.7 1217.4,676.8 1216.4,678 1215.4,676 1214.4,677.7 1213.4,676.1 1212.4,676.2 1211.4,680.2 1210.4,676.9 1209.4,676.3 1208.4,676.3 1207.4,680.1 1206.4,677.4 1205.4,676.3 1204.4,680 1203.4,678.7 1202.4,679.9 1201.4,676.1 1200.4,676.1 1199.4,676.6 1198.4,675.9 1197.4,675.8 1196.4,675.7 1195.4,675.6 1194.4,675.5 1193.4,678.5 1192.4,675.8 1191.4,675.1 1190.4,675 1189.4,677.4 1188.4,675.7 1187.4,674.5 1186.4,674.3 1185.4,675 1184.4,676.7 1183.4,673.8 1182.4,673.6 1181.4,673.6 1180.4,673.3 1179.4,675.3 1178.4,674 1177.4,672.8 1176.4,673.1 1175.4,675.4 1174.4,672.2 1173.4,672.1 1172.4,671.9 1171.4,671.8 1170.4,675.4 1169.4,672.8 1168.4,671.3 1167.4,671.2 1166.4,676.1 1165.4,670.9 1164.4,671.9 1163.4,670.7 1162.4,670.6 1161.4,671.2 1160.4,670.5 1159.4,675.2 1158.4,670.3 1157.4,671.8 1156.4,670.2 1155.4,670.2 1154.4,670.2 1153.4,671.6 1152.4,674.5 1151.4,671.1 1150.4,673.9 1149.4,672.4 1148.4,670.3 1147.4,670.4 1146.4,674.2 1145.4,671.2 1144.4,671.4 1143.4,671.1 1142.4,672.7 1141.4,673.2 1140.4,671.1 1139.4,671.2 1138.4,671.4 1137.4,672.9 1136.4,671.7 1135.4,676.6 1134.4,672.4 1133.4,672.2 1132.4,673.2 1131.4,672.5 1130.4,673.6 1129.4,672.9 1128.4,673.1 1127.4,676.1 1126.4,673.5 1125.4,673.7 1124.4,673.9 1123.4,680 1122.4,677 1121.4,674.5 1120.4,674.7 1119.4,676.8 1118.4,675.1 1117.4,675.2 1116.4,682.5 1115.4,677 1114.4,675.7 1113.4,675.9 1112.4,676 1111.4,676.5 1110.4,679.4 1109.4,676.4 1108.4,676.5 1107.4,679.8 1106.4,676.7 1105.4,676.8 1104.4,680 1103.4,678.3 1102.4,676.9 1101.4,682.8 1100.4,677 1099.4,679.2 1098.4,682.6 1097.4,677 1096.4,676.9 1095.4,676.9 1094.4,682.9 1093.4,680.7 1092.4,676.7 1091.4,676.6 1090.4,676.5 1089.4,676.4 1088.4,676.3 1087.4,676.1 1086.4,679.3 1085.4,675.8 1084.4,678.3 1083.4,675.8 1082.4,675.3 1081.4,680.1 1080.4,675 1079.4,676.4 1078.4,674.6 1077.4,674.4 1076.4,674.1 1075.4,673.9 1074.4,675.9 1073.4,677.7 1072.4,675.9 1071.4,673 1070.4,672.8 1069.4,675.9 1068.4,673.7 1067.4,672.2 1066.4,672 1065.4,671.8 1064.4,671.6 1063.4,676.5 1062.4,673 1061.4,671 1060.4,670.8 1059.4,672.3 1058.4,670.5 1057.4,672.2 1056.4,670.2 1055.4,671.9 1054.4,669.9 1053.4,669.8 1052.4,669.7 1051.4,671.7 1050.4,670.2 1049.4,669.5 1048.4,669.5 1047.4,669.4 1046.4,670.4 1045.4,671.7 1044.4,669.4 1043.4,669.9 1042.4,669.5 1041.4,669.5 1040.4,669.6 1039.4,671.4 1038.4,671.7 1037.4,671 1036.4,670 1035.4,670.1 1034.4,673.5 1033.4,670.4 1032.4,670.5 1031.4,671 1030.4,670.9 1029.4,671.1 1028.4,671.4 1027.4,671.5 1026.4,673.5 1025.4,671.9 1024.4,672.1 1023.4,672.7 1022.4,675.7 1021.4,672.8 1020.4,673.1 1019.4,673.8 1018.4,674 1017.4,673.8 1016.4,674 1015.4,678.6 1014.4,674.5 1013.4,674.8 1012.4,675 1011.4,680.2 1010.4,675.4 1009.4,675.8 1008.4,675.9 1007.4,680.5 1006.4,676.3 1005.4,677.7 1004.4,676.6 1003.4,676.8 1002.4,680.4 1001.4,678.9 1000.4,681.6 999.4,679.1 998.4,679.2 997.4,677.6 996.4,677.6 995.4,677.7 994.4,678.1 993.4,677.8 992.4,677.8 991.4,680.8 990.4,680.5 989.4,681.4 988.4,677.7 987.4,677.7 986.4,679.4 985.4,679 984.4,677.4 983.4,677.3 982.4,678.2 981.4,678.1 980.4,677.2 979.4,676.7 978.4,676.9 977.4,681.3 976.4,676.2 975.4,676.5 974.4,675.7 973.4,675.5 972.4,675.3 971.4,677 970.4,676.3 969.4,679.2 968.4,674.4 967.4,674 966.4,673.8 965.4,673.5 964.4,673.9 963.4,678.2 962.4,677.2 961.4,672.4 960.4,672.2 959.4,671.9 958.4,671.7 957.4,671.4 956.4,671.2 955.4,671 954.4,673.5 953.4,670.5 952.4,670.5 951.4,670.1 950.4,673.3 949.4,671.3 948.4,669.6 947.4,674.7 946.4,674.5 945.4,669.6 944.4,669.1 943.4,669.1 942.4,669 941.4,668.9 940.4,671.9 939.4,668.9 938.4,668.9 937.4,668.9 936.4,668.9 935.4,671.8 934.4,669 933.4,669.1 932.4,669.2 931.4,670.6 930.4,669.4 929.4,672.7 928.4,669.7 927.4,669.8 926.4,670.5 925.4,670.1 924.4,671.8 923.4,670.5 922.4,670.7 921.4,672.5 920.4,674.4 919.4,675 918.4,678.3 917.4,672.9 916.4,672.1 915.4,675.3 914.4,673.7 913.4,674.9 912.4,673 911.4,677.2 910.4,677 909.4,674.8 908.4,677.9 907.4,674 906.4,677.1 905.4,674.4 904.4,674.5 903.4,674.6 902.4,674.8 901.4,674.9 900.4,675 899.4,675 898.4,676.8 897.4,675.1 896.4,676.8 895.4,675.1 894.4,675.5 893.4,675 892.4,678.4 891.4,674.8 890.4,678.4 889.4,674.5 888.4,677.5 887.4,674.1 886.4,675.7 885.4,675 884.4,676.5 883.4,672.9 882.4,672.6 881.4,672.2 880.4,675.9 879.4,671.4 878.4,674.2 877.4,672.2" fill="#12808c"/><polygon points="877.4,656.7 878.4,656.4 879.4,657.4 880.4,657.1 881.4,658.6 882.4,658.7 883.4,659.5 884.4,659.7 885.4,658.7 886.4,659.2 887.4,660.2 888.4,660.4 889.4,660.3 890.4,661.3 891.4,659.9 892.4,660.2 893.4,661.1 894.4,661.5 895.4,661.1 896.4,660.7 897.4,661.6 898.4,661.6 899.4,661.4 900.4,661.4 901.4,660.4 902.4,660.7 903.4,660.3 904.4,660.2 905.4,660.9 906.4,659.6 907.4,660.4 908.4,659.7 909.4,659.5 910.4,659.4 911.4,658.4 912.4,658.8 913.4,659.4 914.4,658.6 915.4,658.8 916.4,658.5 917.4,658.5 918.4,657.8 919.4,656.3 920.4,657.8 921.4,657.5 922.4,656.5 923.4,657.2 924.4,656.9 925.4,656.1 926.4,655.8 927.4,655.9 928.4,655.5 929.4,655.6 930.4,655.9 931.4,656 932.4,654.5 933.4,655.7 934.4,655.4 935.4,654.9 936.4,655.5 937.4,655.3 938.4,654.9 939.4,655.6 940.4,655.5 941.4,654.6 942.4,655.7 943.4,655.4 944.4,655.8 945.4,655.6 946.4,655.9 947.4,654.4 948.4,655 949.4,655.5 950.4,656.3 951.4,656.8 952.4,656.9 953.4,656.3 954.4,656.6 955.4,656.7 956.4,657.6 957.4,657.6 958.4,657.2 959.4,657.5 960.4,658 961.4,659 962.4,659.1 963.4,659.5 964.4,658.2 965.4,660 966.4,660.4 967.4,658.6 968.4,659.9 969.4,661.1 970.4,660.6 971.4,661.5 972.4,661.1 973.4,662 974.4,662.1 975.4,662.4 976.4,662.7 977.4,662.8 978.4,662.8 979.4,662.2 980.4,663.1 981.4,663.5 982.4,663.3 983.4,663.9 984.4,663.7 985.4,663.5 986.4,663.1 987.4,664 988.4,663.5 989.4,662.8 990.4,663.5 991.4,663.8 992.4,663.4 993.4,663.3 994.4,664.2 995.4,664 996.4,663.4 997.4,663.3 998.4,663.9 999.4,662.8 1000.4,663.4 1001.4,663.5 1002.4,662.1 1003.4,662.4 1004.4,663 1005.4,663 1006.4,662.6 1007.4,662.6 1008.4,661.9 1009.4,662.2 1010.4,661.1 1011.4,661.5 1012.4,661.4 1013.4,660.7 1014.4,660.9 1015.4,660.4 1016.4,660.4 1017.4,659.5 1018.4,658.6 1019.4,659.9 1020.4,659.2 1021.4,658.4 1022.4,658.6 1023.4,658.5 1024.4,658.2 1025.4,658.1 1026.4,657 1027.4,657.4 1028.4,657.3 1029.4,655.9 1030.4,656.7 1031.4,656.4 1032.4,655.8 1033.4,656.1 1034.4,655.9 1035.4,655.2 1036.4,656 1037.4,656.4 1038.4,655.8 1039.4,656 1040.4,655.7 1041.4,654.8 1042.4,655.4 1043.4,656.1 1044.4,655.8 1045.4,655.5 1046.4,655.3 1047.4,655.3 1048.4,655.4 1049.4,655.8 1050.4,656.2 1051.4,655.4 1052.4,656.4 1053.4,655.9 1054.4,655.2 1055.4,656.7 1056.4,656.8 1057.4,656.3 1058.4,656.9 1059.4,656.5 1060.4,657 1061.4,655.7 1062.4,657 1063.4,657 1064.4,657 1065.4,657.8 1066.4,658.4 1067.4,658.4 1068.4,658.7 1069.4,657.9 1070.4,658.8 1071.4,658.8 1072.4,659 1073.4,660 1074.4,660.2 1075.4,660.3 1076.4,660.4 1077.4,660.3 1078.4,659.7 1079.4,661.3 1080.4,661.3 1081.4,661.7 1082.4,660.6 1083.4,661.7 1084.4,661.8 1085.4,662.1 1086.4,661.5 1087.4,662 1088.4,662.7 1089.4,662.9 1090.4,662.7 1091.4,662.1 1092.4,663 1093.4,662.7 1094.4,661.8 1095.4,663.6 1096.4,662.4 1097.4,663.1 1098.4,663.4 1099.4,663.2 1100.4,663.2 1101.4,663.4 1102.4,663.1 1103.4,662.3 1104.4,663.3 1105.4,661.8 1106.4,663.2 1107.4,662.6 1108.4,662.2 1109.4,662.6 1110.4,662.6 1111.4,662.8 1112.4,662.1 1113.4,661.1 1114.4,662 1115.4,661.6 1116.4,661 1117.4,661.4 1118.4,661.4 1119.4,661.2 1120.4,661.1 1121.4,660.6 1122.4,660.7 1123.4,660 1124.4,660.2 1125.4,659.3 1126.4,659.7 1127.4,659 1128.4,658.1 1129.4,658.9 1130.4,658.6 1131.4,657.8 1132.4,658.6 1133.4,658.2 1134.4,657 1135.4,658.4 1136.4,657.9 1137.4,658.2 1138.4,655.8 1139.4,657.8 1140.4,657.1 1141.4,656.6 1142.4,657.2 1143.4,656 1144.4,657.1 1145.4,656.5 1146.4,656.5 1147.4,656.6 1148.4,656.6 1149.4,656.9 1150.4,656.3 1151.4,656.3 1152.4,654.5 1153.4,656.8 1154.4,656.6 1155.4,656.3 1156.4,656.9 1157.4,656.7 1158.4,655.8 1159.4,655.8 1160.4,656.9 1161.4,657.1 1162.4,655.1 1163.4,655.6 1164.4,657.3 1165.4,657.6 1166.4,657.2 1167.4,656.8 1168.4,657.5 1169.4,657.9 1170.4,657.9 1171.4,658.3 1172.4,657.8 1173.4,658.3 1174.4,658.2 1175.4,658.5 1176.4,659.1 1177.4,658.5 1178.4,659.2 1179.4,659.5 1180.4,659.6 1181.4,659.6 1182.4,660 1183.4,659.9 1184.4,660.6 1185.4,660 1186.4,660.9 1187.4,660.4 1188.4,660.9 1189.4,660.9 1190.4,661.6 1191.4,660.8 1192.4,660.7 1193.4,660.5 1194.4,661.9 1195.4,661.9 1196.4,662.3 1197.4,662.1 1198.4,660.2 1199.4,661.8 1200.4,662.7 1201.4,662.8 1202.4,661.9 1203.4,661.9 1204.4,662.4 1205.4,662.7 1206.4,662.6 1207.4,662.3 1208.4,662 1209.4,662.6 1210.4,661.7 1211.4,662.2 1212.4,661.9 1213.4,660.4 1214.4,662.1 1215.4,662.3 1216.4,662.1 1217.4,661.5 1218.4,662.1 1219.4,662.2 1220.4,661.4 1221.4,661.8 1222.4,661.6 1223.4,661.4 1224.4,660.8 1225.4,661.4 1226.4,660.2 1227.4,660.7 1228.4,660.4 1229.4,660.3 1230.4,660.5 1231.4,660.6 1232.4,660.3 1233.4,660.3 1234.4,659.7 1235.4,659.6 1236.4,658.2 1237.4,659.1 1238.4,659.1 1239.4,657.8 1240.4,657.3 1241.4,659.1 1242.4,658.8 1243.4,658 1244.4,657.8 1245.4,658.4 1246.4,657.8 1247.4,658 1248.4,657.1 1249.4,657.6 1249.4,672.6 1248.4,672.4 1247.4,671.6 1246.4,671.5 1245.4,672.9 1244.4,673.1 1243.4,673 1242.4,672.1 1241.4,673 1240.4,673.4 1239.4,673.9 1238.4,673.5 1237.4,673.5 1236.4,674 1235.4,673.4 1234.4,673.6 1233.4,673.7 1232.4,673.9 1231.4,674.1 1230.4,673.9 1229.4,674.6 1228.4,676.3 1227.4,675.8 1226.4,674.5 1225.4,675.1 1224.4,674.7 1223.4,675 1222.4,675.6 1221.4,675.3 1220.4,675.5 1219.4,675.5 1218.4,675.9 1217.4,676.2 1216.4,675.6 1215.4,676.6 1214.4,675.9 1213.4,676.1 1212.4,676.5 1211.4,677 1210.4,676.1 1209.4,677.5 1208.4,676.3 1207.4,677.6 1206.4,676.5 1205.4,676.2 1204.4,676.1 1203.4,676.3 1202.4,677.4 1201.4,677.6 1200.4,676.2 1199.4,677.3 1198.4,676.8 1197.4,675.7 1196.4,676.2 1195.4,676.3 1194.4,675.9 1193.4,676.7 1192.4,675.2 1191.4,676.3 1190.4,675.2 1189.4,675.3 1188.4,675.8 1187.4,675.6 1186.4,674.2 1185.4,674.1 1184.4,674.5 1183.4,674.6 1182.4,674.3 1181.4,673.6 1180.4,674.5 1179.4,673 1178.4,673.3 1177.4,672.6 1176.4,673.1 1175.4,672.9 1174.4,672.2 1173.4,671.9 1172.4,672.5 1171.4,671.8 1170.4,671.6 1169.4,673.3 1168.4,672.3 1167.4,673.2 1166.4,670.9 1165.4,671.4 1164.4,671.1 1163.4,671.6 1162.4,671.5 1161.4,670.3 1160.4,670.3 1159.4,671 1158.4,670.4 1157.4,670.8 1156.4,670 1155.4,670.4 1154.4,670.4 1153.4,670.2 1152.4,670 1151.4,670.7 1150.4,670.2 1149.4,670.7 1148.4,670.9 1147.4,671.1 1146.4,671.1 1145.4,670.3 1144.4,671.9 1143.4,671.3 1142.4,671.2 1141.4,671.8 1140.4,670.8 1139.4,671.4 1138.4,671.1 1137.4,671.3 1136.4,671.7 1135.4,672 1134.4,672.1 1133.4,672.2 1132.4,672.2 1131.4,672.4 1130.4,673.3 1129.4,673 1128.4,673.7 1127.4,673.5 1126.4,673.8 1125.4,673.8 1124.4,674.7 1123.4,674.6 1122.4,674.4 1121.4,674.9 1120.4,675.1 1119.4,674.9 1118.4,675.9 1117.4,675.3 1116.4,675.3 1115.4,676 1114.4,675.5 1113.4,675.9 1112.4,675.9 1111.4,676.5 1110.4,676.3 1109.4,676.4 1108.4,677.1 1107.4,676.4 1106.4,677.1 1105.4,676.7 1104.4,676.6 1103.4,677 1102.4,676.8 1101.4,678.1 1100.4,677.6 1099.4,677.9 1098.4,678.4 1097.4,678.2 1096.4,678 1095.4,676.8 1094.4,677 1093.4,678 1092.4,676.8 1091.4,677.2 1090.4,676.7 1089.4,676.8 1088.4,676 1087.4,676 1086.4,676.2 1085.4,676.2 1084.4,675.4 1083.4,676.4 1082.4,675.5 1081.4,675.7 1080.4,676.5 1079.4,675.6 1078.4,674.3 1077.4,674.5 1076.4,674.2 1075.4,673.7 1074.4,673.9 1073.4,674 1072.4,673.1 1071.4,673.2 1070.4,673.8 1069.4,672.8 1068.4,672.1 1067.4,672.1 1066.4,672.4 1065.4,671.7 1064.4,671.7 1063.4,671.2 1062.4,671.1 1061.4,671 1060.4,671.7 1059.4,671 1058.4,670.9 1057.4,670.8 1056.4,671.1 1055.4,670.1 1054.4,670.2 1053.4,670.3 1052.4,669.9 1051.4,669.9 1050.4,670.1 1049.4,669.4 1048.4,670 1047.4,670.1 1046.4,669.3 1045.4,670.2 1044.4,669.2 1043.4,670.3 1042.4,669.5 1041.4,669.7 1040.4,669.7 1039.4,669.6 1038.4,670.2 1037.4,670.5 1036.4,669.7 1035.4,670.8 1034.4,670.3 1033.4,670.3 1032.4,671 1031.4,670.6 1030.4,670.7 1029.4,671.4 1028.4,671.1 1027.4,671.4 1026.4,672.2 1025.4,671.8 1024.4,673.2 1023.4,672.1 1022.4,672.9 1021.4,673.4 1020.4,673 1019.4,673.9 1018.4,674.7 1017.4,674.8 1016.4,673.9 1015.4,674 1014.4,674.6 1013.4,674.7 1012.4,674.8 1011.4,675.4 1010.4,677.1 1009.4,676.2 1008.4,676.7 1007.4,676.5 1006.4,677 1005.4,677.7 1004.4,676.6 1003.4,677.2 1002.4,677.3 1001.4,677.5 1000.4,677.7 999.4,677.4 998.4,678 997.4,678.4 996.4,678.3 995.4,678.3 994.4,677.8 993.4,677.7 992.4,678.3 991.4,677.8 990.4,677.7 989.4,678.9 988.4,678.3 987.4,677.5 986.4,677.5 985.4,677.8 984.4,678.2 983.4,677.5 982.4,677.3 981.4,677.1 980.4,677 979.4,676.6 978.4,676.6 977.4,676.9 976.4,676.5 975.4,676.4 974.4,676.4 973.4,675.4 972.4,675.2 971.4,675.8 970.4,674.8 969.4,674.9 968.4,674.5 967.4,674.9 966.4,673.7 965.4,673.5 964.4,673.8 963.4,674.6 962.4,672.8 961.4,672.2 960.4,673.4 959.4,672 958.4,672.8 957.4,673 956.4,671.7 955.4,670.9 954.4,671 953.4,671.6 952.4,671.4 951.4,670.4 950.4,669.9 949.4,669.5 948.4,669.6 947.4,669.8 946.4,670 945.4,669 944.4,668.9 943.4,669.7 942.4,668.9 941.4,669.3 940.4,669.8 939.4,670.1 938.4,669.1 937.4,669.9 936.4,669.7 935.4,669.2 934.4,668.9 933.4,668.8 932.4,670.7 931.4,669.4 930.4,669.3 929.4,669.3 928.4,669.6 927.4,670 926.4,669.8 925.4,671.6 924.4,670.4 923.4,671.5 922.4,670.5 921.4,671.3 920.4,671.1 919.4,672.1 918.4,672 917.4,673 916.4,672.3 915.4,673.2 914.4,672.5 913.4,673.5 912.4,672.9 911.4,673.5 910.4,673.5 909.4,673.5 908.4,674 907.4,673.9 906.4,674.7 905.4,675.2 904.4,674.5 903.4,674.6 902.4,674.8 901.4,674.7 900.4,675.6 899.4,674.8 898.4,674.9 897.4,676 896.4,675 895.4,676.2 894.4,675 893.4,674.9 892.4,675 891.4,675 890.4,675.8 889.4,675.2 888.4,674.1 887.4,674.8 886.4,674.2 885.4,673.4 884.4,673.8 883.4,673.3 882.4,673.3 881.4,672.4 880.4,671.5 879.4,671.4 878.4,671.5 877.4,671.9" fill="#1fc8d8"/>
<polygon points="841.5,664.1 842.5,664.3 843.5,664.7 844.5,664.3 845.5,664.6 846.5,664.7 847.5,664.3 848.5,664.6 849.5,664.6 850.5,664.1 851.5,664.3 852.5,664.4 852.5,667.9 851.5,667.8 850.5,668.2 849.5,667.8 848.5,668.8 847.5,667.8 846.5,667.8 845.5,667.3 844.5,667.6 843.5,667.7 842.5,667.8 841.5,667.5" fill="#e8234f"/>
<polygon points="865.9,663.9 866.9,664 867.9,664.2 868.9,664.2 869.9,663.8 870.9,664.3 871.9,664.4 872.9,664.1 873.9,664.3 874.9,664.5 875.9,664 876.9,664 876.9,668.4 875.9,668.4 874.9,667.5 873.9,668.2 872.9,667.5 871.9,667.3 870.9,667.8 869.9,667.4 868.9,667.3 867.9,667.5 866.9,667.6 865.9,667.9" fill="#e8234f"/>
<path d="M45,661.3 L46,661.1 L47,661.2 L48,661.4 L49,661.2 L50,660.7 L51,661 L52,660.5 L53,660.8 L54,660.7 L55,661 L56,661.1 L57,660.8 L58,660.9 L59,661 L60,661 L61,661 L62,660.5 L63,660.9 L64,661.2 L65,661 L66,660.7 L67,660.9 L68,661 L69,660.8 L70,661.1 L71,660.8 L72,660.9 L73,661 L74,661.4 L75,660.9 L76,660.9 L77,661.1 L78,660.9 L79,661 L80,660.5 L81,661.1 L82,661 L83,660.7 L84,661.3 L85,660.9 L86,661 L87,660.7 L88,660.7 L89,660.9 L90,660.7 L91,661.1 L92,661.2 L93,660.9 L94,660.7 L95,660.9 L96,660.8 L97,661 L98,661 L99,660.9 L100,661 L101,661.2 L102,661.3 L103,660.9 L104,661.1 L105,660.9 L106,660.8 L107,661.2 L108,661.1 L109,661 L110,661.1 L111,661 L112,660.8 L113,661.3 L114,661.2 L115,661 L116,661.2 L117,661.2 L118,661 L119,661.1 L120,660.9 L121,661.1 L122,660.9 L123,661.5 L124,660.9 L125,661.1 L126,661.1 L127,660.9 L128,661.2 L129,661 L130,660.9 L131,661 L132,660.8 L133,661.2 L134,661.1 L135,661.2 L136,660.7 L137,661 L138,660.8 L139,661 L140,661.2 L141,661 L142,661 L143,661.2 L144,661.2 L145,661.4 L146,660.6 L147,661.1 L148,660.9 L149,660.8 L150,661 L151,660.8 L152,660.5 L153,660.8 L154,660.9 L155,661.4 L156,660.8 L157,660.8 L158,660.6 L159,660.9 L160,660.9 L161,661 L162,660.7 L163,660.8 L164,660.5 L165,661 L166,660.6 L167,660.1 L168,660.7 L169,660.4 L170,660.1 L171,659.9 L172,659.5 L173,659.7 L174,659.1 L175,659.4 L176,658.9 L177,658.3 L178,658.6 L179,658.7 L180,658 L181,658.1 L182,657.6 L183,657.3 L184,656.7 L185,657.3 L186,656.8 L187,656.7 L188,656.2 L189,656.1 L190,656.3 L191,655.8 L192,655.6 L193,655.2 L194,655.3 L195,655.2 L196,654.7 L197,654.6 L198,654.2 L199,654.5 L200,653.9 L201,653.8 L202,654 L203,653.4 L204,652.9 L205,652.8 L206,652.8 L207,653 L208,652.5 L209,652.2 L210,652.2 L211,652.1 L212,651.5 L213,651.7 L214,651.4 L215,651.1 L216,650.3 L217,650.7 L218,650.7 L219,650.2 L220,650.5 L221,649.8 L222,649.4 L223,649.5 L224,649.3 L225,649.2 L226,648.8 L227,648.9 L228,648.3 L229,648.2 L230,647.8 L231,647.6 L232,647.6 L233,647.3 L234,647.1 L235,647 L236,646.9 L237,646.8 L238,646.6 L239,646.4 L240,646 L241,645.7 L242,645.3 L243,645.3 L244,645 L245,644.6 L246,645.1 L247,644.2 L248,644.5 L249,644.3 L250,643.9 L251,644.3 L252,643.6 L253,643.2 L254,643.5 L255,642.8 L256,642.5 L257,642.4 L258,642.3 L259,642.2 L260,642 L261,641.5 L262,641.6 L263,641.8 L264,641 L265,640.9 L266,640.9 L267,640.8 L268,640.2 L269,640 L270,639.8 L271,640 L272,639.8 L273,638.9 L274,638.7 L275,638.7 L276,638.5 L277,638.6 L278,638.4 L279,638.6 L280,638.1 L281,637.8 L282,637.8 L283,637.2 L284,636.9 L285,637 L286,636.9 L287,636.2 L288,636.5 L289,636.3 L290,635.8 L291,635.8 L292,635.5 L293,635.4 L294,635.3 L295,634.8 L296,635 L297,634.7 L298,634.5 L299,633.7 L300,633.6 L301,633.9 L302,633.4 L303,633.2 L304,633 L305,632.7 L306,632.7 L307,632.4 L308,632.2 L309,632.2 L310,631.7 L311,632 L312,631.1 L313,631.8 L314,630.9 L315,631 L316,630.9 L317,630.5 L318,630.5 L319,630.1 L320,629.6 L321,629.8 L322,629.8 L323,629.2 L324,628.8 L325,628.8 L326,628.8 L327,628.6 L328,628.5 L329,628.2 L330,628 L331,627.3 L332,628 L333,627.3 L334,627.3 L335,626.8 L336,626.7 L337,626.5 L338,626.6 L339,626.4 L340,626 L341,626.1 L342,625.4 L343,625.4 L344,625 L345,625.2 L346,624.7 L347,624.7 L348,624.6 L349,623.7 L350,624.3 L351,623.8 L352,623.4 L353,622.9 L354,623 L355,622.4 L356,622.7 L357,622.5 L358,622.7 L359,622 L360,622.1 L361,621.9 L362,621.9 L363,621.2 L364,621.2 L365,620.6 L366,620.5 L367,620.4 L368,620.3 L369,619.8 L370,619.8 L371,619.8 L372,619.4 L373,619.2 L374,618.9 L375,619.2 L376,619 L377,618.5 L378,618.2 L379,618.4 L380,618 L381,617.5 L382,617.2 L383,617.1 L384,617.5 L385,616.7 L386,617.3 L387,616.5 L388,616.2 L389,616.3 L390,615.8 L391,615.7 L392,615.2 L393,615 L394,614.9 L395,614.9 L396,614.5 L397,614 L398,614.3 L399,614 L400,613.8 L401,613.5 L402,613 L403,613.6 L404,612.9 L405,612.9 L406,612.9 L407,612.7 L408,612.3 L409,612 L410,611.9 L411,611.8 L412,611.6 L413,611.1 L414,611.1 L415,610.9 L416,610.8 L417,610.5 L418,610.5 L419,610.1 L420,610 L421,609.6 L422,609.3 L423,609 L424,609 L425,608.9 L426,608.9 L427,608.4 L428,608.1 L429,607.9 L430,608.1 L431,607.6 L432,607.3 L433,607.4 L434,606.7 L435,606.8 L436,606.6 L437,606.4 L438,606 L439,606.2 L440,606.2 L441,605.3 L442,605.4 L443,605.3 L444,605.5 L445,604.7 L446,604.4 L447,604.4 L448,604.6 L449,604 L450,603.8 L451,604 L452,603 L453,602.7 L454,603.2 L455,602.9 L456,602.3 L457,602.5 L458,602.2 L459,602 L460,601.6 L461,601.5 L462,601.2 L463,601.2 L464,600.9 L465,601.1 L466,600.7 L467,600.1 L468,600.3 L469,600.3 L470,599.8 L471,599.8 L472,599.4 L473,599.3 L474,598.8 L475,598.9 L476,598.3 L477,598.6 L478,597.9 L479,597.5 L480,597.9 L481,597.5 L482,597.4 L483,597.3 L484,597 L485,596.6 L486,596.6 L487,596.4 L488,596.3 L489,596.4 L490,595.6 L491,595.6 L492,595.5 L493,595.1 L494,594.7 L495,594.6 L496,594.8 L497,594.3 L498,594.3 L499,593.8 L500,593.8 L501,593.4 L502,593.2 L503,593.2 L504,593 L505,593 L506,592.2 L507,592.4 L508,592.5 L509,592.2 L510,591.7 L511,591.4 L512,591.2 L513,591.2 L514,591 L515,590.8 L516,590.7 L517,590.1 L518,589.9 L519,589.7 L520,589.5 L521,589.5 L522,589.4 L523,589.6 L524,589 L525,588.7 L526,588.8 L527,588.2 L528,588.2 L529,588.1 L530,587.9 L531,587.6 L532,587.2 L533,586.9 L534,586.9 L535,586.6 L536,586.7 L537,586.3 L538,586.2 L539,585.6 L540,585.9 L541,585.3 L542,585 L543,584.8 L544,584.8 L545,584.9 L546,584.6 L547,584.1 L548,584.1 L549,583.9 L550,583.4 L551,583.3 L552,582.9 L553,582.9 L554,582.3 L555,582.5 L556,582.3 L557,582.1 L558,581.9 L559,582.1 L560,581.6 L561,581.5 L562,581.4 L563,581.3 L564,581 L565,580.6 L566,580.3 L567,580.1 L568,580 L569,579.9 L570,579.7 L571,579.7 L572,579.3 L573,579.4 L574,579.1 L575,578.6 L576,578.6 L577,577.7 L578,578.3 L579,578 L580,577.7 L581,577.1 L582,577.8 L583,577 L584,576.8 L585,576.9 L586,576.4 L587,576.1 L588,576.2 L589,575.6 L590,575.8 L591,575.5 L592,575.5 L593,574.8 L594,575.1 L595,574.7 L596,574.9 L597,574.1 L598,574.4 L599,574 L600,573.8 L601,573.3 L602,573.4 L603,573.2 L604,572.7 L605,572.4 L606,572.3 L607,572.5 L608,572.1 L609,572 L610,571.7 L611,571.5 L612,571.3 L613,570.9 L614,571.1 L615,570.7 L616,570.5 L617,569.9 L618,570.1 L619,569.7 L620,569.5 L621,569.6 L622,569 L623,569 L624,568.9 L625,568.9 L626,568.3 L627,568.3 L628,568.1 L629,567.6 L630,567.2 L631,567 L632,567.3 L633,567 L634,566.5 L635,566.5 L636,566.3 L637,566.1 L638,566 L639,566.3 L640,565.4 L641,565.4 L642,565 L643,564.9 L644,564.6 L645,564.6 L646,564.3 L647,564.3 L648,564 L649,563.6 L650,564 L651,563.2 L652,563.3 L653,563.4 L654,562.6 L655,562.9 L656,562.7 L657,562.3 L658,561.6 L659,562.1 L660,561.6 L661,561.3 L662,561.4 L663,560.8 L664,561 L665,560.5 L666,560.5 L667,560 L668,559.9 L669,559.6 L670,559.4 L671,559.4 L672,559.1 L673,559 L674,559 L675,558.5 L676,558 L677,558.1 L678,558 L679,558 L680,557.8 L681,557.6 L682,557.1 L683,557.1 L684,556.5 L685,556.8 L686,556.4 L687,556.3 L688,555.9 L689,555.8 L690,555.4 L691,555.5 L692,554.9 L693,555.2 L694,554.9 L695,555 L696,554.3 L697,554.1 L698,554 L699,553.8 L700,553.5 L701,553.1 L702,552.9 L703,552.8 L704,552.7 L705,552.3 L706,552.1 L707,552.1 L708,552.1 L709,551.7 L710,551.7 L711,551.5 L712,551.3 L713,550.8 L714,550.6 L715,550.1 L716,550.2 L717,550.2 L718,549.7 L719,550 L720,549.8 L721,549.2 L722,549.3 L723,548.6 L724,548.4 L725,548.4 L726,548.2 L727,548 L728,547.6 L729,548 L730,547.4 L731,547.2 L732,547.1 L733,546.7 L734,546.4 L735,546.1 L736,545.7 L737,546.1 L738,545.4 L739,545 L740,545 L741,544.6 L742,545.1 L743,544.5 L744,544.5 L745,544.2 L746,543.8 L747,543.6 L748,543.1 L749,543 L750,542.6 L751,542.5 L752,542.1 L753,542.3 L754,541.9 L755,541.5 L756,540.9 L757,541.1 L758,540.9 L759,540.5 L760,540 L761,540 L762,539.9 L763,539 L764,539.3 L765,538.5 L766,538.6 L767,538.7 L768,538.1 L769,537.9 L770,537.4 L771,537.2 L772,537.4 L773,536.9 L774,536.3 L775,536 L776,535.8 L777,536 L778,535.3 L779,535.1 L780,534.5 L781,534.1 L782,534.3 L783,533.7 L784,533.3 L785,533 L786,532.7 L787,532.4 L788,531.9 L789,532.1 L790,531.6 L791,531.4 L792,530.8 L793,530.6 L794,530.3 L795,530.1 L796,529.7 L797,529.3 L798,528.8 L799,528.3 L800,528.1 L801,527.8 L802,527.4 L803,526.9 L804,527.2 L805,526.5 L806,525.7 L807,525.6 L808,525.2 L809,525.1 L810,524.9 L811,524.1 L812,524.1 L813,523.5 L814,523.5 L815,523.1 L816,522.5 L817,522.2 L818,521.7 L819,521.2 L820,520.7 L821,520.6 L822,520.1 L823,519.7 L824,519.3 L825,518.9 L826,518.3 L827,518 L828,518 L829,517.4 L830,517.7 L831,517.1 L832,517.1 L833,517.3 L834,517.4 L835,517.1 L836,517.4 L837,517.4 L838,517.4 L839,517.1 L840,517.1 L841,516.8 L842,516.6 L843,516.2 L844,516 L845,515 L846,514.6 L847,514.1 L848,514 L849,512.9 L850,512.7 L851,512.9 L852,512.1 L853,511.2 L854,511.4 L855,511.5 L856,511.5 L857,511.3 L858,511.2 L859,511.5 L860,511.3 L861,511.4 L862,511.3 L863,511.2 L864,511.5 L865,511.1 L866,510.8 L867,509.7 L868,508.9 L869,508.1 L870,507.1 L871,506.4 L872,505.8 L873,505.1 L874,504.1 L875,502.9 L876,502.4 L877,501.3 L878,502.5 L879,502 L880,502.6 L881,502.2 L882,502.6 L883,502.4 L884,502.7 L885,502.5 L886,502.3 L887,502.5 L888,502.7 L889,502.9 L890,502.5 L891,502.7 L892,502.9 L893,503.1 L894,503.2 L895,503.1 L896,503 L897,503.4 L898,503.3 L899,503.6 L900,503.4 L901,503.7 L902,503.4 L903,503.7 L904,503.8 L905,503.9 L906,503.7 L907,503.9 L908,503.8 L909,504 L910,504.2 L911,504.7 L912,504.2 L913,504.4 L914,504.3 L915,504.6 L916,504.5 L917,504.7 L918,504.6 L919,505 L920,504.9 L921,504.3 L922,504.8 L923,504.8 L924,504.4 L925,504.7 L926,504.8 L927,504.8 L928,505 L929,504.7 L930,505.3 L931,505.3 L932,505.3 L933,505.2 L934,505.3 L935,505.3 L936,505.6 L937,505.5 L938,505.9 L939,505.5 L940,505.9 L941,505.5 L942,505.6 L943,505.5 L944,505.9 L945,505.8 L946,506 L947,506.2 L948,505.9 L949,506.1 L950,506.2 L951,506.1 L952,506 L953,506.2 L954,506.3 L955,506.4 L956,506.5 L957,506.2 L958,506.5 L959,506.7 L960,506.4 L961,506.6 L962,506.4 L963,506.6 L964,507 L965,506.7 L966,506.5 L967,506.8 L968,506.8 L969,507 L970,506.6 L971,506.7 L972,506.9 L973,506.7 L974,507.2 L975,506.6 L976,506.9 L977,506.8 L978,507 L979,507.4 L980,507.3 L981,507.4 L982,507.4 L983,506.9 L984,507.4 L985,507 L986,507.3 L987,507.4 L988,507.4 L989,507.6 L990,507.4 L991,508 L992,507.8 L993,507.9 L994,507.9 L995,507.9 L996,507.8 L997,508.2 L998,507.6 L999,508 L1000,507.9 L1001,507.9 L1002,508 L1003,507.9 L1004,508.2 L1005,508.2 L1006,508.1 L1007,508.3 L1008,508 L1009,507.8 L1010,508.1 L1011,508.2 L1012,508.8 L1013,508.3 L1014,508.6 L1015,508.5 L1016,508.8 L1017,508.5 L1018,508.6 L1019,508.5 L1020,508.3 L1021,508.4 L1022,508.4 L1023,508.9 L1024,508.7 L1025,508.6 L1026,508.7 L1027,508.6 L1028,508.7 L1029,508.8 L1030,508.9 L1031,509 L1032,508.5 L1033,508.9 L1034,509.2 L1035,508.7 L1036,508.9 L1037,509 L1038,509.2 L1039,509.2 L1040,509 L1041,509.2 L1042,509.3 L1043,509.2 L1044,509.5 L1045,509.3 L1046,509 L1047,509.1 L1048,509.2 L1049,509.2 L1050,509.4 L1051,509.4 L1052,509.7 L1053,509.5 L1054,509.7 L1055,509.3 L1056,509.4 L1057,509.6 L1058,509.5 L1059,509.7 L1060,509.6 L1061,509.4 L1062,509.9 L1063,509.8 L1064,509.3 L1065,509.5 L1066,509.7 L1067,509.8 L1068,509.7 L1069,509.5 L1070,509.9 L1071,509.7 L1072,510.1 L1073,509.9 L1074,510.1 L1075,510 L1076,510.1 L1077,509.8 L1078,510.1 L1079,510 L1080,509.7 L1081,509.9 L1082,510 L1083,510.1 L1084,510.2 L1085,509.9 L1086,510.2 L1087,510.1 L1088,509.9 L1089,510.3 L1090,510 L1091,510 L1092,510.4 L1093,510.4 L1094,510.1 L1095,510.5 L1096,510.5 L1097,510.2 L1098,510.7 L1099,510.3 L1100,510.4 L1101,509.9 L1102,510.5 L1103,510.3 L1104,510.5 L1105,510.1 L1106,510.7 L1107,510.8 L1108,510.9 L1109,509.9 L1110,510.7 L1111,510.6 L1112,510 L1113,510.4 L1114,510.6 L1115,510.9 L1116,510.5 L1117,510.7 L1118,510.7 L1119,510.8 L1120,510.6 L1121,510.9 L1122,510.9 L1123,510.5 L1124,511 L1125,510.6 L1126,510.7 L1127,511 L1128,510.8 L1129,511 L1130,511 L1131,511 L1132,510.8 L1133,510.7 L1134,511.1 L1135,511.1 L1136,511 L1137,510.9 L1138,511.1 L1139,511 L1140,510.7 L1141,511.1 L1142,511.1 L1143,511.2 L1144,510.9 L1145,510.9 L1146,511.2 L1147,511 L1148,511.1 L1149,511.3 L1150,511.2 L1151,511.5 L1152,511.2 L1153,511.5 L1154,511.4 L1155,511.7 L1156,511.2 L1157,511.2 L1158,511.5 L1159,511.2 L1160,511.2 L1161,511.3 L1162,511.4 L1163,511 L1164,511.4 L1165,511.3 L1166,511.3 L1167,511.4 L1168,511.3 L1169,511.6 L1170,511.5 L1171,511.4 L1172,511.4 L1173,511.6 L1174,511.6 L1175,511.7 L1176,511.4 L1177,511.5 L1178,511.9 L1179,511.5 L1180,511.9 L1181,511.7 L1182,511.5 L1183,511.3 L1184,511.7 L1185,511.4 L1186,511.4 L1187,511.3 L1188,511.8 L1189,511.6 L1190,511.6 L1191,511.7 L1192,511.7 L1193,511.7 L1194,511.8 L1195,511.6 L1196,511.2 L1197,511.8 L1198,511.8 L1199,511.7 L1200,512 L1201,511.5 L1202,511.2 L1203,512.1 L1204,511.9 L1205,511.5 L1206,511.7 L1207,511.9 L1208,511.6 L1209,511.9 L1210,512.2 L1211,512.1 L1212,511.8 L1213,511.9 L1214,511.7 L1215,511.9 L1216,511.8 L1217,511.7 L1218,511.6 L1219,512.3 L1220,511.9 L1221,511.7 L1222,511.9 L1223,512.2 L1224,512.3 L1225,511.8 L1226,512 L1227,512.2 L1228,511.9 L1229,511.8 L1230,511.8 L1231,512 L1232,511.9 L1233,511.8 L1234,512 L1235,512.2 L1236,512.2 L1237,512 L1238,512.5 L1239,511.9 L1240,512.1 L1241,511.8 L1242,512.3 L1243,512.1 L1244,511.8 L1245,512 L1246,512.5 L1247,512.3 L1248,512.2 L1249,512.3" fill="none" stroke="#8cc820" stroke-width="2.2" stroke-linejoin="round"/>
<line x1="828.8" y1="511.4" x2="828.8" y2="523.4" stroke="#8cc820" stroke-width="1.6"/>
<line x1="841" y1="511.1" x2="841" y2="523.1" stroke="#8cc820" stroke-width="1.6"/>
<line x1="853.2" y1="505.4" x2="853.2" y2="517.4" stroke="#8cc820" stroke-width="1.6"/>
<line x1="865.4" y1="505.2" x2="865.4" y2="517.2" stroke="#8cc820" stroke-width="1.6"/>
<line x1="877.4" y1="494.9" x2="877.4" y2="506.9" stroke="#8cc820" stroke-width="1.6"/>
<line x1="70" y1="663.5" x2="1249" y2="663.5" stroke="#c8c8c8" stroke-width="1" stroke-dasharray="4,3" opacity="0.550"/>
<line x1="165.400" y1="110" x2="165.400" y2="728" stroke="#b8b8b8" stroke-width="1" stroke-dasharray="3,3" opacity="0.750"/>
<path d="M158 83 H172.500 L165.200 89.500 Z" fill="#f08a1c"/>
<path d="M159 91 H171.500 V104 H168 L165.200 108.500 L162.500 104 H159 Z" fill="#000" stroke="#f08a1c" stroke-width="1.600"/>
<text x="165.300" y="102" font-size="11" fill="#f08a1c" text-anchor="middle" font-family="Liberation Sans" font-weight="bold">T</text>
<path d="M1221 88.500 H1244 V111 Z" fill="#6e6e6e"/><circle cx="1239.500" cy="94" r="2.600" fill="none" stroke="#d8d8d8" stroke-width="1.300"/><path d="M1237.500 96 L1233.500 100" stroke="#d8d8d8" stroke-width="1.600"/>
<path d="M48.500 462 H62 L71 470.200 L62 478.500 H48.500 Q46.800 478.500 46.800 477 V463.500 Q46.800 462 48.500 462 Z" fill="#2e2c06" stroke="#b8b02a" stroke-width="1.200"/>
<path d="M47.500 654.300 H62 L71.200 663.200 L62 672 H47.500 Q46.300 672 46.300 670.800 V655.500 Q46.300 654.300 47.500 654.300 Z" fill="#8cc820"/>
<path d="M45 242 H54" stroke="#1fa8b8" stroke-width="1"/>
</g></svg>
<div style="left:52.30px;top:464.38px;height:12px;line-height:12px;font-family:'Liberation Sans','Noto Sans CJK JP',sans-serif;font-size:9px;color:#c8c040;white-space:pre;transform:scaleX(0.9231);transform-origin:0 0;-webkit-text-stroke:0.3px #c8c040;">C</div>
<div style="left:60.50px;top:464.38px;height:12px;line-height:12px;font-family:'Liberation Sans','Noto Sans CJK JP',sans-serif;font-size:9px;color:#c8c040;white-space:pre;transform:scaleX(0.7576);transform-origin:0 0;-webkit-text-stroke:0.3px #c8c040;">1</div>
<div style="left:51.80px;top:657.38px;height:12px;line-height:12px;font-family:'Liberation Sans','Noto Sans CJK JP',sans-serif;font-size:9px;color:#2a3a06;white-space:pre;transform:scaleX(0.9231);transform-origin:0 0;-webkit-text-stroke:0.3px #2a3a06;">C</div>
<div style="left:59.50px;top:657.38px;height:12px;line-height:12px;font-family:'Liberation Sans','Noto Sans CJK JP',sans-serif;font-size:9px;color:#2a3a06;white-space:pre;transform:scaleX(1.0966);transform-origin:0 0;-webkit-text-stroke:0.3px #2a3a06;">4</div>
<div style="left:1221.20px;top:141.61px;height:12px;line-height:12px;font-family:'Liberation Sans','Noto Sans CJK JP',sans-serif;font-size:9.5px;color:#78a628;white-space:pre;transform:scaleX(1.0077);transform-origin:0 0;">400 A</div>
<div style="left:1221.20px;top:206.11px;height:12px;line-height:12px;font-family:'Liberation Sans','Noto Sans CJK JP',sans-serif;font-size:9.5px;color:#78a628;white-space:pre;transform:scaleX(1.0077);transform-origin:0 0;">350 A</div>
<div style="left:1221.20px;top:270.61px;height:12px;line-height:12px;font-family:'Liberation Sans','Noto Sans CJK JP',sans-serif;font-size:9.5px;color:#78a628;white-space:pre;transform:scaleX(1.0077);transform-origin:0 0;">300 A</div>
<div style="left:1221.20px;top:335.11px;height:12px;line-height:12px;font-family:'Liberation Sans','Noto Sans CJK JP',sans-serif;font-size:9.5px;color:#78a628;white-space:pre;transform:scaleX(1.0077);transform-origin:0 0;">250 A</div>
<div style="left:1221.20px;top:399.61px;height:12px;line-height:12px;font-family:'Liberation Sans','Noto Sans CJK JP',sans-serif;font-size:9.5px;color:#78a628;white-space:pre;transform:scaleX(1.0077);transform-origin:0 0;">200 A</div>
<div style="left:1221.20px;top:464.11px;height:12px;line-height:12px;font-family:'Liberation Sans','Noto Sans CJK JP',sans-serif;font-size:9.5px;color:#78a628;white-space:pre;transform:scaleX(1.0077);transform-origin:0 0;">150 A</div>
<div style="left:1221.20px;top:528.61px;height:12px;line-height:12px;font-family:'Liberation Sans','Noto Sans CJK JP',sans-serif;font-size:9.5px;color:#78a628;white-space:pre;transform:scaleX(1.0077);transform-origin:0 0;">100 A</div>
<div style="left:1226.20px;top:593.11px;height:12px;line-height:12px;font-family:'Liberation Sans','Noto Sans CJK JP',sans-serif;font-size:9.5px;color:#78a628;white-space:pre;transform:scaleX(1.0246);transform-origin:0 0;">50 A</div>
<div style="left:1231.70px;top:657.61px;height:12px;line-height:12px;font-family:'Liberation Sans','Noto Sans CJK JP',sans-serif;font-size:9.5px;color:#5f8420;white-space:pre;transform:scaleX(1.0182);transform-origin:0 0;">0 A</div>
<div style="left:159.90px;top:714.38px;height:12px;line-height:12px;font-family:'Liberation Sans','Noto Sans CJK JP',sans-serif;font-size:9px;color:#a8a8a8;white-space:pre;transform:scaleX(1.0682);transform-origin:0 0;">0's</div>
<div style="left:275.30px;top:714.38px;height:12px;line-height:12px;font-family:'Liberation Sans','Noto Sans CJK JP',sans-serif;font-size:9px;color:#a8a8a8;white-space:pre;transform:scaleX(0.9909);transform-origin:0 0;">10 µs</div>
<div style="left:395.20px;top:714.38px;height:12px;line-height:12px;font-family:'Liberation Sans','Noto Sans CJK JP',sans-serif;font-size:9px;color:#a8a8a8;white-space:pre;transform:scaleX(1.0359);transform-origin:0 0;">20 µs</div>
<div style="left:515.60px;top:714.38px;height:12px;line-height:12px;font-family:'Liberation Sans','Noto Sans CJK JP',sans-serif;font-size:9px;color:#a8a8a8;white-space:pre;transform:scaleX(1.0359);transform-origin:0 0;">30 µs</div>
<div style="left:636.00px;top:714.38px;height:12px;line-height:12px;font-family:'Liberation Sans','Noto Sans CJK JP',sans-serif;font-size:9px;color:#a8a8a8;white-space:pre;transform:scaleX(1.0359);transform-origin:0 0;">40 µs</div>
<div style="left:756.40px;top:714.38px;height:12px;line-height:12px;font-family:'Liberation Sans','Noto Sans CJK JP',sans-serif;font-size:9px;color:#a8a8a8;white-space:pre;transform:scaleX(1.0359);transform-origin:0 0;">50 µs</div>
<div style="left:876.80px;top:714.38px;height:12px;line-height:12px;font-family:'Liberation Sans','Noto Sans CJK JP',sans-serif;font-size:9px;color:#a8a8a8;white-space:pre;transform:scaleX(1.0359);transform-origin:0 0;">60 µs</div>
<div style="left:997.20px;top:714.38px;height:12px;line-height:12px;font-family:'Liberation Sans','Noto Sans CJK JP',sans-serif;font-size:9px;color:#a8a8a8;white-space:pre;transform:scaleX(1.0359);transform-origin:0 0;">70 µs</div>
<div style="left:1117.60px;top:714.38px;height:12px;line-height:12px;font-family:'Liberation Sans','Noto Sans CJK JP',sans-serif;font-size:9px;color:#a8a8a8;white-space:pre;transform:scaleX(1.0359);transform-origin:0 0;">80 µs</div>
<div style="left:78.30px;top:506.73px;height:27px;line-height:27px;font-family:'DejaVu Sans Condensed','DejaVu Sans','Liberation Sans',sans-serif;font-size:21px;color:#f0e83a;white-space:pre;transform:scaleX(0.8054);transform-origin:0 0;">Vgs</div>
<div style="left:408.20px;top:565.23px;height:27px;line-height:27px;font-family:'DejaVu Sans Condensed','DejaVu Sans','Liberation Sans',sans-serif;font-size:21px;color:#8cc820;white-space:pre;transform:scaleX(0.8944);transform-origin:0 0;">Icoil</div>
<div style="left:493.50px;top:615.03px;height:27px;line-height:27px;font-family:'DejaVu Sans Condensed','DejaVu Sans','Liberation Sans',sans-serif;font-size:21px;color:#1fc8d8;white-space:pre;transform:scaleX(0.8078);transform-origin:0 0;">Id</div>
<div style="left:725.00px;top:672.73px;height:27px;line-height:27px;font-family:'DejaVu Sans Condensed','DejaVu Sans','Liberation Sans',sans-serif;font-size:21px;color:#e8234f;white-space:pre;transform:scaleX(0.8054);transform-origin:0 0;">Vds</div>
<div style="left:1255px;top:389.5px;width:3px;height:3px;background:#c8c8c8;border-radius:50%"></div>
<div style="left:1255px;top:395.5px;width:3px;height:3px;background:#c8c8c8;border-radius:50%"></div>
<div style="left:1255px;top:401.5px;width:3px;height:3px;background:#c8c8c8;border-radius:50%"></div>
<div style="left:80.5px;top:118.7px;width:670.5px;height:325.5px;background:#0c0c0c;border:1px solid #2e2e2e;border-top-color:#3a3a3a"></div>
<div style="left:81px;top:118.7px;width:670px;height:30.1px;background:#333333"></div>
<div style="left:88px;top:126px;width:90px;height:22.8px;background:#0c0c0c;border-radius:5px 5px 0 0"></div>
<svg style="left:84px;top:144.800px" width="98" height="4" viewBox="0 0 98 4"><path d="M0 4 Q4 4 4 0 V4 Z M98 4 Q94 4 94 0 V4 Z" fill="#0c0c0c"/></svg>
<svg style="left:94.200px;top:130.600px" width="13" height="13" viewBox="0 0 14 14">
<path d="M7 0.500 L13.500 7 L7 13.500 L0.500 7 Z" fill="#e8e8e8"/>
<path d="M7 0.500 L10.200 3.700 L7 7 L3.800 3.700 Z" fill="#e0483a"/>
<path d="M10.200 3.700 L13.500 7 L10.200 10.200 L7 7 Z" fill="#3aa84a"/>
<path d="M3.800 3.700 L7 7 L3.800 10.200 L0.500 7 Z" fill="#3a7ae0"/>
<path d="M7 7 L10.200 10.200 L7 13.500 L3.800 10.200 Z" fill="#e8c83a"/>
<path d="M5 4.500 L9 8.500 M7 6 V10" stroke="#222" stroke-width="1"/>
</svg>
<div style="left:113.50px;top:131.14px;height:13px;line-height:13px;font-family:'Liberation Sans','Noto Sans CJK JP',sans-serif;font-size:9.7px;color:#f4f4f4;white-space:pre;transform:scaleX(0.9369);transform-origin:0 0;-webkit-text-stroke:0.3px #f4f4f4;">Git bash</div>
<svg style="left:157.200px;top:131.800px" width="10" height="10" viewBox="0 0 10 10"><path d="M1.500 1.500 L8.500 8.500 M8.500 1.500 L1.500 8.500" stroke="#e8e8e8" stroke-width="1"/></svg>
<svg style="left:187.300px;top:129.800px" width="36" height="14" viewBox="0 0 36 14"><path d="M6.500 2.500 V11.500 M2 7 H11" stroke="#e8e8e8" stroke-width="1.100"/><path d="M18.300 0 V14" stroke="#4a4a4a" stroke-width="1"/><path d="M25.700 6 L28.200 8.500 L30.700 6" stroke="#e0e0e0" stroke-width="1" fill="none"/></svg>
<svg style="left:655px;top:126px" width="90" height="16" viewBox="0 0 90 16"><g stroke="#e8e8e8" stroke-width="1" fill="none"><path d="M6 7.300 h8"/><rect x="40.500" y="4.500" width="7.500" height="7.500" rx="0.500"/><path d="M75 4.500 l7.500 7.500 M82.500 4.500 l-7.500 7.500"/></g></svg>
<svg style="left:87px;top:155.40px" width="90" height="14" viewBox="0 0 90 13.800"><path d="M0 0 H55 L61 6.900 L55 13.800 H0 Z" fill="#c6c6c6"/><path d="M55 0 H81 L87.500 6.900 L81 13.800 H55 L61 6.900 Z" fill="#5c8cff"/></svg>
<div style="left:94.20px;top:155.25px;height:14px;line-height:14px;font-family:'DejaVu Sans Mono','Liberation Mono',monospace;font-size:11.13px;color:#151515;white-space:pre;-webkit-text-stroke:0.25px #151515;"># 2970</div>
<div style="left:154.50px;top:155.25px;height:14px;line-height:14px;font-family:'DejaVu Sans Mono','Liberation Mono',monospace;font-size:11.13px;font-weight:700;color:#151515;white-space:pre;">~</div>
<div style="left:88.30px;top:168.36px;height:16px;line-height:16px;font-family:'DejaVu Sans Mono','Liberation Mono',monospace;font-size:12.13px;color:#e4e4e4;white-space:pre;transform:scaleX(0.9615);transform-origin:0 0;-webkit-text-stroke:0.45px #e4e4e4;">≫</div>
<div style="left:108.10px;top:169.41px;height:14px;line-height:14px;font-family:'DejaVu Sans Mono','Liberation Mono',monospace;font-size:11.13px;color:#e4e4e4;white-space:pre;">./MSO_AFG_DPT.exe 192.168.0.101 55 1 1</div>
<div style="left:88.00px;top:183.57px;height:14px;line-height:14px;font-family:'DejaVu Sans Mono','Liberation Mono',monospace;font-size:11.13px;color:#e4e4e4;white-space:pre;">Target MSO-Scope: IP address at 192.168.0.101</div>
<div style="left:88.00px;top:197.73px;height:14px;line-height:14px;font-family:'DejaVu Sans Mono','Liberation Mono',monospace;font-size:11.13px;color:#e4e4e4;white-space:pre;">1st Pulse: 55.0(us)</div>
<div style="left:88.00px;top:211.89px;height:14px;line-height:14px;font-family:'DejaVu Sans Mono','Liberation Mono',monospace;font-size:11.13px;color:#e4e4e4;white-space:pre;">1st OFF  : 1.0(us)</div>
<div style="left:88.00px;top:226.05px;height:14px;line-height:14px;font-family:'DejaVu Sans Mono','Liberation Mono',monospace;font-size:11.13px;color:#e4e4e4;white-space:pre;">2nd Pulse: 1.0(us)</div>
<div style="left:88.00px;top:240.21px;height:14px;line-height:14px;font-family:'DejaVu Sans Mono','Liberation Mono',monospace;font-size:11.13px;color:#e4e4e4;white-space:pre;">TEKTRONIX,MSO64,B011614,CF:91.1CT FV:1.44.3.433</div>
<svg style="left:87px;top:268.68px" width="90" height="14" viewBox="0 0 90 13.800"><path d="M0 0 H55 L61 6.900 L55 13.800 H0 Z" fill="#c6c6c6"/><path d="M55 0 H81 L87.500 6.900 L81 13.800 H55 L61 6.900 Z" fill="#5c8cff"/></svg>
<div style="left:94.20px;top:268.53px;height:14px;line-height:14px;font-family:'DejaVu Sans Mono','Liberation Mono',monospace;font-size:11.13px;color:#151515;white-space:pre;-webkit-text-stroke:0.25px #151515;"># 2971</div>
<div style="left:154.50px;top:268.53px;height:14px;line-height:14px;font-family:'DejaVu Sans Mono','Liberation Mono',monospace;font-size:11.13px;font-weight:700;color:#151515;white-space:pre;">~</div>
<div style="left:88.30px;top:281.64px;height:16px;line-height:16px;font-family:'DejaVu Sans Mono','Liberation Mono',monospace;font-size:12.13px;color:#e4e4e4;white-space:pre;transform:scaleX(0.9615);transform-origin:0 0;-webkit-text-stroke:0.45px #e4e4e4;">≫</div>
<div style="left:108.10px;top:282.69px;height:14px;line-height:14px;font-family:'DejaVu Sans Mono','Liberation Mono',monospace;font-size:11.13px;color:#e4e4e4;white-space:pre;">./MSO_AFG_DPT.exe 192.168.0.101 55 1 1 1 1</div>
<div style="left:88.00px;top:296.85px;height:14px;line-height:14px;font-family:'DejaVu Sans Mono','Liberation Mono',monospace;font-size:11.13px;color:#e4e4e4;white-space:pre;">Target MSO-Scope: IP address at 192.168.0.101</div>
<div style="left:88.00px;top:311.01px;height:14px;line-height:14px;font-family:'DejaVu Sans Mono','Liberation Mono',monospace;font-size:11.13px;color:#e4e4e4;white-space:pre;">1st Pulse: 55.0(us)</div>
<div style="left:88.00px;top:325.17px;height:14px;line-height:14px;font-family:'DejaVu Sans Mono','Liberation Mono',monospace;font-size:11.13px;color:#e4e4e4;white-space:pre;">1st OFF  : 1.0(us)</div>
<div style="left:88.00px;top:339.33px;height:14px;line-height:14px;font-family:'DejaVu Sans Mono','Liberation Mono',monospace;font-size:11.13px;color:#e4e4e4;white-space:pre;">2nd Pulse: 1.0(us)</div>
<div style="left:88.00px;top:353.49px;height:14px;line-height:14px;font-family:'DejaVu Sans Mono','Liberation Mono',monospace;font-size:11.13px;color:#e4e4e4;white-space:pre;">2nd OFF  : 1.0(us)</div>
<div style="left:88.00px;top:367.65px;height:14px;line-height:14px;font-family:'DejaVu Sans Mono','Liberation Mono',monospace;font-size:11.13px;color:#e4e4e4;white-space:pre;">3rd Pulse: 1.0(us)</div>
<div style="left:88.00px;top:381.81px;height:14px;line-height:14px;font-family:'DejaVu Sans Mono','Liberation Mono',monospace;font-size:11.13px;color:#e4e4e4;white-space:pre;">TEKTRONIX,MSO64,B011614,CF:91.1CT FV:1.44.3.433</div>
<svg style="left:87px;top:410.28px" width="90" height="14" viewBox="0 0 90 13.800"><path d="M0 0 H55 L61 6.900 L55 13.800 H0 Z" fill="#c6c6c6"/><path d="M55 0 H81 L87.500 6.900 L81 13.800 H55 L61 6.900 Z" fill="#5c8cff"/></svg>
<div style="left:94.20px;top:410.13px;height:14px;line-height:14px;font-family:'DejaVu Sans Mono','Liberation Mono',monospace;font-size:11.13px;color:#151515;white-space:pre;-webkit-text-stroke:0.25px #151515;"># 2972</div>
<div style="left:154.50px;top:410.13px;height:14px;line-height:14px;font-family:'DejaVu Sans Mono','Liberation Mono',monospace;font-size:11.13px;font-weight:700;color:#151515;white-space:pre;">~</div>
<div style="left:88.30px;top:423.24px;height:16px;line-height:16px;font-family:'DejaVu Sans Mono','Liberation Mono',monospace;font-size:12.13px;color:#e4e4e4;white-space:pre;transform:scaleX(0.9615);transform-origin:0 0;-webkit-text-stroke:0.45px #e4e4e4;">≫</div>
<div style="left:107px;top:423.94000000000005px;width:1px;height:14.5px;background:#d0d0d0"></div>
<div style="left:1262px;top:64px;width:103px;height:666px;background:#2d2d2d;border-left:1px solid #4e4e4e;border-top:1px solid #4e4e4e"></div>
<div style="left:1283.80px;top:63.66px;height:14px;line-height:14px;font-family:'Liberation Sans','Noto Sans CJK JP',sans-serif;font-size:10.5px;font-weight:700;color:#f4f4f4;white-space:pre;transform:scaleX(1.1148);transform-origin:0 0;">Add New...</div>
<div class="btn" style="left:1267.5px;top:81px;width:44px;height:26px;"></div>
<div style="left:1271.35px;top:86.56px;height:14px;line-height:14px;font-family:'Liberation Sans','Noto Sans CJK JP',sans-serif;font-size:10.5px;color:#f0f0f0;white-space:pre;transform:scaleX(0.9873);transform-origin:0 0;">Cursors</div>
<div class="btn" style="left:1317px;top:81px;width:44px;height:26px;"></div>
<div style="left:1321.35px;top:86.56px;height:14px;line-height:14px;font-family:'Liberation Sans','Noto Sans CJK JP',sans-serif;font-size:10.5px;color:#f0f0f0;white-space:pre;transform:scaleX(1.0554);transform-origin:0 0;">Callout</div>
<div class="btn" style="left:1267.5px;top:113px;width:44px;height:25.5px;"></div>
<div style="left:1268.60px;top:118.36px;height:14px;line-height:14px;font-family:'Liberation Sans','Noto Sans CJK JP',sans-serif;font-size:10.5px;color:#f0f0f0;white-space:pre;transform:scaleX(1.0083);transform-origin:0 0;">Measure</div>
<div class="btn" style="left:1317px;top:113px;width:44px;height:25.5px;"></div>
<div style="left:1321.95px;top:118.36px;height:14px;line-height:14px;font-family:'Liberation Sans','Noto Sans CJK JP',sans-serif;font-size:10.5px;color:#f0f0f0;white-space:pre;transform:scaleX(0.9765);transform-origin:0 0;">Search</div>
<div class="btn" style="left:1267.5px;top:144.5px;width:44px;height:25.5px;"></div>
<div style="left:1272.00px;top:144.16px;height:14px;line-height:14px;font-family:'Liberation Sans','Noto Sans CJK JP',sans-serif;font-size:10.5px;color:#f0f0f0;white-space:pre;transform:scaleX(0.9710);transform-origin:0 0;">Results</div>
<div style="left:1276.40px;top:155.36px;height:14px;line-height:14px;font-family:'Liberation Sans','Noto Sans CJK JP',sans-serif;font-size:10.5px;color:#f0f0f0;white-space:pre;transform:scaleX(1.0275);transform-origin:0 0;">Table</div>
<div class="btn" style="left:1317px;top:144.5px;width:44px;height:25.5px;"></div>
<div style="left:1328.50px;top:149.96px;height:14px;line-height:14px;font-family:'Liberation Sans','Noto Sans CJK JP',sans-serif;font-size:10.5px;color:#f0f0f0;white-space:pre;transform:scaleX(1.1275);transform-origin:0 0;">Plot</div>
<div style="left:1265px;top:174px;width:98px;height:1px;background:#4a4a4a"></div>
<div class="btn" style="left:1267.5px;top:179px;width:44px;height:25.5px;"></div>
<svg style="left:1280px;top:182px" width="20" height="20" viewBox="0 0 20 20"><rect x="1.500" y="1.500" width="13" height="13" fill="none" stroke="#d8d8d8" stroke-width="1.200" stroke-dasharray="2,1.500"/><circle cx="9.500" cy="7" r="3.200" fill="none" stroke="#e8e8e8" stroke-width="1.200"/><path d="M7.500 9.500 L4.500 12.500" stroke="#e8e8e8" stroke-width="1.400"/><path d="M13 13 l5.500 2 l-2.300 1 l-1 2.400 z" fill="#e8e8e8"/></svg>
<div class="btn" style="left:1317px;top:179px;width:44px;height:25.5px;"></div>
<div style="left:1321.10px;top:184.16px;height:14px;line-height:14px;font-family:'Liberation Sans','Noto Sans CJK JP',sans-serif;font-size:10.5px;color:#f0f0f0;white-space:pre;transform:scaleX(1.0952);transform-origin:0 0;">More...</div>
<div style="left:1265px;top:210px;width:98px;height:1px;background:#4a4a4a"></div>
<div style="left:1264px;top:220.2px;width:99px;height:39px;background:#cfcfcf;border-radius:2px"></div>
<div style="left:1264px;top:220.2px;width:99px;height:12.5px;background:#4e4e4e;border-radius:2px 2px 0 0"></div>
<div style="left:1267.00px;top:218.96px;height:14px;line-height:14px;font-family:'Liberation Sans','Noto Sans CJK JP',sans-serif;font-size:10.5px;color:#f0f0f0;white-space:pre;transform:scaleX(0.9873);transform-origin:0 0;">Meas 1</div>
<svg style="left:1323.500px;top:222.0px" width="37" height="9" viewBox="0 0 37 9"><rect x="0.300" y="0.300" width="35.500" height="8.400" rx="4.200" fill="#777"/><path d="M4.500 0.300 H21.500 L16 8.700 H4.500 A4.200 4.200 0 0 1 4.500 0.300 Z" fill="#e82a58"/><text x="6.500" y="7.300" font-size="7" fill="#fff" font-family="Liberation Sans" font-weight="bold">3</text><path d="M25.500 4.500 h5 M28 2 v5" stroke="#3a3a3a" stroke-width="1"/></svg>
<div style="left:1267.00px;top:233.43px;height:13px;line-height:13px;font-family:'Liberation Sans','Noto Sans CJK JP',sans-serif;font-size:10.3px;color:#1e1e1e;white-space:pre;transform:scaleX(0.9303);transform-origin:0 0;">Vpeak'</div>
<div style="left:1267.00px;top:245.93px;height:13px;line-height:13px;font-family:'Liberation Sans','Noto Sans CJK JP',sans-serif;font-size:10.3px;color:#1e1e1e;white-space:pre;transform:scaleX(0.9450);transform-origin:0 0;">Vpeak:</div>
<div style="left:1316.60px;top:245.93px;height:13px;line-height:13px;font-family:'Liberation Sans','Noto Sans CJK JP',sans-serif;font-size:10.3px;color:#1e1e1e;white-space:pre;transform:scaleX(0.9944);transform-origin:0 0;">779.3 V</div>
<div style="left:1264px;top:264.8px;width:99px;height:39px;background:#cfcfcf;border-radius:2px"></div>
<div style="left:1264px;top:264.8px;width:99px;height:12.5px;background:#4e4e4e;border-radius:2px 2px 0 0"></div>
<div style="left:1267.00px;top:263.56px;height:14px;line-height:14px;font-family:'Liberation Sans','Noto Sans CJK JP',sans-serif;font-size:10.5px;color:#f0f0f0;white-space:pre;transform:scaleX(0.9873);transform-origin:0 0;">Meas 2</div>
<svg style="left:1323.500px;top:266.6px" width="37" height="9" viewBox="0 0 37 9"><rect x="0.300" y="0.300" width="35.500" height="8.400" rx="4.200" fill="#777"/><path d="M4.500 0.300 H21.500 L16 8.700 H4.500 A4.200 4.200 0 0 1 4.500 0.300 Z" fill="#e82a58"/><text x="6.500" y="7.300" font-size="7" fill="#fff" font-family="Liberation Sans" font-weight="bold">3</text><path d="M25.500 4.500 h5 M28 2 v5" stroke="#3a3a3a" stroke-width="1"/></svg>
<div style="left:1267.00px;top:278.03px;height:13px;line-height:13px;font-family:'Liberation Sans','Noto Sans CJK JP',sans-serif;font-size:10.3px;color:#1e1e1e;white-space:pre;transform:scaleX(0.9755);transform-origin:0 0;">Eon'</div>
<div style="left:1267.00px;top:290.53px;height:13px;line-height:13px;font-family:'Liberation Sans','Noto Sans CJK JP',sans-serif;font-size:10.3px;color:#1e1e1e;white-space:pre;transform:scaleX(0.9581);transform-origin:0 0;">Eon:</div>
<div style="left:1316.60px;top:290.53px;height:13px;line-height:13px;font-family:'Liberation Sans','Noto Sans CJK JP',sans-serif;font-size:10.3px;color:#1e1e1e;white-space:pre;transform:scaleX(0.9632);transform-origin:0 0;">2.531 mJ</div>
<div style="left:1264px;top:309.4px;width:99px;height:39px;background:#cfcfcf;border-radius:2px"></div>
<div style="left:1264px;top:309.4px;width:99px;height:12.5px;background:#000;border-radius:2px 2px 0 0"></div>
<div style="left:1267.00px;top:308.16px;height:14px;line-height:14px;font-family:'Liberation Sans','Noto Sans CJK JP',sans-serif;font-size:10.5px;color:#f0f0f0;white-space:pre;transform:scaleX(0.9873);transform-origin:0 0;">Meas 3</div>
<svg style="left:1323.500px;top:311.2px" width="37" height="9" viewBox="0 0 37 9"><rect x="0.300" y="0.300" width="35.500" height="8.400" rx="4.200" fill="#777"/><path d="M4.500 0.300 H21.500 L16 8.700 H4.500 A4.200 4.200 0 0 1 4.500 0.300 Z" fill="#e82a58"/><text x="6.500" y="7.300" font-size="7" fill="#fff" font-family="Liberation Sans" font-weight="bold">3</text><path d="M25.500 4.500 h5 M28 2 v5" stroke="#3a3a3a" stroke-width="1"/></svg>
<div style="left:1267.00px;top:322.63px;height:13px;line-height:13px;font-family:'Liberation Sans','Noto Sans CJK JP',sans-serif;font-size:10.3px;color:#1e1e1e;white-space:pre;transform:scaleX(1.0343);transform-origin:0 0;">Eoff'</div>
<div style="left:1267.00px;top:335.13px;height:13px;line-height:13px;font-family:'Liberation Sans','Noto Sans CJK JP',sans-serif;font-size:10.3px;color:#1e1e1e;white-space:pre;transform:scaleX(1.0143);transform-origin:0 0;">Eoff:</div>
<div style="left:1316.60px;top:335.13px;height:13px;line-height:13px;font-family:'Liberation Sans','Noto Sans CJK JP',sans-serif;font-size:10.3px;color:#1e1e1e;white-space:pre;transform:scaleX(0.9632);transform-origin:0 0;">1.944 mJ</div>
<div style="left:43px;top:730px;width:1322px;height:58px;background:#2d2d2d"></div>
<div style="left:44.9px;top:733.3px;width:61.6px;height:52.4px;background:#cfcfcf;border-radius:3px"></div>
<div style="left:44.9px;top:733.3px;width:61.6px;height:13px;background:#58521f;border-radius:3px 3px 0 0"></div>
<div style="left:47.90px;top:732.80px;height:14px;line-height:14px;font-family:'Liberation Sans','Noto Sans CJK JP',sans-serif;font-size:10.4px;font-weight:700;color:#f0e43a;white-space:pre;transform:scaleX(0.8965);transform-origin:0 0;">Ch 1</div>
<div style="left:47.90px;top:746.93px;height:13px;line-height:13px;font-family:'Liberation Sans','Noto Sans CJK JP',sans-serif;font-size:10.3px;color:#333;white-space:pre;transform:scaleX(0.9834);transform-origin:0 0;">10 V/div</div>
<div style="left:47.90px;top:772.33px;height:13px;line-height:13px;font-family:'Liberation Sans','Noto Sans CJK JP',sans-serif;font-size:10.3px;color:#333;white-space:pre;transform:scaleX(0.9525);transform-origin:0 0;">1 GHz</div>
<div style="left:110px;top:733.3px;width:62px;height:52.4px;background:#cfcfcf;border-radius:3px"></div>
<div style="left:110px;top:733.3px;width:62px;height:13px;background:#1f474f;border-radius:3px 3px 0 0"></div>
<div style="left:113.00px;top:732.80px;height:14px;line-height:14px;font-family:'Liberation Sans','Noto Sans CJK JP',sans-serif;font-size:10.4px;font-weight:700;color:#2ac8d8;white-space:pre;transform:scaleX(0.9454);transform-origin:0 0;">Ch 2</div>
<div style="left:113.10px;top:746.93px;height:13px;line-height:13px;font-family:'Liberation Sans','Noto Sans CJK JP',sans-serif;font-size:10.3px;color:#333;white-space:pre;transform:scaleX(1.0207);transform-origin:0 0;">50 A/div</div>
<div style="left:113.10px;top:759.63px;height:13px;line-height:13px;font-family:'Liberation Sans','Noto Sans CJK JP',sans-serif;font-size:10.3px;color:#333;white-space:pre;transform:scaleX(1.0311);transform-origin:0 0;">50 Ω</div>
<div style="left:146.10px;top:759.63px;height:13px;line-height:13px;font-family:'Liberation Sans','Noto Sans CJK JP',sans-serif;font-size:10.3px;color:#333;white-space:pre;transform:scaleX(0.8943);transform-origin:0 0;">DS</div>
<div style="left:113.10px;top:772.33px;height:13px;line-height:13px;font-family:'Liberation Sans','Noto Sans CJK JP',sans-serif;font-size:10.3px;color:#333;white-space:pre;transform:scaleX(0.9525);transform-origin:0 0;">1 GHz</div>
<div style="left:175.4px;top:733.3px;width:62.2px;height:52.4px;background:#cfcfcf;border-radius:3px"></div>
<div style="left:175.4px;top:733.3px;width:62.2px;height:13px;background:#4f2229;border-radius:3px 3px 0 0"></div>
<div style="left:178.40px;top:732.80px;height:14px;line-height:14px;font-family:'Liberation Sans','Noto Sans CJK JP',sans-serif;font-size:10.4px;font-weight:700;color:#ece4e4;white-space:pre;transform:scaleX(0.9409);transform-origin:0 0;">Ch 3</div>
<div style="left:178.80px;top:746.93px;height:13px;line-height:13px;font-family:'Liberation Sans','Noto Sans CJK JP',sans-serif;font-size:10.3px;color:#333;white-space:pre;transform:scaleX(0.9782);transform-origin:0 0;">100 V/div</div>
<div style="left:178.80px;top:759.63px;height:13px;line-height:13px;font-family:'Liberation Sans','Noto Sans CJK JP',sans-serif;font-size:10.3px;color:#333;white-space:pre;transform:scaleX(1.0332);transform-origin:0 0;">1 MΩ</div>
<div style="left:211.70px;top:759.63px;height:13px;line-height:13px;font-family:'Liberation Sans','Noto Sans CJK JP',sans-serif;font-size:10.3px;color:#333;white-space:pre;transform:scaleX(0.8943);transform-origin:0 0;">DS</div>
<div style="left:178.80px;top:772.33px;height:13px;line-height:13px;font-family:'Liberation Sans','Noto Sans CJK JP',sans-serif;font-size:10.3px;color:#333;white-space:pre;transform:scaleX(0.9878);transform-origin:0 0;">100 MHz</div>
<div style="left:241.1px;top:733.3px;width:61.7px;height:52.4px;background:#cfcfcf;border-radius:3px"></div>
<div style="left:241.1px;top:733.3px;width:61.7px;height:13px;background:#86c91f;border-radius:3px 3px 0 0"></div>
<div style="left:244.10px;top:732.80px;height:14px;line-height:14px;font-family:'Liberation Sans','Noto Sans CJK JP',sans-serif;font-size:10.4px;font-weight:700;color:#1a2a06;white-space:pre;transform:scaleX(0.9365);transform-origin:0 0;">Ch 4</div>
<div style="left:244.40px;top:746.93px;height:13px;line-height:13px;font-family:'Liberation Sans','Noto Sans CJK JP',sans-serif;font-size:10.3px;color:#333;white-space:pre;transform:scaleX(1.0043);transform-origin:0 0;">50 A/div</div>
<div style="left:244.40px;top:759.63px;height:13px;line-height:13px;font-family:'Liberation Sans','Noto Sans CJK JP',sans-serif;font-size:10.3px;color:#333;white-space:pre;transform:scaleX(1.0090);transform-origin:0 0;">1 MΩ</div>
<div style="left:244.40px;top:772.33px;height:13px;line-height:13px;font-family:'Liberation Sans','Noto Sans CJK JP',sans-serif;font-size:10.3px;color:#333;white-space:pre;transform:scaleX(0.9878);transform-origin:0 0;">200 MHz</div>
<div style="left:93.30px;top:773.07px;height:9px;line-height:9px;font-family:'Liberation Sans','Noto Sans CJK JP',sans-serif;font-size:7px;font-weight:700;color:#2a2a2a;white-space:pre;transform:scaleX(0.9877);transform-origin:0 0;">B</div>
<div style="left:97.80px;top:776.07px;height:6px;line-height:6px;font-family:'Liberation Sans','Noto Sans CJK JP',sans-serif;font-size:5px;font-weight:700;color:#2a2a2a;white-space:pre;transform:scaleX(1.2337);transform-origin:0 0;">w</div>
<div style="left:158.80px;top:773.07px;height:9px;line-height:9px;font-family:'Liberation Sans','Noto Sans CJK JP',sans-serif;font-size:7px;font-weight:700;color:#2a2a2a;white-space:pre;transform:scaleX(0.9877);transform-origin:0 0;">B</div>
<div style="left:163.30px;top:776.07px;height:6px;line-height:6px;font-family:'Liberation Sans','Noto Sans CJK JP',sans-serif;font-size:5px;font-weight:700;color:#2a2a2a;white-space:pre;transform:scaleX(1.2337);transform-origin:0 0;">w</div>
<div style="left:224.10px;top:773.07px;height:9px;line-height:9px;font-family:'Liberation Sans','Noto Sans CJK JP',sans-serif;font-size:7px;font-weight:700;color:#2a2a2a;white-space:pre;transform:scaleX(0.9877);transform-origin:0 0;">B</div>
<div style="left:228.60px;top:776.07px;height:6px;line-height:6px;font-family:'Liberation Sans','Noto Sans CJK JP',sans-serif;font-size:5px;font-weight:700;color:#2a2a2a;white-space:pre;transform:scaleX(1.2337);transform-origin:0 0;">w</div>
<div style="left:289.70px;top:773.07px;height:9px;line-height:9px;font-family:'Liberation Sans','Noto Sans CJK JP',sans-serif;font-size:7px;font-weight:700;color:#2a2a2a;white-space:pre;transform:scaleX(0.9877);transform-origin:0 0;">B</div>
<div style="left:294.20px;top:776.07px;height:6px;line-height:6px;font-family:'Liberation Sans','Noto Sans CJK JP',sans-serif;font-size:5px;font-weight:700;color:#2a2a2a;white-space:pre;transform:scaleX(1.2337);transform-origin:0 0;">w</div>
<svg style="left:48.500px;top:761.500px" width="12" height="9" viewBox="0 0 12 9"><path d="M0.800 8 V5.500 A3.200 3.200 0 0 1 7.200 5.500 V6.500 M3.800 4 A3.200 3.200 0 0 1 10.500 5.500 V8" fill="none" stroke="#4a4a4a" stroke-width="1"/></svg>
<div style="left:306.3px;top:733.3px;width:61.8px;height:52.4px;background:#808080;border-radius:3px"></div>
<div style="left:306.3px;top:733.3px;width:61.8px;height:13px;background:#b07830;border-radius:3px 3px 0 0"></div>
<div style="left:309.30px;top:732.80px;height:14px;line-height:14px;font-family:'Liberation Sans','Noto Sans CJK JP',sans-serif;font-size:10.4px;color:#3a2a10;white-space:pre;transform:scaleX(1.0640);transform-origin:0 0;">Math 1</div>
<div style="left:309.70px;top:746.93px;height:13px;line-height:13px;font-family:'Liberation Sans','Noto Sans CJK JP',sans-serif;font-size:10.3px;color:#3c3c3c;white-space:pre;transform:scaleX(0.9921);transform-origin:0 0;">47.6674 V…</div>
<div style="left:309.70px;top:759.63px;height:13px;line-height:13px;font-family:'Liberation Sans','Noto Sans CJK JP',sans-serif;font-size:10.3px;color:#3c3c3c;white-space:pre;transform:scaleX(1.0049);transform-origin:0 0;">Ch3*Ch2</div>
<div style="left:309.70px;top:772.33px;height:13px;line-height:13px;font-family:'Liberation Sans','Noto Sans CJK JP',sans-serif;font-size:10.3px;color:#3c3c3c;white-space:pre;transform:scaleX(0.9562);transform-origin:0 0;">Meas 2</div>
<div style="left:371.8px;top:733.3px;width:62.2px;height:52.4px;background:#808080;border-radius:3px"></div>
<div style="left:371.8px;top:733.3px;width:62.2px;height:13px;background:#5a2a6a;border-radius:3px 3px 0 0"></div>
<div style="left:374.80px;top:732.80px;height:14px;line-height:14px;font-family:'Liberation Sans','Noto Sans CJK JP',sans-serif;font-size:10.4px;color:#c8b0d8;white-space:pre;transform:scaleX(1.0672);transform-origin:0 0;">Math 2</div>
<div style="left:375.20px;top:746.93px;height:13px;line-height:13px;font-family:'Liberation Sans','Noto Sans CJK JP',sans-serif;font-size:10.3px;color:#3c3c3c;white-space:pre;transform:scaleX(0.9921);transform-origin:0 0;">47.6674 V…</div>
<div style="left:375.20px;top:759.63px;height:13px;line-height:13px;font-family:'Liberation Sans','Noto Sans CJK JP',sans-serif;font-size:10.3px;color:#3c3c3c;white-space:pre;transform:scaleX(1.0049);transform-origin:0 0;">Ch3*Ch2</div>
<div style="left:375.20px;top:772.33px;height:13px;line-height:13px;font-family:'Liberation Sans','Noto Sans CJK JP',sans-serif;font-size:10.3px;color:#3c3c3c;white-space:pre;transform:scaleX(0.9562);transform-origin:0 0;">Meas 3</div>
<div style="left:437.4px;top:733.3px;width:61.8px;height:52.4px;background:#808080;border-radius:3px"></div>
<div style="left:437.4px;top:733.3px;width:61.8px;height:13px;background:#85858b;border-radius:3px 3px 0 0"></div>
<div style="left:440.40px;top:732.80px;height:14px;line-height:14px;font-family:'Liberation Sans','Noto Sans CJK JP',sans-serif;font-size:10.4px;font-weight:700;color:#2a2a2a;white-space:pre;transform:scaleX(0.9480);transform-origin:0 0;">Ref 1</div>
<div style="left:440.80px;top:746.93px;height:13px;line-height:13px;font-family:'Liberation Sans','Noto Sans CJK JP',sans-serif;font-size:10.3px;color:#3c3c3c;white-space:pre;transform:scaleX(0.9861);transform-origin:0 0;">10 V/div</div>
<div style="left:440.80px;top:759.63px;height:13px;line-height:13px;font-family:'Liberation Sans','Noto Sans CJK JP',sans-serif;font-size:10.3px;color:#3c3c3c;white-space:pre;transform:scaleX(0.9324);transform-origin:0 0;">12.5 GS/s</div>
<div style="left:440.80px;top:772.33px;height:13px;line-height:13px;font-family:'Liberation Sans','Noto Sans CJK JP',sans-serif;font-size:10.3px;color:#3c3c3c;white-space:pre;transform:scaleX(1.0268);transform-origin:0 0;">c1.wfm</div>
<div style="left:637px;top:733px;width:1px;height:53px;background:#4c4c4c"></div>
<div style="left:741px;top:733px;width:1px;height:53px;background:#4c4c4c"></div>
<div style="left:782.5px;top:733px;width:1px;height:53px;background:#4c4c4c"></div>
<div style="left:1290.5px;top:733px;width:1px;height:53px;background:#4c4c4c"></div>
<div class="btn" style="left:644.1px;top:732.5px;width:27.2px;height:53px;"></div>
<div style="left:647.6px;top:737.5px;width:20.5px;height:1.2px;background:#b0202c"></div>
<div style="left:648.05px;top:744.63px;height:13px;line-height:13px;font-family:'Liberation Sans','Noto Sans CJK JP',sans-serif;font-size:10.3px;color:#f0f0f0;white-space:pre;transform:scaleX(1.0639);transform-origin:0 0;">Add</div>
<div style="left:647.05px;top:755.93px;height:13px;line-height:13px;font-family:'Liberation Sans','Noto Sans CJK JP',sans-serif;font-size:10.3px;color:#f0f0f0;white-space:pre;transform:scaleX(1.0432);transform-origin:0 0;">New</div>
<div style="left:645.30px;top:767.13px;height:13px;line-height:13px;font-family:'Liberation Sans','Noto Sans CJK JP',sans-serif;font-size:10.3px;color:#f0f0f0;white-space:pre;transform:scaleX(1.0914);transform-origin:0 0;">Math</div>
<div class="btn" style="left:675.2px;top:732.5px;width:27.2px;height:53px;"></div>
<div style="left:678.7px;top:737.5px;width:20.5px;height:1.2px;background:#5a8ad0"></div>
<div style="left:679.15px;top:744.63px;height:13px;line-height:13px;font-family:'Liberation Sans','Noto Sans CJK JP',sans-serif;font-size:10.3px;color:#f0f0f0;white-space:pre;transform:scaleX(1.0639);transform-origin:0 0;">Add</div>
<div style="left:678.15px;top:755.93px;height:13px;line-height:13px;font-family:'Liberation Sans','Noto Sans CJK JP',sans-serif;font-size:10.3px;color:#f0f0f0;white-space:pre;transform:scaleX(1.0432);transform-origin:0 0;">New</div>
<div style="left:680.65px;top:767.13px;height:13px;line-height:13px;font-family:'Liberation Sans','Noto Sans CJK JP',sans-serif;font-size:10.3px;color:#f0f0f0;white-space:pre;transform:scaleX(1.0292);transform-origin:0 0;">Ref</div>
<div class="btn" style="left:706.4px;top:732.5px;width:27.2px;height:53px;"></div>
<div style="left:709.9px;top:737.5px;width:20.5px;height:1.2px;background:#b050d0"></div>
<div style="left:710.35px;top:744.63px;height:13px;line-height:13px;font-family:'Liberation Sans','Noto Sans CJK JP',sans-serif;font-size:10.3px;color:#f0f0f0;white-space:pre;transform:scaleX(1.0639);transform-origin:0 0;">Add</div>
<div style="left:709.35px;top:755.93px;height:13px;line-height:13px;font-family:'Liberation Sans','Noto Sans CJK JP',sans-serif;font-size:10.3px;color:#f0f0f0;white-space:pre;transform:scaleX(1.0432);transform-origin:0 0;">New</div>
<div style="left:711.35px;top:767.13px;height:13px;line-height:13px;font-family:'Liberation Sans','Noto Sans CJK JP',sans-serif;font-size:10.3px;color:#f0f0f0;white-space:pre;transform:scaleX(0.9859);transform-origin:0 0;">Bus</div>
<div class="btn" style="left:748px;top:732.5px;width:27.2px;height:53px;"></div>
<div style="left:751.5px;top:737.5px;width:20.5px;height:1.2px;background:#4a4a4a"></div>
<div style="left:750.20px;top:756.43px;height:13px;line-height:13px;font-family:'Liberation Sans','Noto Sans CJK JP',sans-serif;font-size:10.3px;color:#f0f0f0;white-space:pre;transform:scaleX(1.0048);transform-origin:0 0;">DVM</div>
<div style="left:790.9px;top:734px;width:129.3px;height:51px;background:#cfcfcf;border-radius:2px"></div>
<div style="left:790.9px;top:734px;width:129.3px;height:12.5px;background:#4e4e4e;border-radius:2px 2px 0 0"></div>
<div style="left:794.20px;top:733.26px;height:14px;line-height:14px;font-family:'Liberation Sans','Noto Sans CJK JP',sans-serif;font-size:10.5px;color:#f0f0f0;white-space:pre;transform:scaleX(1.0524);transform-origin:0 0;">AFG: Arbitrary</div>
<div style="left:794.10px;top:746.93px;height:13px;line-height:13px;font-family:'Liberation Sans','Noto Sans CJK JP',sans-serif;font-size:10.3px;color:#262626;white-space:pre;transform:scaleX(0.9608);transform-origin:0 0;">Freq: 16.8919 kHz</div>
<div style="left:794.10px;top:759.58px;height:13px;line-height:13px;font-family:'Liberation Sans','Noto Sans CJK JP',sans-serif;font-size:10.3px;color:#262626;white-space:pre;transform:scaleX(0.9793);transform-origin:0 0;">Amp: 5 Vpp</div>
<div style="left:794.10px;top:772.23px;height:13px;line-height:13px;font-family:'Liberation Sans','Noto Sans CJK JP',sans-serif;font-size:10.3px;color:#262626;white-space:pre;transform:scaleX(0.9729);transform-origin:0 0;">Offset: 2.5 V</div>
<div style="left:877.8px;top:745px;width:39.4px;height:40px;background:linear-gradient(#d8d8d8,#c4c4c4);border:2px solid #46c4e4;border-radius:4px;box-shadow:inset 0 0 0 1px #9a9a9a"></div>
<div style="left:884.90px;top:758.63px;height:13px;line-height:13px;font-family:'Liberation Sans','Noto Sans CJK JP',sans-serif;font-size:10px;font-weight:700;color:#1a1a1a;white-space:pre;transform:scaleX(0.9569);transform-origin:0 0;">Burst</div>
<div style="left:924.8px;top:734px;width:136.5px;height:51px;background:#cfcfcf;border-radius:2px"></div>
<div style="left:924.8px;top:734px;width:136.5px;height:12.5px;background:#4e4e4e;border-radius:2px 2px 0 0"></div>
<div style="left:928.10px;top:733.26px;height:14px;line-height:14px;font-family:'Liberation Sans','Noto Sans CJK JP',sans-serif;font-size:10.5px;color:#f0f0f0;white-space:pre;transform:scaleX(1.0913);transform-origin:0 0;">Horizontal</div>
<div style="left:928.00px;top:746.93px;height:13px;line-height:13px;font-family:'Liberation Sans','Noto Sans CJK JP',sans-serif;font-size:10.3px;color:#262626;white-space:pre;transform:scaleX(0.9584);transform-origin:0 0;">10 µs/div</div>
<div style="left:1000.80px;top:746.93px;height:13px;line-height:13px;font-family:'Liberation Sans','Noto Sans CJK JP',sans-serif;font-size:10.3px;color:#262626;white-space:pre;transform:scaleX(0.9767);transform-origin:0 0;">100 µs</div>
<div style="left:928.00px;top:759.58px;height:13px;line-height:13px;font-family:'Liberation Sans','Noto Sans CJK JP',sans-serif;font-size:10.3px;color:#262626;white-space:pre;transform:scaleX(0.8932);transform-origin:0 0;">SR: 12.5 GS/s</div>
<div style="left:1000.80px;top:759.58px;height:13px;line-height:13px;font-family:'Liberation Sans','Noto Sans CJK JP',sans-serif;font-size:10.3px;color:#262626;white-space:pre;transform:scaleX(0.9934);transform-origin:0 0;">80 ps/pt</div>
<div style="left:928.00px;top:772.23px;height:13px;line-height:13px;font-family:'Liberation Sans','Noto Sans CJK JP',sans-serif;font-size:10.3px;color:#262626;white-space:pre;transform:scaleX(0.9577);transform-origin:0 0;">RL: 1.25 Mpts</div>
<div style="left:1010.20px;top:772.23px;height:13px;line-height:13px;font-family:'Liberation Sans','Noto Sans CJK JP',sans-serif;font-size:10.3px;color:#262626;white-space:pre;transform:scaleX(1.0190);transform-origin:0 0;">10%</div>
<svg style="left:1000.900px;top:774.700px" width="7" height="8" viewBox="0 0 7 8"><path d="M0.300 0.300 H6.500 V4.800 L3.400 7.600 L0.300 4.800 Z" fill="#d07a10"/><text x="3.400" y="5" font-size="5" fill="#2a1a06" text-anchor="middle" font-family="Liberation Sans" font-weight="bold">T</text></svg>
<div style="left:1066px;top:734px;width:108.8px;height:51px;background:#cfcfcf;border-radius:2px"></div>
<div style="left:1066px;top:734px;width:108.8px;height:12.5px;background:#4e4e4e;border-radius:2px 2px 0 0"></div>
<div style="left:1069.30px;top:733.26px;height:14px;line-height:14px;font-family:'Liberation Sans','Noto Sans CJK JP',sans-serif;font-size:10.5px;color:#f0f0f0;white-space:pre;transform:scaleX(1.0433);transform-origin:0 0;">Trigger</div>
<div style="left:1069.30px;top:746.93px;height:13px;line-height:13px;font-family:'Liberation Sans','Noto Sans CJK JP',sans-serif;font-size:10.3px;color:#262626;white-space:pre;transform:scaleX(0.9746);transform-origin:0 0;">Aux</div>
<div style="left:1129.70px;top:746.93px;height:13px;line-height:13px;font-family:'Liberation Sans','Noto Sans CJK JP',sans-serif;font-size:10.3px;color:#262626;white-space:pre;transform:scaleX(0.9374);transform-origin:0 0;">1 V</div>
<svg style="left:1111px;top:749px" width="12" height="9" viewBox="0 0 12 9"><path d="M0.500 8 H3.500 L7.500 1 H11" fill="none" stroke="#5a5ac8" stroke-width="1"/></svg>
<div style="left:1179.9px;top:734px;width:102.3px;height:51px;background:#cfcfcf;border-radius:2px"></div>
<div style="left:1179.9px;top:734px;width:102.3px;height:12.5px;background:#4e4e4e;border-radius:2px 2px 0 0"></div>
<div style="left:1183.20px;top:733.26px;height:14px;line-height:14px;font-family:'Liberation Sans','Noto Sans CJK JP',sans-serif;font-size:10.5px;color:#f0f0f0;white-space:pre;transform:scaleX(1.0693);transform-origin:0 0;">Acquisition</div>
<div style="left:1183.20px;top:746.93px;height:13px;line-height:13px;font-family:'Liberation Sans','Noto Sans CJK JP',sans-serif;font-size:10.3px;color:#262626;white-space:pre;transform:scaleX(0.9897);transform-origin:0 0;">Auto,</div>
<div style="left:1238.30px;top:746.93px;height:13px;line-height:13px;font-family:'Liberation Sans','Noto Sans CJK JP',sans-serif;font-size:10.3px;color:#262626;white-space:pre;transform:scaleX(0.9416);transform-origin:0 0;">Analyze</div>
<div style="left:1183.20px;top:759.58px;height:13px;line-height:13px;font-family:'Liberation Sans','Noto Sans CJK JP',sans-serif;font-size:10.3px;color:#262626;white-space:pre;transform:scaleX(0.9467);transform-origin:0 0;">Sample: 12 bits</div>
<div style="left:1183.20px;top:772.23px;height:13px;line-height:13px;font-family:'Liberation Sans','Noto Sans CJK JP',sans-serif;font-size:10.3px;color:#262626;white-space:pre;transform:scaleX(0.9378);transform-origin:0 0;">4 Acqs</div>
<div style="left:1298.1px;top:732.9px;width:61.4px;height:23.6px;background:#f0f010;border-radius:4px;border:1px solid #b0b000"></div>
<div style="left:1314.10px;top:738.16px;height:11px;line-height:11px;font-family:'DejaVu Sans','Liberation Sans',sans-serif;font-size:8.2px;font-weight:700;color:#141414;white-space:pre;transform:scaleX(1.0142);transform-origin:0 0;">Ready</div>
<div style="left:1298.1px;top:760.4px;width:61.4px;height:25.1px;background:#cfcfcf;border-radius:3px;border:1px solid #8a8a8a"></div>
<div style="left:1300.70px;top:760.53px;height:13px;line-height:13px;font-family:'Liberation Sans','Noto Sans CJK JP',sans-serif;font-size:10.3px;color:#262626;white-space:pre;transform:scaleX(0.9622);transform-origin:0 0;">13 Dec 2022</div>
<div style="left:1303.45px;top:771.93px;height:13px;line-height:13px;font-family:'Liberation Sans','Noto Sans CJK JP',sans-serif;font-size:10.3px;color:#262626;white-space:pre;transform:scaleX(0.9778);transform-origin:0 0;">1:00:54 PM</div>
<div style="left:28px;top:788px;width:1352px;height:17px;background:#2d2d2d"></div>
<svg style="left:30px;top:788px" width="60" height="17" viewBox="0 0 60 17">
<rect x="2" y="4.500" width="10" height="8" rx="1.500" fill="none" stroke="#e0e0e0" stroke-width="1.300"/><path d="M6 6.500 v4 M8.500 6.500 v4" stroke="#e0e0e0" stroke-width="1.200"/>
<path d="M24 13 a3 3 0 0 1 0.500 -6 a4 4 0 0 1 7.500 1 a2.600 2.600 0 0 1 0 5 z" fill="#e0e0e0"/>
<path d="M44.500 9.500 L49 5 L53.500 9.500 M45.500 8.500 V13 H48 V10 H50 V13 H52.500 V8.500" fill="none" stroke="#e0e0e0" stroke-width="1.300"/>
</svg>
<svg style="left:1095px;top:788px" width="80" height="17" viewBox="0 0 80 17">
<rect x="3" y="5" width="11" height="8" rx="1.500" fill="none" stroke="#e0e0e0" stroke-width="1.300"/><circle cx="8.500" cy="9" r="2" fill="#e0e0e0"/><rect x="6" y="3.500" width="4" height="2" fill="#e0e0e0"/>
<rect x="24" y="4.500" width="11" height="8" rx="1.500" fill="none" stroke="#e0e0e0" stroke-width="1.400"/>
<rect x="44" y="4.500" width="11" height="8" rx="1" fill="#e0e0e0"/><path d="M45.500 11.500 l3 -3.500 l2 2 l1.500 -1.500 l2 3 z" fill="#2c2c2c"/>
<path d="M67.500 7 l-2 2 l2 2 M71.500 7 l2 2 l-2 2" fill="none" stroke="#e0e0e0" stroke-width="1.200"/>
</svg>
<div style="left:1180.90px;top:788.73px;height:13px;line-height:13px;font-family:'Noto Sans CJK JP','Liberation Sans',sans-serif;font-size:9.8px;color:#959595;white-space:pre;transform:scaleX(0.6380);transform-origin:0 0;font-feature-settings:"palt";">リセット</div>
<div style="left:1217.5px;top:795.3px;width:6.2px;height:2px;background:#e4e4e4"></div>
<div style="left:1234.20px;top:790.01px;height:12px;line-height:12px;font-family:'Liberation Sans','Noto Sans CJK JP',sans-serif;font-size:9.5px;font-weight:700;color:#ececec;white-space:pre;transform:scaleX(0.8835);transform-origin:0 0;">100 %</div>
<div style="left:1268.2px;top:795.3px;width:6.4px;height:2px;background:#e4e4e4"></div>
<div style="left:1270.4px;top:793.1px;width:2px;height:6.4px;background:#e4e4e4"></div>
<svg style="left:1286.500px;top:791px" width="11" height="11" viewBox="0 0 11 11"><circle cx="5.500" cy="5.500" r="4.300" fill="none" stroke="#e4e4e4" stroke-width="1.300"/><path d="M5.500 3 V6 H3.800" stroke="#e4e4e4" stroke-width="1.300" fill="none"/></svg>
<div style="left:1300.10px;top:790.01px;height:12px;line-height:12px;font-family:'Liberation Sans','Noto Sans CJK JP',sans-serif;font-size:9.5px;font-weight:500;color:#ececec;white-space:pre;transform:scaleX(0.8844);transform-origin:0 0;">12月13日</div>
<div style="left:1340.30px;top:790.01px;height:12px;line-height:12px;font-family:'Liberation Sans','Noto Sans CJK JP',sans-serif;font-size:9.5px;font-weight:500;color:#ececec;white-space:pre;transform:scaleX(0.8968);transform-origin:0 0;">1:00 午後</div>
<svg style="left:1325px;top:627px" width="14" height="22" viewBox="0 0 14 22"><path d="M1 1 V17 L4.800 13.500 L7.500 20 L10 19 L7.300 12.600 H12.300 Z" fill="#000" stroke="#fff" stroke-width="1.100"/></svg></div></body></html>
